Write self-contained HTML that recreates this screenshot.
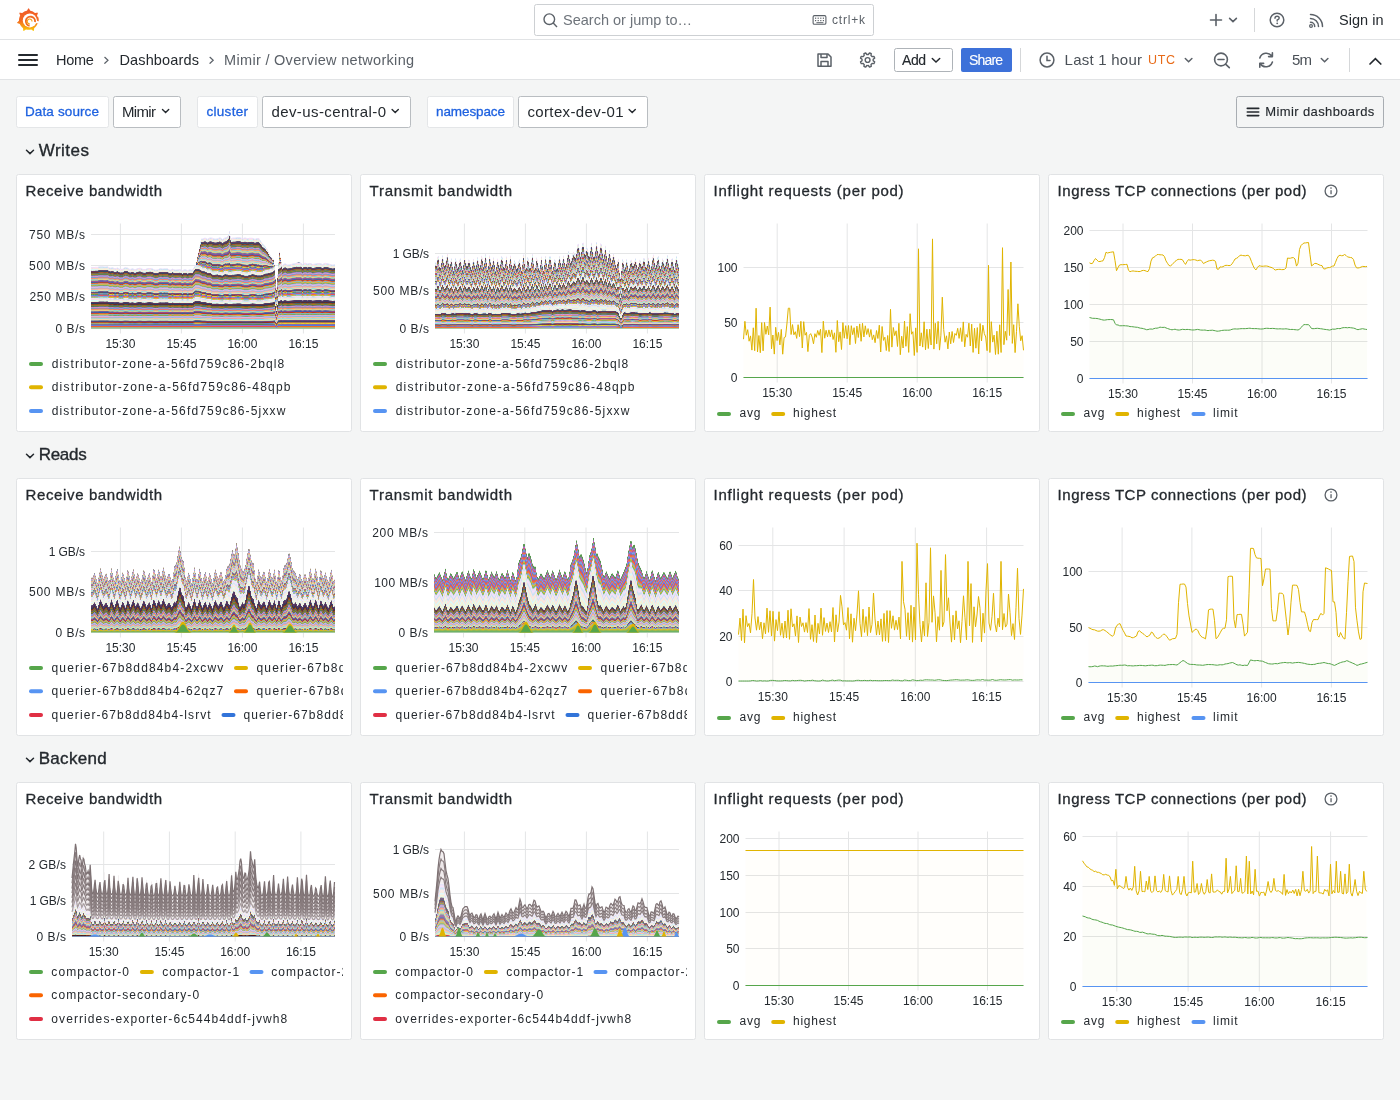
<!DOCTYPE html><html><head><meta charset="utf-8"><title>Mimir / Overview networking</title><style>html,body{margin:0;padding:0;background:#f4f5f5;width:1400px;height:1100px;overflow:hidden}svg{display:block;will-change:transform}</style></head><body><svg width="1400" height="1100" viewBox="0 0 1400 1100" font-family="'Liberation Sans', sans-serif" fill="#24292e"><style>.c rect{width:1px}</style><defs><linearGradient id="lg" x1="0" y1="0" x2="0" y2="1"><stop offset="0" stop-color="#F05A28"/><stop offset="0.55" stop-color="#F46A20"/><stop offset="1" stop-color="#FBCA0A"/></linearGradient><linearGradient id="g0" x1="0" y1="1" x2="0" y2="0"><stop offset="0.006" stop-color="#66ae5d"/><stop offset="0.022" stop-color="#e3bb19"/><stop offset="0.043" stop-color="#679ef3"/><stop offset="0.059" stop-color="#fa7319"/><stop offset="0.074" stop-color="#e34356"/><stop offset="0.091" stop-color="#4681dc"/><stop offset="0.108" stop-color="#ac63d1"/><stop offset="0.127" stop-color="#7e6da9"/><stop offset="0.143" stop-color="#4b9342"/><stop offset="0.154" stop-color="#f3d124"/><stop offset="0.169" stop-color="#568ac5"/><stop offset="0.188" stop-color="#c76c2e"/><stop offset="0.205" stop-color="#94271b"/><stop offset="0.220" stop-color="#225589"/><stop offset="0.233" stop-color="#7b3571"/><stop offset="0.251" stop-color="#685684"/><stop offset="0.269" stop-color="#bedeb3"/><stop offset="0.290" stop-color="#f5d9a2"/><stop offset="0.317" stop-color="#7edeee"/><stop offset="0.337" stop-color="#f9c09a"/><stop offset="0.349" stop-color="#f39c9c"/><stop offset="0.366" stop-color="#8ebcdb"/><stop offset="0.390" stop-color="#e7b0e4"/><stop offset="0.413" stop-color="#b6abe3"/><stop offset="0.430" stop-color="#71a762"/><stop offset="0.447" stop-color="#e7b426"/><stop offset="0.463" stop-color="#73b7cd"/><stop offset="0.477" stop-color="#e38242"/><stop offset="0.495" stop-color="#c53119"/><stop offset="0.514" stop-color="#2261aa"/><stop offset="0.532" stop-color="#a0428e"/><stop offset="0.548" stop-color="#705e9d"/><stop offset="0.564" stop-color="#a4c995"/><stop offset="0.582" stop-color="#f3ce7b"/><stop offset="0.600" stop-color="#74cade"/><stop offset="0.614" stop-color="#f99d5f"/><stop offset="0.633" stop-color="#ec736f"/><stop offset="0.657" stop-color="#629fd2"/><stop offset="0.679" stop-color="#da8fd2"/><stop offset="0.698" stop-color="#8c7cbe"/><stop offset="0.718" stop-color="#527747"/><stop offset="0.743" stop-color="#a0811b"/><stop offset="0.761" stop-color="#43676e"/><stop offset="0.775" stop-color="#a35622"/><stop offset="0.794" stop-color="#682b24"/><stop offset="0.815" stop-color="#1e4062"/><stop offset="0.839" stop-color="#622e5b"/><stop offset="0.860" stop-color="#52406b"/><stop offset="0.877" stop-color="#e3f9db"/><stop offset="0.895" stop-color="#fceccf"/><stop offset="0.910" stop-color="#d3faff"/><stop offset="0.924" stop-color="#f9e4d6"/><stop offset="0.941" stop-color="#fce4e1"/><stop offset="0.960" stop-color="#c0e2f5"/><stop offset="0.977" stop-color="#f9dcf9"/><stop offset="0.992" stop-color="#e1ddf7"/></linearGradient><linearGradient id="g1" x1="0" y1="1" x2="0" y2="0"><stop offset="0.005" stop-color="#6fb366"/><stop offset="0.018" stop-color="#e4bf26"/><stop offset="0.033" stop-color="#70a4f3"/><stop offset="0.049" stop-color="#fa7b26"/><stop offset="0.062" stop-color="#e44e60"/><stop offset="0.072" stop-color="#5088de"/><stop offset="0.082" stop-color="#b06bd3"/><stop offset="0.092" stop-color="#8575ae"/><stop offset="0.105" stop-color="#55994c"/><stop offset="0.117" stop-color="#f3d330"/><stop offset="0.128" stop-color="#6091c8"/><stop offset="0.140" stop-color="#ca7439"/><stop offset="0.150" stop-color="#9a3327"/><stop offset="0.162" stop-color="#2e5f8f"/><stop offset="0.177" stop-color="#824079"/><stop offset="0.192" stop-color="#71608b"/><stop offset="0.205" stop-color="#c1e0b7"/><stop offset="0.220" stop-color="#f5dba7"/><stop offset="0.236" stop-color="#85e0ef"/><stop offset="0.257" stop-color="#f9c49f"/><stop offset="0.283" stop-color="#f3a1a1"/><stop offset="0.308" stop-color="#94c0dd"/><stop offset="0.334" stop-color="#e8b5e6"/><stop offset="0.359" stop-color="#baafe4"/><stop offset="0.385" stop-color="#79ac6b"/><stop offset="0.412" stop-color="#e8b832"/><stop offset="0.433" stop-color="#7bbbd0"/><stop offset="0.454" stop-color="#e4894c"/><stop offset="0.478" stop-color="#c83d26"/><stop offset="0.500" stop-color="#2e6aaf"/><stop offset="0.523" stop-color="#a54c94"/><stop offset="0.544" stop-color="#7867a3"/><stop offset="0.563" stop-color="#a9cc9b"/><stop offset="0.582" stop-color="#f3d182"/><stop offset="0.600" stop-color="#7ccde0"/><stop offset="0.616" stop-color="#f9a368"/><stop offset="0.636" stop-color="#ed7b77"/><stop offset="0.661" stop-color="#6ba4d5"/><stop offset="0.688" stop-color="#dc95d5"/><stop offset="0.714" stop-color="#9383c1"/><stop offset="0.737" stop-color="#5b7e51"/><stop offset="0.760" stop-color="#a58827"/><stop offset="0.780" stop-color="#4e7076"/><stop offset="0.799" stop-color="#a8602e"/><stop offset="0.820" stop-color="#713730"/><stop offset="0.837" stop-color="#2a4a6b"/><stop offset="0.853" stop-color="#6b3964"/><stop offset="0.871" stop-color="#5b4a73"/><stop offset="0.888" stop-color="#e4f9dd"/><stop offset="0.903" stop-color="#fcedd1"/><stop offset="0.920" stop-color="#d6faff"/><stop offset="0.937" stop-color="#f9e6d8"/><stop offset="0.951" stop-color="#fce6e2"/><stop offset="0.965" stop-color="#c4e3f5"/><stop offset="0.980" stop-color="#f9def9"/><stop offset="0.993" stop-color="#e2dff8"/></linearGradient><linearGradient id="g2" x1="0" y1="1" x2="0" y2="0"><stop offset="0.005" stop-color="#6fb366"/><stop offset="0.017" stop-color="#e4bf26"/><stop offset="0.033" stop-color="#70a4f3"/><stop offset="0.049" stop-color="#fa7b26"/><stop offset="0.064" stop-color="#e44e60"/><stop offset="0.075" stop-color="#5088de"/><stop offset="0.088" stop-color="#b06bd3"/><stop offset="0.104" stop-color="#8575ae"/><stop offset="0.117" stop-color="#55994c"/><stop offset="0.131" stop-color="#f3d330"/><stop offset="0.145" stop-color="#6091c8"/><stop offset="0.159" stop-color="#ca7439"/><stop offset="0.172" stop-color="#9a3327"/><stop offset="0.182" stop-color="#2e5f8f"/><stop offset="0.197" stop-color="#824079"/><stop offset="0.212" stop-color="#71608b"/><stop offset="0.226" stop-color="#c1e0b7"/><stop offset="0.248" stop-color="#f5dba7"/><stop offset="0.273" stop-color="#85e0ef"/><stop offset="0.292" stop-color="#f9c49f"/><stop offset="0.311" stop-color="#f3a1a1"/><stop offset="0.334" stop-color="#94c0dd"/><stop offset="0.354" stop-color="#e8b5e6"/><stop offset="0.374" stop-color="#baafe4"/><stop offset="0.393" stop-color="#79ac6b"/><stop offset="0.410" stop-color="#e8b832"/><stop offset="0.426" stop-color="#7bbbd0"/><stop offset="0.441" stop-color="#e4894c"/><stop offset="0.464" stop-color="#c83d26"/><stop offset="0.489" stop-color="#2e6aaf"/><stop offset="0.513" stop-color="#a54c94"/><stop offset="0.538" stop-color="#7867a3"/><stop offset="0.560" stop-color="#a9cc9b"/><stop offset="0.585" stop-color="#f3d182"/><stop offset="0.611" stop-color="#7ccde0"/><stop offset="0.631" stop-color="#f9a368"/><stop offset="0.650" stop-color="#ed7b77"/><stop offset="0.673" stop-color="#6ba4d5"/><stop offset="0.692" stop-color="#dc95d5"/><stop offset="0.708" stop-color="#9383c1"/><stop offset="0.729" stop-color="#5b7e51"/><stop offset="0.753" stop-color="#a58827"/><stop offset="0.772" stop-color="#4e7076"/><stop offset="0.790" stop-color="#a8602e"/><stop offset="0.809" stop-color="#713730"/><stop offset="0.830" stop-color="#2a4a6b"/><stop offset="0.854" stop-color="#6b3964"/><stop offset="0.872" stop-color="#5b4a73"/><stop offset="0.890" stop-color="#e4f9dd"/><stop offset="0.907" stop-color="#fcedd1"/><stop offset="0.920" stop-color="#d6faff"/><stop offset="0.932" stop-color="#f9e6d8"/><stop offset="0.948" stop-color="#fce6e2"/><stop offset="0.964" stop-color="#c4e3f5"/><stop offset="0.979" stop-color="#f9def9"/><stop offset="0.994" stop-color="#e2dff8"/></linearGradient><linearGradient id="g3" x1="0" y1="1" x2="0" y2="0"><stop offset="0.010" stop-color="#6fb366"/><stop offset="0.031" stop-color="#e4bf26"/><stop offset="0.047" stop-color="#70a4f3"/><stop offset="0.057" stop-color="#fa7b26"/><stop offset="0.071" stop-color="#e44e60"/><stop offset="0.090" stop-color="#5088de"/><stop offset="0.108" stop-color="#b06bd3"/><stop offset="0.123" stop-color="#8575ae"/><stop offset="0.138" stop-color="#55994c"/><stop offset="0.154" stop-color="#f3d330"/><stop offset="0.171" stop-color="#6091c8"/><stop offset="0.184" stop-color="#ca7439"/><stop offset="0.197" stop-color="#9a3327"/><stop offset="0.211" stop-color="#2e5f8f"/><stop offset="0.227" stop-color="#824079"/><stop offset="0.247" stop-color="#71608b"/><stop offset="0.271" stop-color="#c1e0b7"/><stop offset="0.294" stop-color="#f5dba7"/><stop offset="0.313" stop-color="#85e0ef"/><stop offset="0.329" stop-color="#f9c49f"/><stop offset="0.343" stop-color="#f3a1a1"/><stop offset="0.355" stop-color="#94c0dd"/><stop offset="0.370" stop-color="#e8b5e6"/><stop offset="0.388" stop-color="#baafe4"/><stop offset="0.405" stop-color="#79ac6b"/><stop offset="0.426" stop-color="#e8b832"/><stop offset="0.448" stop-color="#7bbbd0"/><stop offset="0.468" stop-color="#e4894c"/><stop offset="0.485" stop-color="#c83d26"/><stop offset="0.499" stop-color="#2e6aaf"/><stop offset="0.513" stop-color="#a54c94"/><stop offset="0.528" stop-color="#7867a3"/><stop offset="0.544" stop-color="#a9cc9b"/><stop offset="0.567" stop-color="#f3d182"/><stop offset="0.591" stop-color="#7ccde0"/><stop offset="0.609" stop-color="#f9a368"/><stop offset="0.629" stop-color="#ed7b77"/><stop offset="0.653" stop-color="#6ba4d5"/><stop offset="0.677" stop-color="#dc95d5"/><stop offset="0.701" stop-color="#9383c1"/><stop offset="0.727" stop-color="#5b7e51"/><stop offset="0.755" stop-color="#a58827"/><stop offset="0.779" stop-color="#4e7076"/><stop offset="0.805" stop-color="#a8602e"/><stop offset="0.837" stop-color="#713730"/><stop offset="0.861" stop-color="#2a4a6b"/><stop offset="0.883" stop-color="#6b3964"/><stop offset="0.910" stop-color="#5b4a73"/><stop offset="0.928" stop-color="#e4f9dd"/><stop offset="0.938" stop-color="#fcedd1"/><stop offset="0.948" stop-color="#d6faff"/><stop offset="0.957" stop-color="#f9e6d8"/><stop offset="0.967" stop-color="#fce6e2"/><stop offset="0.976" stop-color="#c4e3f5"/><stop offset="0.986" stop-color="#f9def9"/><stop offset="0.995" stop-color="#e2dff8"/></linearGradient><linearGradient id="g4" x1="0" y1="1" x2="0" y2="0"><stop offset="0.005" stop-color="#e5fade"/><stop offset="0.015" stop-color="#fcedd3"/><stop offset="0.025" stop-color="#d7faff"/><stop offset="0.035" stop-color="#fae7da"/><stop offset="0.045" stop-color="#fce7e3"/><stop offset="0.055" stop-color="#c6e4f5"/><stop offset="0.065" stop-color="#fadffa"/><stop offset="0.075" stop-color="#e3e0f8"/><stop offset="0.081" stop-color="#74b66b"/><stop offset="0.086" stop-color="#e5c12d"/><stop offset="0.091" stop-color="#75a7f4"/><stop offset="0.096" stop-color="#fa7f2d"/><stop offset="0.101" stop-color="#e55465"/><stop offset="0.106" stop-color="#568ddf"/><stop offset="0.109" stop-color="#b371d5"/><stop offset="0.113" stop-color="#897ab1"/><stop offset="0.118" stop-color="#5b9c52"/><stop offset="0.122" stop-color="#f4d537"/><stop offset="0.128" stop-color="#6595ca"/><stop offset="0.134" stop-color="#cc7940"/><stop offset="0.139" stop-color="#9e3a2f"/><stop offset="0.145" stop-color="#366493"/><stop offset="0.150" stop-color="#87477e"/><stop offset="0.155" stop-color="#76658f"/><stop offset="0.162" stop-color="#c3e1ba"/><stop offset="0.174" stop-color="#f5dcaa"/><stop offset="0.185" stop-color="#89e1f0"/><stop offset="0.196" stop-color="#fac6a3"/><stop offset="0.208" stop-color="#f4a4a4"/><stop offset="0.217" stop-color="#98c2df"/><stop offset="0.226" stop-color="#e9b7e7"/><stop offset="0.237" stop-color="#bcb2e5"/><stop offset="0.247" stop-color="#7eaf70"/><stop offset="0.254" stop-color="#e9ba39"/><stop offset="0.264" stop-color="#7fbed1"/><stop offset="0.275" stop-color="#e58d52"/><stop offset="0.286" stop-color="#ca442d"/><stop offset="0.298" stop-color="#366fb1"/><stop offset="0.310" stop-color="#a85298"/><stop offset="0.323" stop-color="#7d6da6"/><stop offset="0.334" stop-color="#acce9f"/><stop offset="0.345" stop-color="#f4d287"/><stop offset="0.356" stop-color="#80cfe1"/><stop offset="0.367" stop-color="#faa66d"/><stop offset="0.380" stop-color="#ed7f7c"/><stop offset="0.390" stop-color="#70a8d6"/><stop offset="0.397" stop-color="#dd99d6"/><stop offset="0.404" stop-color="#9688c3"/><stop offset="0.414" stop-color="#618357"/><stop offset="0.423" stop-color="#a88c2f"/><stop offset="0.432" stop-color="#54757a"/><stop offset="0.440" stop-color="#ab6536"/><stop offset="0.448" stop-color="#763e37"/><stop offset="0.456" stop-color="#325170"/><stop offset="0.463" stop-color="#704069"/><stop offset="0.471" stop-color="#615178"/><stop offset="0.479" stop-color="#e5fade"/><stop offset="0.488" stop-color="#fcedd3"/><stop offset="0.498" stop-color="#d7faff"/><stop offset="0.507" stop-color="#fae7da"/><stop offset="0.517" stop-color="#fce7e3"/><stop offset="0.527" stop-color="#c6e4f5"/><stop offset="0.536" stop-color="#fadffa"/><stop offset="0.543" stop-color="#e3e0f8"/><stop offset="0.549" stop-color="#74b66b"/><stop offset="0.556" stop-color="#e5c12d"/><stop offset="0.562" stop-color="#75a7f4"/><stop offset="0.568" stop-color="#fa7f2d"/><stop offset="0.574" stop-color="#e55465"/><stop offset="0.579" stop-color="#568ddf"/><stop offset="0.584" stop-color="#b371d5"/><stop offset="0.589" stop-color="#897ab1"/><stop offset="0.594" stop-color="#5b9c52"/><stop offset="0.598" stop-color="#f4d537"/><stop offset="0.603" stop-color="#6595ca"/><stop offset="0.609" stop-color="#cc7940"/><stop offset="0.614" stop-color="#9e3a2f"/><stop offset="0.619" stop-color="#366493"/><stop offset="0.624" stop-color="#87477e"/><stop offset="0.629" stop-color="#76658f"/><stop offset="0.634" stop-color="#c3e1ba"/><stop offset="0.645" stop-color="#f5dcaa"/><stop offset="0.657" stop-color="#89e1f0"/><stop offset="0.667" stop-color="#fac6a3"/><stop offset="0.675" stop-color="#f4a4a4"/><stop offset="0.684" stop-color="#98c2df"/><stop offset="0.693" stop-color="#e9b7e7"/><stop offset="0.703" stop-color="#bcb2e5"/><stop offset="0.714" stop-color="#7eaf70"/><stop offset="0.727" stop-color="#e9ba39"/><stop offset="0.739" stop-color="#7fbed1"/><stop offset="0.751" stop-color="#e58d52"/><stop offset="0.762" stop-color="#ca442d"/><stop offset="0.770" stop-color="#366fb1"/><stop offset="0.778" stop-color="#a85298"/><stop offset="0.787" stop-color="#7d6da6"/><stop offset="0.794" stop-color="#acce9f"/><stop offset="0.802" stop-color="#f4d287"/><stop offset="0.812" stop-color="#80cfe1"/><stop offset="0.821" stop-color="#faa66d"/><stop offset="0.828" stop-color="#ed7f7c"/><stop offset="0.837" stop-color="#70a8d6"/><stop offset="0.848" stop-color="#dd99d6"/><stop offset="0.859" stop-color="#9688c3"/><stop offset="0.871" stop-color="#618357"/><stop offset="0.880" stop-color="#a88c2f"/><stop offset="0.888" stop-color="#54757a"/><stop offset="0.896" stop-color="#ab6536"/><stop offset="0.905" stop-color="#763e37"/><stop offset="0.914" stop-color="#325170"/><stop offset="0.923" stop-color="#704069"/><stop offset="0.932" stop-color="#615178"/><stop offset="0.942" stop-color="#e5fade"/><stop offset="0.950" stop-color="#fcedd3"/><stop offset="0.958" stop-color="#d7faff"/><stop offset="0.966" stop-color="#fae7da"/><stop offset="0.973" stop-color="#fce7e3"/><stop offset="0.979" stop-color="#c6e4f5"/><stop offset="0.987" stop-color="#fadffa"/><stop offset="0.996" stop-color="#e3e0f8"/></linearGradient><linearGradient id="g5" x1="0" y1="1" x2="0" y2="0"><stop offset="0.022" stop-color="#66ae5d"/><stop offset="0.066" stop-color="#e3bb19"/><stop offset="0.089" stop-color="#679ef3"/><stop offset="0.091" stop-color="#fa7319"/><stop offset="0.094" stop-color="#e34356"/><stop offset="0.097" stop-color="#4681dc"/><stop offset="0.099" stop-color="#ac63d1"/><stop offset="0.101" stop-color="#7e6da9"/><stop offset="0.105" stop-color="#4b9342"/><stop offset="0.109" stop-color="#f3d124"/><stop offset="0.113" stop-color="#568ac5"/><stop offset="0.117" stop-color="#c76c2e"/><stop offset="0.120" stop-color="#94271b"/><stop offset="0.123" stop-color="#225589"/><stop offset="0.125" stop-color="#7b3571"/><stop offset="0.127" stop-color="#685684"/><stop offset="0.141" stop-color="#bedeb3"/><stop offset="0.166" stop-color="#f5d9a2"/><stop offset="0.192" stop-color="#7edeee"/><stop offset="0.221" stop-color="#f9c09a"/><stop offset="0.248" stop-color="#f39c9c"/><stop offset="0.276" stop-color="#8ebcdb"/><stop offset="0.298" stop-color="#e7b0e4"/><stop offset="0.315" stop-color="#b6abe3"/><stop offset="0.340" stop-color="#71a762"/><stop offset="0.368" stop-color="#e7b426"/><stop offset="0.394" stop-color="#73b7cd"/><stop offset="0.416" stop-color="#e38242"/><stop offset="0.434" stop-color="#c53119"/><stop offset="0.454" stop-color="#2261aa"/><stop offset="0.474" stop-color="#a0428e"/><stop offset="0.497" stop-color="#705e9d"/><stop offset="0.515" stop-color="#a4c995"/><stop offset="0.530" stop-color="#f3ce7b"/><stop offset="0.548" stop-color="#74cade"/><stop offset="0.571" stop-color="#f99d5f"/><stop offset="0.599" stop-color="#ec736f"/><stop offset="0.620" stop-color="#629fd2"/><stop offset="0.642" stop-color="#da8fd2"/><stop offset="0.663" stop-color="#8c7cbe"/><stop offset="0.694" stop-color="#527747"/><stop offset="0.731" stop-color="#a0811b"/><stop offset="0.758" stop-color="#43676e"/><stop offset="0.797" stop-color="#a35622"/><stop offset="0.840" stop-color="#682b24"/><stop offset="0.872" stop-color="#1e4062"/><stop offset="0.917" stop-color="#622e5b"/><stop offset="0.973" stop-color="#52406b"/></linearGradient><linearGradient id="g6" x1="0" y1="1" x2="0" y2="0"><stop offset="0.019" stop-color="#e9fae3"/><stop offset="0.058" stop-color="#fcf0d9"/><stop offset="0.096" stop-color="#ddfbff"/><stop offset="0.135" stop-color="#faeadf"/><stop offset="0.173" stop-color="#fceae7"/><stop offset="0.211" stop-color="#cee8f7"/><stop offset="0.250" stop-color="#fae4fa"/><stop offset="0.288" stop-color="#e7e5f9"/><stop offset="0.314" stop-color="#88c081"/><stop offset="0.327" stop-color="#e9ca4c"/><stop offset="0.339" stop-color="#89b4f5"/><stop offset="0.349" stop-color="#fb924c"/><stop offset="0.357" stop-color="#e96d7c"/><stop offset="0.366" stop-color="#6f9de4"/><stop offset="0.377" stop-color="#be85db"/><stop offset="0.389" stop-color="#9a8dbc"/><stop offset="0.400" stop-color="#73ab6c"/><stop offset="0.411" stop-color="#f5db54"/><stop offset="0.422" stop-color="#7ca4d2"/><stop offset="0.433" stop-color="#d38c5c"/><stop offset="0.446" stop-color="#ac574d"/><stop offset="0.457" stop-color="#537ba3"/><stop offset="0.468" stop-color="#986291"/><stop offset="0.479" stop-color="#8a7c9f"/><stop offset="0.495" stop-color="#cce5c4"/><stop offset="0.512" stop-color="#f7e1b6"/><stop offset="0.531" stop-color="#9ae5f2"/><stop offset="0.550" stop-color="#faceb0"/><stop offset="0.568" stop-color="#f5b2b2"/><stop offset="0.589" stop-color="#a7cbe3"/><stop offset="0.605" stop-color="#ecc2ea"/><stop offset="0.623" stop-color="#c6bde9"/><stop offset="0.640" stop-color="#91bb85"/><stop offset="0.657" stop-color="#ecc456"/><stop offset="0.674" stop-color="#92c7d8"/><stop offset="0.688" stop-color="#e99e6c"/><stop offset="0.706" stop-color="#d25f4c"/><stop offset="0.729" stop-color="#5384bd"/><stop offset="0.750" stop-color="#b56ca7"/><stop offset="0.766" stop-color="#9082b3"/><stop offset="0.786" stop-color="#b8d5ad"/><stop offset="0.812" stop-color="#f5d998"/><stop offset="0.838" stop-color="#93d6e5"/><stop offset="0.859" stop-color="#fab383"/><stop offset="0.884" stop-color="#f0928f"/><stop offset="0.905" stop-color="#85b4dc"/><stop offset="0.926" stop-color="#e2a8dc"/><stop offset="0.948" stop-color="#a699cc"/><stop offset="0.963" stop-color="#92988a"/><stop offset="0.973" stop-color="#ab9b7c"/><stop offset="0.984" stop-color="#8d9396"/><stop offset="0.995" stop-color="#ab8e7e"/></linearGradient><clipPath id="cl01"><rect x="16" y="478" width="327" height="258"/></clipPath><linearGradient id="g7" x1="0" y1="1" x2="0" y2="0"><stop offset="0.049" stop-color="#6fb366"/><stop offset="0.135" stop-color="#e4bf26"/><stop offset="0.173" stop-color="#70a4f3"/><stop offset="0.177" stop-color="#fa7b26"/><stop offset="0.180" stop-color="#e44e60"/><stop offset="0.184" stop-color="#5088de"/><stop offset="0.187" stop-color="#b06bd3"/><stop offset="0.190" stop-color="#8575ae"/><stop offset="0.194" stop-color="#55994c"/><stop offset="0.198" stop-color="#f3d330"/><stop offset="0.201" stop-color="#6091c8"/><stop offset="0.205" stop-color="#ca7439"/><stop offset="0.209" stop-color="#9a3327"/><stop offset="0.212" stop-color="#2e5f8f"/><stop offset="0.216" stop-color="#824079"/><stop offset="0.219" stop-color="#71608b"/><stop offset="0.233" stop-color="#c1e0b7"/><stop offset="0.256" stop-color="#f5dba7"/><stop offset="0.276" stop-color="#85e0ef"/><stop offset="0.301" stop-color="#f9c49f"/><stop offset="0.324" stop-color="#f3a1a1"/><stop offset="0.343" stop-color="#94c0dd"/><stop offset="0.372" stop-color="#e8b5e6"/><stop offset="0.396" stop-color="#baafe4"/><stop offset="0.417" stop-color="#79ac6b"/><stop offset="0.443" stop-color="#e8b832"/><stop offset="0.464" stop-color="#7bbbd0"/><stop offset="0.483" stop-color="#e4894c"/><stop offset="0.508" stop-color="#c83d26"/><stop offset="0.534" stop-color="#2e6aaf"/><stop offset="0.560" stop-color="#a54c94"/><stop offset="0.584" stop-color="#7867a3"/><stop offset="0.602" stop-color="#a9cc9b"/><stop offset="0.620" stop-color="#f3d182"/><stop offset="0.641" stop-color="#7ccde0"/><stop offset="0.670" stop-color="#f9a368"/><stop offset="0.699" stop-color="#ed7b77"/><stop offset="0.727" stop-color="#6ba4d5"/><stop offset="0.753" stop-color="#dc95d5"/><stop offset="0.779" stop-color="#9383c1"/><stop offset="0.804" stop-color="#5b7e51"/><stop offset="0.826" stop-color="#a58827"/><stop offset="0.855" stop-color="#4e7076"/><stop offset="0.889" stop-color="#a8602e"/><stop offset="0.920" stop-color="#713730"/><stop offset="0.944" stop-color="#2a4a6b"/><stop offset="0.966" stop-color="#6b3964"/><stop offset="0.989" stop-color="#5b4a73"/></linearGradient><linearGradient id="g8" x1="0" y1="1" x2="0" y2="0"><stop offset="0.029" stop-color="#e4f9dd"/><stop offset="0.088" stop-color="#fcedd1"/><stop offset="0.147" stop-color="#d6faff"/><stop offset="0.205" stop-color="#f9e6d8"/><stop offset="0.264" stop-color="#fce6e2"/><stop offset="0.323" stop-color="#c4e3f5"/><stop offset="0.381" stop-color="#f9def9"/><stop offset="0.440" stop-color="#e2dff8"/><stop offset="0.488" stop-color="#6fb366"/><stop offset="0.526" stop-color="#e4bf26"/><stop offset="0.565" stop-color="#70a4f3"/><stop offset="0.603" stop-color="#fa7b26"/><stop offset="0.641" stop-color="#e44e60"/><stop offset="0.679" stop-color="#5088de"/><stop offset="0.721" stop-color="#b06bd3"/><stop offset="0.757" stop-color="#fa7b26"/><stop offset="0.789" stop-color="#8575ae"/><stop offset="0.821" stop-color="#70a4f3"/><stop offset="0.850" stop-color="#9383c1"/><stop offset="0.877" stop-color="#e44e60"/><stop offset="0.908" stop-color="#b06bd3"/><stop offset="0.965" stop-color="#55994c"/></linearGradient><clipPath id="cl11"><rect x="360" y="478" width="327" height="258"/></clipPath><linearGradient id="g9" x1="0" y1="1" x2="0" y2="0"><stop offset="0.015" stop-color="#1f3f7a"/><stop offset="0.039" stop-color="#58140c"/><stop offset="0.061" stop-color="#c9e4c0"/><stop offset="0.086" stop-color="#f6dfb1"/><stop offset="0.110" stop-color="#93e4f1"/><stop offset="0.132" stop-color="#facbab"/><stop offset="0.157" stop-color="#f5acac"/><stop offset="0.187" stop-color="#a1c7e1"/><stop offset="0.216" stop-color="#ebbde9"/><stop offset="0.239" stop-color="#c2b9e7"/><stop offset="0.260" stop-color="#89b67c"/><stop offset="0.283" stop-color="#ebc04a"/><stop offset="0.303" stop-color="#8ac3d5"/><stop offset="0.329" stop-color="#e79761"/><stop offset="0.363" stop-color="#cf543f"/><stop offset="0.388" stop-color="#477bb8"/><stop offset="0.411" stop-color="#b061a1"/><stop offset="0.440" stop-color="#8879ae"/><stop offset="0.464" stop-color="#b3d2a7"/><stop offset="0.485" stop-color="#f5d691"/><stop offset="0.509" stop-color="#8bd3e4"/><stop offset="0.535" stop-color="#faae7a"/><stop offset="0.560" stop-color="#ef8a87"/><stop offset="0.588" stop-color="#7cafda"/><stop offset="0.610" stop-color="#e0a2da"/><stop offset="0.634" stop-color="#9f92c9"/><stop offset="0.659" stop-color="#6f8d66"/><stop offset="0.679" stop-color="#b09641"/><stop offset="0.697" stop-color="#638186"/><stop offset="0.709" stop-color="#b27247"/><stop offset="0.718" stop-color="#814e48"/><stop offset="0.728" stop-color="#43607c"/><stop offset="0.743" stop-color="#7c5176"/><stop offset="0.759" stop-color="#6f6084"/><stop offset="0.778" stop-color="#e7fae1"/><stop offset="0.810" stop-color="#fcefd7"/><stop offset="0.842" stop-color="#dbfbff"/><stop offset="0.870" stop-color="#fae9dd"/><stop offset="0.899" stop-color="#fce9e6"/><stop offset="0.922" stop-color="#cbe7f6"/><stop offset="0.947" stop-color="#fae2fa"/><stop offset="0.981" stop-color="#e6e3f9"/></linearGradient><linearGradient id="g10" x1="0" y1="1" x2="0" y2="0"><stop offset="0.167" stop-color="#f3eff0"/><stop offset="0.500" stop-color="#e9e3e5"/><stop offset="0.833" stop-color="#f3eff0"/></linearGradient><clipPath id="cl02"><rect x="16" y="782" width="327" height="258"/></clipPath><linearGradient id="g11" x1="0" y1="1" x2="0" y2="0"><stop offset="0.010" stop-color="#1f3f7a"/><stop offset="0.025" stop-color="#e02f44"/><stop offset="0.043" stop-color="#cce5c4"/><stop offset="0.068" stop-color="#f7e1b6"/><stop offset="0.097" stop-color="#9ae5f2"/><stop offset="0.125" stop-color="#faceb0"/><stop offset="0.149" stop-color="#f5b2b2"/><stop offset="0.174" stop-color="#a7cbe3"/><stop offset="0.196" stop-color="#ecc2ea"/><stop offset="0.217" stop-color="#c6bde9"/><stop offset="0.243" stop-color="#91bb85"/><stop offset="0.271" stop-color="#ecc456"/><stop offset="0.294" stop-color="#92c7d8"/><stop offset="0.313" stop-color="#e99e6c"/><stop offset="0.331" stop-color="#d25f4c"/><stop offset="0.354" stop-color="#5384bd"/><stop offset="0.383" stop-color="#b56ca7"/><stop offset="0.405" stop-color="#9082b3"/><stop offset="0.430" stop-color="#b8d5ad"/><stop offset="0.463" stop-color="#f5d998"/><stop offset="0.493" stop-color="#93d6e5"/><stop offset="0.520" stop-color="#fab383"/><stop offset="0.542" stop-color="#f0928f"/><stop offset="0.558" stop-color="#85b4dc"/><stop offset="0.578" stop-color="#e2a8dc"/><stop offset="0.599" stop-color="#a699cc"/><stop offset="0.613" stop-color="#789570"/><stop offset="0.626" stop-color="#b59d4d"/><stop offset="0.638" stop-color="#6d898e"/><stop offset="0.651" stop-color="#b77c53"/><stop offset="0.668" stop-color="#8a5a54"/><stop offset="0.687" stop-color="#506a85"/><stop offset="0.706" stop-color="#855c7f"/><stop offset="0.724" stop-color="#786a8c"/><stop offset="0.748" stop-color="#e9fae3"/><stop offset="0.779" stop-color="#fcf0d9"/><stop offset="0.810" stop-color="#ddfbff"/><stop offset="0.836" stop-color="#faeadf"/><stop offset="0.868" stop-color="#fceae7"/><stop offset="0.909" stop-color="#cee8f7"/><stop offset="0.948" stop-color="#fae4fa"/><stop offset="0.983" stop-color="#e7e5f9"/></linearGradient><linearGradient id="g12" x1="0" y1="1" x2="0" y2="0"><stop offset="0.167" stop-color="#f3eff0"/><stop offset="0.500" stop-color="#ebe5e7"/><stop offset="0.833" stop-color="#f3eff0"/></linearGradient><clipPath id="cl12"><rect x="360" y="782" width="327" height="258"/></clipPath></defs><rect x="0" y="0" width="1400" height="1100" fill="#f4f5f5"/>
<rect x="0" y="0" width="1400" height="80" fill="#fff"/>
<rect x="0" y="39" width="1400" height="1" fill="#e1e3e5"/>
<rect x="0" y="79" width="1400" height="1" fill="#e1e3e5"/>
<path fill="url(#lg)" d="M28.60,8.20 L29.11,8.87 L29.56,9.56 L29.95,10.27 L30.31,10.75 L30.74,10.84 L31.15,10.95 L31.57,11.07 L31.97,11.21 L32.37,11.37 L32.77,11.55 L33.15,11.75 L33.52,11.96 L33.89,12.19 L34.24,12.43 L34.59,12.69 L34.92,12.97 L35.52,12.96 L36.32,12.82 L37.14,12.74 L37.98,12.72 L37.77,13.53 L37.51,14.32 L37.20,15.06 L37.05,15.65 L37.25,16.03 L37.43,16.43 L37.59,16.83 L37.73,17.23 L37.85,17.65 L37.96,18.06 L38.05,18.49 L38.11,18.91 L38.16,19.34 L38.19,19.77 L38.20,20.20 L38.19,20.63 L38.58,21.10 L39.18,21.63 L39.76,22.22 L40.30,22.87 L39.53,23.22 L38.76,23.50 L37.98,23.72 L37.43,23.97 L37.25,24.37 L37.05,24.75 L36.84,25.12 L36.61,25.49 L36.37,25.84 L36.11,26.19 L35.83,26.52 L35.54,26.83 L35.23,27.14 L34.92,27.43 L34.59,27.71 L34.24,27.97 L34.12,28.56 L34.08,29.37 L33.97,30.19 L33.81,31.01 L33.06,30.63 L32.35,30.20 L31.70,29.73 L31.15,29.45 L30.74,29.56 L30.31,29.65 L29.89,29.71 L29.46,29.76 L29.03,29.79 L28.60,29.80 L28.17,29.79 L27.74,29.76 L27.31,29.71 L26.89,29.65 L26.46,29.56 L26.05,29.45 L25.50,29.73 L24.85,30.20 L24.14,30.63 L23.39,31.01 L23.23,30.19 L23.12,29.37 L23.08,28.56 L22.96,27.97 L22.61,27.71 L22.28,27.43 L21.97,27.14 L21.66,26.83 L21.37,26.52 L21.09,26.19 L20.83,25.84 L20.59,25.49 L20.36,25.12 L20.15,24.75 L19.95,24.37 L19.77,23.97 L19.22,23.72 L18.44,23.50 L17.67,23.22 L16.90,22.87 L17.44,22.22 L18.02,21.63 L18.62,21.10 L19.01,20.63 L19.00,20.20 L19.01,19.77 L19.04,19.34 L19.09,18.91 L19.15,18.49 L19.24,18.06 L19.35,17.65 L19.47,17.23 L19.61,16.83 L19.77,16.43 L19.95,16.03 L20.15,15.65 L20.00,15.06 L19.69,14.32 L19.43,13.53 L19.22,12.72 L20.06,12.74 L20.88,12.82 L21.68,12.96 L22.28,12.97 L22.61,12.69 L22.96,12.43 L23.31,12.19 L23.68,11.96 L24.05,11.75 L24.43,11.55 L24.83,11.37 L25.23,11.21 L25.63,11.07 L26.05,10.95 L26.46,10.84 L26.89,10.75 L27.25,10.27 L27.64,9.56 L28.09,8.87Z"/>
<circle cx="29.8" cy="20.4" r="7.0" fill="#fff"/>
<path d="M29.8,20.4 L40.6,19.2 L40.6,24.7Z" fill="#fff"/>
<path d="M35.0,22.0 A4.6,4.6 0 1 0 29.6,25.8" fill="none" stroke="#F26B22" stroke-width="1.9"/>
<path d="M29.8,23.8 A2.4,2.4 0 1 1 32.0,21.4" fill="none" stroke="#F5A21A" stroke-width="1.2"/>
<path d="M37.4,17.0 A8.2,8.2 0 0 1 37.9,21.2" fill="none" stroke="#F26B22" stroke-width="1.6"/>
<rect x="534.5" y="4.5" width="339" height="31" rx="2" fill="#fff" stroke="#cdd0d3"/>
<g fill="none" stroke="#5b6168" stroke-width="1.4"><circle cx="549.3" cy="19.2" r="5.3"/><path d="M553.2,23.1 L557,26.9"/></g>
<text x="563.0" y="25.2" font-size="14.5" fill="#6e747b" textLength="129.0" lengthAdjust="spacing">Search or jump to…</text>
<g fill="none" stroke="#5b6168" stroke-width="1.1"><rect x="813.1" y="15.6" width="12.8" height="8.6" rx="1.3"/></g>
<g fill="#5b6168"><rect x="815" y="17.6" width="1.2" height="1.2"/><rect x="817.6" y="17.6" width="1.2" height="1.2"/><rect x="820.2" y="17.6" width="1.2" height="1.2"/><rect x="822.8" y="17.6" width="1.2" height="1.2"/><rect x="815" y="20" width="1.2" height="1.2"/><rect x="817.6" y="20" width="1.2" height="1.2"/><rect x="820.2" y="20" width="1.2" height="1.2"/><rect x="822.8" y="20" width="1.2" height="1.2"/><rect x="816.4" y="22.2" width="7" height="1"/></g>
<text x="832.0" y="24.4" font-size="12" fill="#5b6168" textLength="33.0" lengthAdjust="spacing">ctrl+k</text>
<g fill="none" stroke="#5b6168" stroke-width="1.6" stroke-linecap="round"><path d="M1216,14.5 V25.5 M1210.5,20 H1221.5"/><path d="M1229.6,18.4 L1233,21.6 L1236.4,18.4"/></g>
<rect x="1254" y="8" width="1" height="24" fill="#d5d7d9"/>
<g fill="none" stroke="#5b6168" stroke-width="1.5"><circle cx="1277" cy="20" r="6.8"/></g>
<path d="M1275,18.2 Q1275,16.2 1277.1,16.2 Q1279.2,16.2 1279.2,18 Q1279.2,19.3 1277.2,20 L1277.2,21" fill="none" stroke="#5b6168" stroke-width="1.4" stroke-linecap="round"/><circle cx="1277.2" cy="23.3" r="0.9" fill="#5b6168"/>
<g fill="none" stroke="#5b6168" stroke-width="1.5" stroke-linecap="round"><path d="M1310.5,14.5 A12,12 0 0 1 1322.5,26.5"/><path d="M1310.5,18.5 A8,8 0 0 1 1318.5,26.5"/><path d="M1310.5,22.3 A4.2,4.2 0 0 1 1314.7,26.5"/></g><circle cx="1311" cy="26" r="1.4" fill="none" stroke="#5b6168" stroke-width="1.2"/>
<text x="1339.0" y="24.7" font-size="14.5" textLength="44.5" lengthAdjust="spacing">Sign in</text>
<g fill="#24292e"><rect x="18" y="54" width="20" height="2" rx="1"/><rect x="18" y="59" width="20" height="2" rx="1"/><rect x="18" y="64" width="20" height="2" rx="1"/></g>
<text x="56.0" y="65.2" font-size="14.5" textLength="37.8" lengthAdjust="spacing">Home</text>
<g fill="none" stroke="#5b6168" stroke-width="1.2" stroke-linecap="round"><path d="M104.8,57.3 L108,60.3 L104.8,63.3"/><path d="M210,57.3 L213.2,60.3 L210,63.3"/></g>
<text x="119.4" y="65.2" font-size="14.5" textLength="79.6" lengthAdjust="spacing">Dashboards</text>
<text x="224.1" y="65.2" font-size="14.5" fill="#5b6168" textLength="190.0" lengthAdjust="spacing">Mimir / Overview networking</text>
<g fill="none" stroke="#5b6168" stroke-width="1.5" stroke-linejoin="round"><path d="M818,54 H828 L831,57 V66.3 H818 Z"/><path d="M821,54 V57.5 H827 V54"/><path d="M821,66.3 V61.5 H828 V66.3"/></g>
<path fill="none" stroke="#5b6168" stroke-width="1.4" stroke-linejoin="round" d="M874.65,61.88 L874.35,62.78 L873.93,63.64 L872.05,63.40 L871.57,63.95 L871.02,64.44 L871.26,66.32 L870.41,66.74 L869.50,67.05 L868.34,65.55 L867.61,65.60 L866.88,65.55 L865.72,67.05 L864.82,66.75 L863.96,66.33 L864.20,64.45 L863.65,63.97 L863.16,63.42 L861.28,63.66 L860.86,62.81 L860.55,61.90 L862.05,60.74 L862.00,60.01 L862.05,59.28 L860.55,58.12 L860.85,57.22 L861.27,56.36 L863.15,56.60 L863.63,56.05 L864.18,55.56 L863.94,53.68 L864.79,53.26 L865.70,52.95 L866.86,54.45 L867.59,54.40 L868.32,54.45 L869.48,52.95 L870.38,53.25 L871.24,53.67 L871.00,55.55 L871.55,56.03 L872.04,56.58 L873.92,56.34 L874.34,57.19 L874.65,58.10 L873.15,59.26 L873.20,59.99 L873.15,60.72Z"/>
<circle cx="867.6" cy="60" r="2.4" fill="none" stroke="#5b6168" stroke-width="1.4"/>
<rect x="894.5" y="48.5" width="58" height="23" rx="2" fill="#fff" stroke="#aeb3b8"/>
<text x="902.0" y="64.6" font-size="14" font-weight="500" textLength="24.0" lengthAdjust="spacing" stroke="#24292e" stroke-width="0.12">Add</text>
<path d="M932.3,58.5 L936,62 L939.7,58.5" fill="none" stroke="#24292e" stroke-width="1.5" stroke-linecap="round"/>
<rect x="961" y="48" width="51" height="24" rx="2" fill="#3d71d9"/>
<text x="969.0" y="64.6" font-size="14" fill="#ffffff" font-weight="500" textLength="34.0" lengthAdjust="spacing" stroke="#ffffff" stroke-width="0.12">Share</text>
<rect x="1020" y="48" width="1" height="24" fill="#d5d7d9"/>
<g fill="none" stroke="#5b6168" stroke-width="1.5" stroke-linecap="round"><circle cx="1047" cy="60" r="6.9"/><path d="M1047,56.3 V60.5 H1050"/></g>
<text x="1064.6" y="65.2" font-size="15" fill="#4a5057" textLength="77.4" lengthAdjust="spacing">Last 1 hour</text>
<text x="1148.0" y="64.4" font-size="12.5" fill="#e86a17" textLength="27.0" lengthAdjust="spacing">UTC</text>
<path d="M1185.3,58.5 L1188.6,61.7 L1191.9,58.5" fill="none" stroke="#5b6168" stroke-width="1.5" stroke-linecap="round"/>
<g fill="none" stroke="#5b6168" stroke-width="1.6" stroke-linecap="round"><circle cx="1221" cy="59.5" r="6.4"/><path d="M1218,59.5 H1224"/><path d="M1225.8,64.3 L1229.3,67.6"/></g>
<g fill="none" stroke="#5b6168" stroke-width="1.6" stroke-linecap="round" stroke-linejoin="round"><path d="M1259.8,58 A6.8,6.8 0 0 1 1272,56.3"/><path d="M1272.4,52.8 V56.6 H1268.6"/><path d="M1272.4,62 A6.8,6.8 0 0 1 1260.2,63.7"/><path d="M1259.8,67.2 V63.4 H1263.6"/></g>
<text x="1292.0" y="65.2" font-size="15" fill="#4a5057" textLength="20.0" lengthAdjust="spacing">5m</text>
<path d="M1321.3,58.5 L1324.6,61.7 L1327.9,58.5" fill="none" stroke="#5b6168" stroke-width="1.5" stroke-linecap="round"/>
<rect x="1349" y="48" width="1" height="24" fill="#d5d7d9"/>
<path d="M1370,64 L1375.4,58.6 L1380.8,64" fill="none" stroke="#24292e" stroke-width="1.7" stroke-linecap="round"/>
<rect x="16.5" y="96.5" width="92" height="31" rx="2" fill="#fff" stroke="#e4e6e8"/>
<text x="25.0" y="116.2" font-size="13.5" fill="#1f62e0" font-weight="500" textLength="74.0" lengthAdjust="spacing" stroke="#1f62e0" stroke-width="0.3">Data source</text>
<rect x="113.5" y="96.5" width="67" height="31" rx="2" fill="#fff" stroke="#b9bdc1"/>
<text x="122.0" y="116.9" font-size="15" textLength="34.0" lengthAdjust="spacing">Mimir</text>
<path d="M162.5,109.6 L165.6,112.6 L168.7,109.6" fill="none" stroke="#24292e" stroke-width="1.4" stroke-linecap="round"/>
<rect x="197.5" y="96.5" width="60" height="31" rx="2" fill="#fff" stroke="#e4e6e8"/>
<text x="206.5" y="116.2" font-size="13.5" fill="#1f62e0" font-weight="500" textLength="41.5" lengthAdjust="spacing" stroke="#1f62e0" stroke-width="0.3">cluster</text>
<rect x="262.5" y="96.5" width="148" height="31" rx="2" fill="#fff" stroke="#b9bdc1"/>
<text x="271.4" y="116.9" font-size="15" textLength="114.6" lengthAdjust="spacing">dev-us-central-0</text>
<path d="M392.1,109.6 L395.20000000000005,112.6 L398.3,109.6" fill="none" stroke="#24292e" stroke-width="1.4" stroke-linecap="round"/>
<rect x="427.5" y="96.5" width="86" height="31" rx="2" fill="#fff" stroke="#e4e6e8"/>
<text x="436.0" y="116.2" font-size="13.5" fill="#1f62e0" font-weight="500" textLength="69.0" lengthAdjust="spacing" stroke="#1f62e0" stroke-width="0.3">namespace</text>
<rect x="518.5" y="96.5" width="129" height="31" rx="2" fill="#fff" stroke="#b9bdc1"/>
<text x="527.4" y="116.9" font-size="15" textLength="96.2" lengthAdjust="spacing">cortex-dev-01</text>
<path d="M629.1,109.6 L632.2,112.6 L635.3000000000001,109.6" fill="none" stroke="#24292e" stroke-width="1.4" stroke-linecap="round"/>
<rect x="1236.5" y="96.5" width="147" height="31" rx="2" fill="#f4f5f5" stroke="#a8adb2"/>
<g fill="#24292e"><rect x="1246.5" y="107.6" width="13" height="1.6" rx="0.8"/><rect x="1246.5" y="111.2" width="13" height="1.6" rx="0.8"/><rect x="1246.5" y="114.8" width="13" height="1.6" rx="0.8"/></g>
<text x="1265.3" y="116.3" font-size="13" font-weight="500" textLength="109.0" lengthAdjust="spacing" stroke="#24292e" stroke-width="0.12">Mimir dashboards</text>
<path d="M26.5,150.2 L30,153.6 L33.5,150.2" fill="none" stroke="#24292e" stroke-width="1.5" stroke-linecap="round"/>
<text x="38.7" y="155.8" font-size="17" font-weight="500" textLength="50.3" lengthAdjust="spacing" stroke="#24292e" stroke-width="0.35">Writes</text>
<path d="M26.5,454.2 L30,457.6 L33.5,454.2" fill="none" stroke="#24292e" stroke-width="1.5" stroke-linecap="round"/>
<text x="38.7" y="459.8" font-size="17" font-weight="500" textLength="48.0" lengthAdjust="spacing" stroke="#24292e" stroke-width="0.35">Reads</text>
<path d="M26.5,758.2 L30,761.6 L33.5,758.2" fill="none" stroke="#24292e" stroke-width="1.5" stroke-linecap="round"/>
<text x="38.7" y="763.8" font-size="17" font-weight="500" textLength="68.0" lengthAdjust="spacing" stroke="#24292e" stroke-width="0.35">Backend</text>
<rect x="16.5" y="174.5" width="335" height="257" rx="2" fill="#fff" stroke="#e1e3e5"/>
<text x="25.6" y="196.1" font-size="15" font-weight="500" textLength="136.6" lengthAdjust="spacing" stroke="#24292e" stroke-width="0.3">Receive bandwidth</text>
<path d="M91,234.5 H335 M91,265.5 H335 M91,296.5 H335 M91,328.5 H335 M120.4,223.5 V333.5 M181.4,223.5 V333.5 M242.4,223.5 V333.5 M303.4,223.5 V333.5" stroke="#e4e5e6" stroke-width="1" fill="none"/>
<text x="85.0" y="238.9" font-size="12" text-anchor="end" textLength="56.0" lengthAdjust="spacing">750 MB/s</text>
<text x="85.0" y="269.9" font-size="12" text-anchor="end" textLength="56.0" lengthAdjust="spacing">500 MB/s</text>
<text x="85.0" y="300.9" font-size="12" text-anchor="end" textLength="55.5" lengthAdjust="spacing">250 MB/s</text>
<text x="85.0" y="332.9" font-size="12" text-anchor="end" textLength="29.5" lengthAdjust="spacing">0 B/s</text>
<text x="120.4" y="348.0" font-size="12" text-anchor="middle">15:30</text>
<text x="181.4" y="348.0" font-size="12" text-anchor="middle">15:45</text>
<text x="242.4" y="348.0" font-size="12" text-anchor="middle">16:00</text>
<text x="303.4" y="348.0" font-size="12" text-anchor="middle">16:15</text>
<g class="c" fill="url(#g0)"><rect x="91" y="297.8" height="30.7"/><rect x="92" y="297.8" height="30.7"/><rect x="93" y="297.8" height="30.7"/><rect x="94" y="297.7" height="30.8"/><rect x="95" y="297.7" height="30.8"/><rect x="96" y="297.7" height="30.8"/><rect x="97" y="297.7" height="30.8"/><rect x="98" y="297.6" height="30.9"/><rect x="99" y="297.4" height="31.1"/><rect x="100" y="297.4" height="31.1"/><rect x="101" y="297.4" height="31.1"/><rect x="102" y="297.4" height="31.1"/><rect x="103" y="297.4" height="31.1"/><rect x="104" y="297.5" height="31"/><rect x="105" y="297.5" height="31"/><rect x="106" y="297.4" height="31.1"/><rect x="107" y="297.4" height="31.1"/><rect x="108" y="297.7" height="30.8"/><rect x="109" y="298" height="30.5"/><rect x="110" y="298.1" height="30.4"/><rect x="111" y="298" height="30.5"/><rect x="112" y="297.9" height="30.6"/><rect x="113" y="298.1" height="30.4"/><rect x="114" y="298.3" height="30.2"/><rect x="115" y="298.3" height="30.2"/><rect x="116" y="298.2" height="30.3"/><rect x="117" y="298.1" height="30.4"/><rect x="118" y="298.3" height="30.2"/><rect x="119" y="298.6" height="29.9"/><rect x="120" y="298.7" height="29.8"/><rect x="121" y="298.7" height="29.8"/><rect x="122" y="298.6" height="29.9"/><rect x="123" y="298.3" height="30.2"/><rect x="124" y="298" height="30.5"/><rect x="125" y="297.9" height="30.6"/><rect x="126" y="298" height="30.5"/><rect x="127" y="298.1" height="30.4"/><rect x="128" y="298.3" height="30.2"/><rect x="129" y="298.6" height="29.9"/><rect x="130" y="298.7" height="29.8"/><rect x="131" y="298.5" height="30"/><rect x="132" y="298.4" height="30.1"/><rect x="133" y="298.6" height="29.9"/><rect x="134" y="298.8" height="29.7"/><rect x="135" y="298.8" height="29.7"/><rect x="136" y="298.6" height="29.9"/><rect x="137" y="298.4" height="30.1"/><rect x="138" y="298.2" height="30.3"/><rect x="139" y="298.1" height="30.4"/><rect x="140" y="298.2" height="30.3"/><rect x="141" y="298.4" height="30.1"/><rect x="142" y="298.7" height="29.8"/><rect x="143" y="298.7" height="29.8"/><rect x="144" y="298.8" height="29.7"/><rect x="145" y="298.7" height="29.8"/><rect x="146" y="298.6" height="29.9"/><rect x="147" y="298.4" height="30.1"/><rect x="148" y="298.3" height="30.2"/><rect x="149" y="298.2" height="30.3"/><rect x="150" y="298.3" height="30.2"/><rect x="151" y="298.4" height="30.1"/><rect x="152" y="298.5" height="30"/><rect x="153" y="298.8" height="29.7"/><rect x="154" y="299" height="29.5"/><rect x="155" y="299.1" height="29.4"/><rect x="156" y="299" height="29.5"/><rect x="157" y="299" height="29.5"/><rect x="158" y="298.7" height="29.8"/><rect x="159" y="298.5" height="30"/><rect x="160" y="298.4" height="30.1"/><rect x="161" y="298.5" height="30"/><rect x="162" y="298.5" height="30"/><rect x="163" y="298.5" height="30"/><rect x="164" y="298.5" height="30"/><rect x="165" y="298.4" height="30.1"/><rect x="166" y="298.4" height="30.1"/><rect x="167" y="298.4" height="30.1"/><rect x="168" y="298.7" height="29.8"/><rect x="169" y="299" height="29.5"/><rect x="170" y="299.1" height="29.4"/><rect x="171" y="298.9" height="29.6"/><rect x="172" y="298.6" height="29.9"/><rect x="173" y="298.8" height="29.7"/><rect x="174" y="299" height="29.5"/><rect x="175" y="299" height="29.5"/><rect x="176" y="299" height="29.5"/><rect x="177" y="299" height="29.5"/><rect x="178" y="298.9" height="29.6"/><rect x="179" y="298.8" height="29.7"/><rect x="180" y="298.9" height="29.6"/><rect x="181" y="299.1" height="29.4"/><rect x="182" y="299.3" height="29.2"/><rect x="183" y="299.1" height="29.4"/><rect x="184" y="298.9" height="29.6"/><rect x="185" y="298.9" height="29.6"/><rect x="186" y="299.1" height="29.4"/><rect x="187" y="299.3" height="29.2"/><rect x="188" y="299.1" height="29.4"/><rect x="189" y="298.9" height="29.6"/><rect x="190" y="298.9" height="29.6"/><rect x="191" y="299" height="29.5"/><rect x="192" y="298.9" height="29.6"/><rect x="193" y="298.2" height="30.3"/><rect x="194" y="297.4" height="31.1"/><rect x="195" y="296.8" height="31.7"/><rect x="196" y="296.8" height="31.7"/><rect x="197" y="296.8" height="31.7"/><rect x="198" y="296.9" height="31.6"/><rect x="199" y="297" height="31.5"/><rect x="200" y="297.3" height="31.2"/><rect x="201" y="297.7" height="30.8"/><rect x="202" y="298" height="30.5"/><rect x="203" y="298.1" height="30.4"/><rect x="204" y="298.1" height="30.4"/><rect x="205" y="298.3" height="30.2"/><rect x="206" y="298.6" height="29.9"/><rect x="207" y="299" height="29.5"/><rect x="208" y="298.9" height="29.6"/><rect x="209" y="298.8" height="29.7"/><rect x="210" y="299" height="29.5"/><rect x="211" y="299.4" height="29.1"/><rect x="212" y="299.9" height="28.6"/><rect x="213" y="299.9" height="28.6"/><rect x="214" y="299.9" height="28.6"/><rect x="215" y="299.9" height="28.6"/><rect x="216" y="299.8" height="28.7"/><rect x="217" y="299.8" height="28.7"/><rect x="218" y="299.9" height="28.6"/><rect x="219" y="300.1" height="28.4"/><rect x="220" y="300.2" height="28.3"/><rect x="221" y="300.3" height="28.2"/><rect x="222" y="300.3" height="28.2"/><rect x="223" y="300" height="28.5"/><rect x="224" y="299.8" height="28.7"/><rect x="225" y="299.6" height="28.9"/><rect x="226" y="299.7" height="28.8"/><rect x="227" y="299.8" height="28.7"/><rect x="228" y="300" height="28.5"/><rect x="229" y="300.1" height="28.4"/><rect x="230" y="300.1" height="28.4"/><rect x="231" y="300" height="28.5"/><rect x="232" y="299.9" height="28.6"/><rect x="233" y="299.8" height="28.7"/><rect x="234" y="299.8" height="28.7"/><rect x="235" y="299.8" height="28.7"/><rect x="236" y="299.7" height="28.8"/><rect x="237" y="299.6" height="28.9"/><rect x="238" y="299.6" height="28.9"/><rect x="239" y="299.6" height="28.9"/><rect x="240" y="299.7" height="28.8"/><rect x="241" y="299.9" height="28.6"/><rect x="242" y="300.1" height="28.4"/><rect x="243" y="300.2" height="28.3"/><rect x="244" y="300.3" height="28.2"/><rect x="245" y="300.4" height="28.1"/><rect x="246" y="300.4" height="28.1"/><rect x="247" y="300.4" height="28.1"/><rect x="248" y="300.2" height="28.3"/><rect x="249" y="300.1" height="28.4"/><rect x="250" y="299.9" height="28.6"/><rect x="251" y="299.8" height="28.7"/><rect x="252" y="299.6" height="28.9"/><rect x="253" y="299.7" height="28.8"/><rect x="254" y="299.8" height="28.7"/><rect x="255" y="299.9" height="28.6"/><rect x="256" y="300.1" height="28.4"/><rect x="257" y="300.2" height="28.3"/><rect x="258" y="300.2" height="28.3"/><rect x="259" y="300.3" height="28.2"/><rect x="260" y="300.2" height="28.3"/><rect x="261" y="300.2" height="28.3"/><rect x="262" y="300" height="28.5"/><rect x="263" y="299.8" height="28.7"/><rect x="264" y="299.5" height="29"/><rect x="265" y="299.3" height="29.2"/><rect x="266" y="299.3" height="29.2"/><rect x="267" y="299.2" height="29.3"/><rect x="268" y="299" height="29.5"/><rect x="269" y="298.9" height="29.6"/><rect x="270" y="298.7" height="29.8"/><rect x="271" y="298.6" height="29.9"/><rect x="272" y="298.5" height="30"/><rect x="273" y="298" height="30.5"/><rect x="274" y="297.6" height="30.9"/><rect x="275" y="302.4" height="26.1"/><rect x="276" y="308" height="20.5"/><rect x="277" y="301.6" height="26.9"/><rect x="278" y="296.9" height="31.6"/><rect x="279" y="296.6" height="31.9"/><rect x="280" y="296.1" height="32.4"/><rect x="281" y="295.6" height="32.9"/><rect x="282" y="296.7" height="31.8"/><rect x="283" y="296.4" height="32.1"/><rect x="284" y="296" height="32.5"/><rect x="285" y="296" height="32.5"/><rect x="286" y="296.3" height="32.2"/><rect x="287" y="296.5" height="32"/><rect x="288" y="296.5" height="32"/><rect x="289" y="296.4" height="32.1"/><rect x="290" y="296.3" height="32.2"/><rect x="291" y="296.2" height="32.3"/><rect x="292" y="296.1" height="32.4"/><rect x="293" y="296" height="32.5"/><rect x="294" y="295.9" height="32.6"/><rect x="295" y="295.7" height="32.8"/><rect x="296" y="295.6" height="32.9"/><rect x="297" y="295.7" height="32.8"/><rect x="298" y="295.7" height="32.8"/><rect x="299" y="295.7" height="32.8"/><rect x="300" y="295.6" height="32.9"/><rect x="301" y="295.9" height="32.6"/><rect x="302" y="296.2" height="32.3"/><rect x="303" y="296" height="32.5"/><rect x="304" y="295.7" height="32.8"/><rect x="305" y="295.7" height="32.8"/><rect x="306" y="295.9" height="32.6"/><rect x="307" y="296.1" height="32.4"/><rect x="308" y="295.9" height="32.6"/><rect x="309" y="295.7" height="32.8"/><rect x="310" y="295.8" height="32.7"/><rect x="311" y="296" height="32.5"/><rect x="312" y="296.3" height="32.2"/><rect x="313" y="296.2" height="32.3"/><rect x="314" y="296.1" height="32.4"/><rect x="315" y="296" height="32.5"/><rect x="316" y="295.9" height="32.6"/><rect x="317" y="295.8" height="32.7"/><rect x="318" y="295.8" height="32.7"/><rect x="319" y="295.7" height="32.8"/><rect x="320" y="295.8" height="32.7"/><rect x="321" y="296.1" height="32.4"/><rect x="322" y="296.3" height="32.2"/><rect x="323" y="296" height="32.5"/><rect x="324" y="295.8" height="32.7"/><rect x="325" y="295.7" height="32.8"/><rect x="326" y="295.8" height="32.7"/><rect x="327" y="295.9" height="32.6"/><rect x="328" y="296" height="32.5"/><rect x="329" y="296.2" height="32.3"/><rect x="330" y="296.3" height="32.2"/><rect x="331" y="296.4" height="32.1"/><rect x="332" y="296.6" height="31.9"/><rect x="333" y="296.5" height="32"/><rect x="334" y="296.4" height="32.1"/></g>
<g class="c" fill="url(#g1)"><rect x="91" y="267" height="30.7"/><rect x="92" y="267.1" height="30.7"/><rect x="93" y="267" height="30.7"/><rect x="94" y="267" height="30.8"/><rect x="95" y="266.9" height="30.8"/><rect x="96" y="266.9" height="30.8"/><rect x="97" y="266.9" height="30.8"/><rect x="98" y="266.6" height="30.9"/><rect x="99" y="266.4" height="31.1"/><rect x="100" y="266.3" height="31.1"/><rect x="101" y="266.3" height="31.1"/><rect x="102" y="266.3" height="31.1"/><rect x="103" y="266.4" height="31.1"/><rect x="104" y="266.5" height="31"/><rect x="105" y="266.5" height="31"/><rect x="106" y="266.4" height="31.1"/><rect x="107" y="266.3" height="31.1"/><rect x="108" y="266.9" height="30.8"/><rect x="109" y="267.5" height="30.5"/><rect x="110" y="267.7" height="30.4"/><rect x="111" y="267.5" height="30.5"/><rect x="112" y="267.3" height="30.6"/><rect x="113" y="267.7" height="30.4"/><rect x="114" y="268.1" height="30.2"/><rect x="115" y="268.2" height="30.2"/><rect x="116" y="267.9" height="30.3"/><rect x="117" y="267.6" height="30.4"/><rect x="118" y="268.1" height="30.2"/><rect x="119" y="268.7" height="29.9"/><rect x="120" y="268.9" height="29.8"/><rect x="121" y="268.8" height="29.8"/><rect x="122" y="268.8" height="29.9"/><rect x="123" y="268.1" height="30.2"/><rect x="124" y="267.5" height="30.5"/><rect x="125" y="267.2" height="30.6"/><rect x="126" y="267.4" height="30.5"/><rect x="127" y="267.6" height="30.4"/><rect x="128" y="268.2" height="30.2"/><rect x="129" y="268.8" height="29.9"/><rect x="130" y="268.9" height="29.8"/><rect x="131" y="268.6" height="30"/><rect x="132" y="268.3" height="30.1"/><rect x="133" y="268.7" height="29.9"/><rect x="134" y="269.1" height="29.7"/><rect x="135" y="269.1" height="29.7"/><rect x="136" y="268.7" height="29.9"/><rect x="137" y="268.2" height="30.1"/><rect x="138" y="268" height="30.3"/><rect x="139" y="267.8" height="30.4"/><rect x="140" y="267.9" height="30.3"/><rect x="141" y="268.4" height="30.1"/><rect x="142" y="268.8" height="29.8"/><rect x="143" y="269" height="29.8"/><rect x="144" y="269.1" height="29.7"/><rect x="145" y="269" height="29.8"/><rect x="146" y="268.6" height="29.9"/><rect x="147" y="268.2" height="30.1"/><rect x="148" y="268.1" height="30.2"/><rect x="149" y="268" height="30.3"/><rect x="150" y="268" height="30.2"/><rect x="151" y="268.3" height="30.1"/><rect x="152" y="268.5" height="30"/><rect x="153" y="269" height="29.7"/><rect x="154" y="269.5" height="29.5"/><rect x="155" y="269.7" height="29.4"/><rect x="156" y="269.6" height="29.5"/><rect x="157" y="269.5" height="29.5"/><rect x="158" y="269" height="29.8"/><rect x="159" y="268.5" height="30"/><rect x="160" y="268.3" height="30.1"/><rect x="161" y="268.4" height="30"/><rect x="162" y="268.6" height="30"/><rect x="163" y="268.5" height="30"/><rect x="164" y="268.4" height="30"/><rect x="165" y="268.4" height="30.1"/><rect x="166" y="268.4" height="30.1"/><rect x="167" y="268.4" height="30.1"/><rect x="168" y="269" height="29.8"/><rect x="169" y="269.6" height="29.5"/><rect x="170" y="269.7" height="29.4"/><rect x="171" y="269.2" height="29.6"/><rect x="172" y="268.7" height="29.9"/><rect x="173" y="269.1" height="29.7"/><rect x="174" y="269.4" height="29.5"/><rect x="175" y="269.6" height="29.5"/><rect x="176" y="269.5" height="29.5"/><rect x="177" y="269.4" height="29.5"/><rect x="178" y="269.3" height="29.6"/><rect x="179" y="269.1" height="29.7"/><rect x="180" y="269.2" height="29.6"/><rect x="181" y="269.7" height="29.4"/><rect x="182" y="270.2" height="29.2"/><rect x="183" y="269.7" height="29.4"/><rect x="184" y="269.3" height="29.6"/><rect x="185" y="269.3" height="29.6"/><rect x="186" y="269.7" height="29.4"/><rect x="187" y="270.1" height="29.2"/><rect x="188" y="269.8" height="29.4"/><rect x="189" y="269.4" height="29.6"/><rect x="190" y="269.3" height="29.6"/><rect x="191" y="269.6" height="29.5"/><rect x="192" y="269.2" height="29.6"/><rect x="193" y="267.8" height="30.3"/><rect x="194" y="266.4" height="31.1"/><rect x="195" y="265.1" height="31.7"/><rect x="196" y="265.1" height="31.7"/><rect x="197" y="265.2" height="31.7"/><rect x="198" y="265.3" height="31.6"/><rect x="199" y="265.6" height="31.5"/><rect x="200" y="266.2" height="31.2"/><rect x="201" y="266.9" height="30.8"/><rect x="202" y="267.5" height="30.5"/><rect x="203" y="267.6" height="30.4"/><rect x="204" y="267.7" height="30.4"/><rect x="205" y="268.1" height="30.2"/><rect x="206" y="268.7" height="29.9"/><rect x="207" y="269.4" height="29.5"/><rect x="208" y="269.3" height="29.6"/><rect x="209" y="269.2" height="29.7"/><rect x="210" y="269.5" height="29.5"/><rect x="211" y="270.4" height="29.1"/><rect x="212" y="271.2" height="28.6"/><rect x="213" y="271.3" height="28.6"/><rect x="214" y="271.3" height="28.6"/><rect x="215" y="271.2" height="28.6"/><rect x="216" y="271.1" height="28.7"/><rect x="217" y="271" height="28.7"/><rect x="218" y="271.4" height="28.6"/><rect x="219" y="271.7" height="28.4"/><rect x="220" y="271.9" height="28.3"/><rect x="221" y="272.1" height="28.2"/><rect x="222" y="272.2" height="28.2"/><rect x="223" y="271.6" height="28.5"/><rect x="224" y="271" height="28.7"/><rect x="225" y="270.8" height="28.9"/><rect x="226" y="271" height="28.8"/><rect x="227" y="271.1" height="28.7"/><rect x="228" y="271.5" height="28.5"/><rect x="229" y="271.8" height="28.4"/><rect x="230" y="271.8" height="28.4"/><rect x="231" y="271.5" height="28.5"/><rect x="232" y="271.2" height="28.6"/><rect x="233" y="271.2" height="28.7"/><rect x="234" y="271.1" height="28.7"/><rect x="235" y="271" height="28.7"/><rect x="236" y="270.9" height="28.8"/><rect x="237" y="270.7" height="28.9"/><rect x="238" y="270.7" height="28.9"/><rect x="239" y="270.8" height="28.9"/><rect x="240" y="270.9" height="28.8"/><rect x="241" y="271.3" height="28.6"/><rect x="242" y="271.7" height="28.4"/><rect x="243" y="271.9" height="28.3"/><rect x="244" y="272.2" height="28.2"/><rect x="245" y="272.3" height="28.1"/><rect x="246" y="272.3" height="28.1"/><rect x="247" y="272.3" height="28.1"/><rect x="248" y="272" height="28.3"/><rect x="249" y="271.7" height="28.4"/><rect x="250" y="271.4" height="28.6"/><rect x="251" y="271" height="28.7"/><rect x="252" y="270.7" height="28.9"/><rect x="253" y="270.9" height="28.8"/><rect x="254" y="271.1" height="28.7"/><rect x="255" y="271.4" height="28.6"/><rect x="256" y="271.7" height="28.4"/><rect x="257" y="272" height="28.3"/><rect x="258" y="272" height="28.3"/><rect x="259" y="272" height="28.2"/><rect x="260" y="272" height="28.3"/><rect x="261" y="271.8" height="28.3"/><rect x="262" y="271.6" height="28.5"/><rect x="263" y="271" height="28.7"/><rect x="264" y="270.4" height="29"/><rect x="265" y="270.1" height="29.2"/><rect x="266" y="270" height="29.2"/><rect x="267" y="269.9" height="29.3"/><rect x="268" y="269.6" height="29.5"/><rect x="269" y="269.2" height="29.6"/><rect x="270" y="269" height="29.8"/><rect x="271" y="268.8" height="29.9"/><rect x="272" y="268.4" height="30"/><rect x="273" y="267.6" height="30.5"/><rect x="274" y="266.7" height="30.9"/><rect x="275" y="276.3" height="26.1"/><rect x="276" y="287.4" height="20.5"/><rect x="277" y="274.6" height="26.9"/><rect x="278" y="265.3" height="31.6"/><rect x="279" y="264.6" height="31.9"/><rect x="280" y="263.8" height="32.4"/><rect x="281" y="262.7" height="32.9"/><rect x="282" y="264.9" height="31.8"/><rect x="283" y="264.2" height="32.1"/><rect x="284" y="263.6" height="32.5"/><rect x="285" y="263.5" height="32.5"/><rect x="286" y="264" height="32.2"/><rect x="287" y="264.6" height="32"/><rect x="288" y="264.5" height="32"/><rect x="289" y="264.4" height="32.1"/><rect x="290" y="264.2" height="32.2"/><rect x="291" y="263.9" height="32.3"/><rect x="292" y="263.6" height="32.4"/><rect x="293" y="263.4" height="32.5"/><rect x="294" y="263.2" height="32.6"/><rect x="295" y="263" height="32.8"/><rect x="296" y="262.7" height="32.9"/><rect x="297" y="262.8" height="32.8"/><rect x="298" y="262.8" height="32.8"/><rect x="299" y="262.8" height="32.8"/><rect x="300" y="262.7" height="32.9"/><rect x="301" y="263.2" height="32.6"/><rect x="302" y="264" height="32.3"/><rect x="303" y="263.4" height="32.5"/><rect x="304" y="262.9" height="32.8"/><rect x="305" y="262.8" height="32.8"/><rect x="306" y="263.2" height="32.6"/><rect x="307" y="263.6" height="32.4"/><rect x="308" y="263.3" height="32.6"/><rect x="309" y="263" height="32.8"/><rect x="310" y="263" height="32.7"/><rect x="311" y="263.5" height="32.5"/><rect x="312" y="264" height="32.2"/><rect x="313" y="263.9" height="32.3"/><rect x="314" y="263.7" height="32.4"/><rect x="315" y="263.5" height="32.5"/><rect x="316" y="263.3" height="32.6"/><rect x="317" y="263.1" height="32.7"/><rect x="318" y="263" height="32.7"/><rect x="319" y="263" height="32.8"/><rect x="320" y="263.2" height="32.7"/><rect x="321" y="263.6" height="32.4"/><rect x="322" y="264.1" height="32.2"/><rect x="323" y="263.6" height="32.5"/><rect x="324" y="263.1" height="32.7"/><rect x="325" y="262.9" height="32.8"/><rect x="326" y="263.1" height="32.7"/><rect x="327" y="263.3" height="32.6"/><rect x="328" y="263.5" height="32.5"/><rect x="329" y="263.8" height="32.3"/><rect x="330" y="264.1" height="32.2"/><rect x="331" y="264.4" height="32.1"/><rect x="332" y="264.6" height="31.9"/><rect x="333" y="264.5" height="32"/><rect x="334" y="264.3" height="32.1"/></g>
<g class="c" fill="url(#g2)"><rect x="196" y="261.8" height="3.3"/><rect x="197" y="256.4" height="8.7"/><rect x="198" y="251.6" height="13.7"/><rect x="199" y="246.8" height="18.8"/><rect x="200" y="241.6" height="24.6"/><rect x="201" y="238.7" height="28.1"/><rect x="202" y="238.6" height="28.9"/><rect x="203" y="238.2" height="29.4"/><rect x="204" y="237.8" height="29.9"/><rect x="205" y="237.8" height="30.2"/><rect x="206" y="238.3" height="30.4"/><rect x="207" y="238.8" height="30.6"/><rect x="208" y="238.2" height="31.1"/><rect x="209" y="237.7" height="31.5"/><rect x="210" y="237.5" height="32"/><rect x="211" y="237.6" height="32.7"/><rect x="212" y="237.8" height="33.5"/><rect x="213" y="238.2" height="33.1"/><rect x="214" y="238.5" height="32.7"/><rect x="215" y="238.6" height="32.6"/><rect x="216" y="238.5" height="32.7"/><rect x="217" y="238.3" height="32.7"/><rect x="218" y="237.9" height="33.5"/><rect x="219" y="237.4" height="34.3"/><rect x="220" y="237.6" height="34.4"/><rect x="221" y="238.3" height="33.8"/><rect x="222" y="239" height="33.2"/><rect x="223" y="238.4" height="33.2"/><rect x="224" y="237.7" height="33.3"/><rect x="225" y="237.4" height="33.3"/><rect x="226" y="237" height="34"/><rect x="227" y="236" height="35.1"/><rect x="228" y="234.3" height="37.2"/><rect x="229" y="231.3" height="40.4"/><rect x="230" y="236" height="35.8"/><rect x="231" y="238" height="33.5"/><rect x="232" y="237.7" height="33.6"/><rect x="233" y="237.6" height="33.6"/><rect x="234" y="237.6" height="33.5"/><rect x="235" y="237.5" height="33.5"/><rect x="236" y="237.3" height="33.5"/><rect x="237" y="237.1" height="33.6"/><rect x="238" y="237.2" height="33.6"/><rect x="239" y="237.2" height="33.6"/><rect x="240" y="237.4" height="33.6"/><rect x="241" y="237.8" height="33.5"/><rect x="242" y="238.2" height="33.5"/><rect x="243" y="237.9" height="34"/><rect x="244" y="237.6" height="34.5"/><rect x="245" y="237.6" height="34.6"/><rect x="246" y="237.9" height="34.4"/><rect x="247" y="238.2" height="34.1"/><rect x="248" y="238" height="34"/><rect x="249" y="237.8" height="33.8"/><rect x="250" y="237.8" height="33.6"/><rect x="251" y="237.8" height="33.2"/><rect x="252" y="237.9" height="32.8"/><rect x="253" y="238.3" height="32.6"/><rect x="254" y="238.7" height="32.4"/><rect x="255" y="238.7" height="32.6"/><rect x="256" y="238.3" height="33.3"/><rect x="257" y="238" height="34"/><rect x="258" y="238" height="33.9"/><rect x="259" y="238.8" height="33.2"/><rect x="260" y="240.3" height="31.7"/><rect x="261" y="241.8" height="30"/><rect x="262" y="243.5" height="28.1"/><rect x="263" y="244.4" height="26.6"/><rect x="264" y="245.4" height="25.1"/><rect x="265" y="246.6" height="23.5"/><rect x="266" y="248.1" height="21.9"/><rect x="267" y="249.6" height="20.3"/><rect x="268" y="251.7" height="17.9"/><rect x="269" y="253.8" height="15.5"/><rect x="270" y="255.5" height="13.4"/><rect x="271" y="257" height="11.8"/><rect x="272" y="258.4" height="10"/><rect x="273" y="259.4" height="8.1"/><rect x="274" y="265.3" height="1.4"/><rect x="278" y="262.3" height="3"/><rect x="279" y="251.8" height="12.9"/><rect x="280" y="257.1" height="6.7"/><rect x="281" y="262.2" height="0.5"/><rect x="297" y="262.3" height="0.5"/><rect x="298" y="262.2" height="0.6"/><rect x="299" y="262.1" height="0.7"/><rect x="300" y="262.5" height="0.2"/></g>
<rect x="29.0" y="362.0" width="14" height="4" rx="2" fill="#56A64B"/>
<text x="51.7" y="367.7" font-size="12" textLength="232.6" lengthAdjust="spacing">distributor-zone-a-56fd759c86-2bql8</text>
<rect x="29.0" y="385.3" width="14" height="4" rx="2" fill="#E0B400"/>
<text x="51.7" y="391.0" font-size="12" textLength="238.8" lengthAdjust="spacing">distributor-zone-a-56fd759c86-48qpb</text>
<rect x="29.0" y="408.9" width="14" height="4" rx="2" fill="#5794F2"/>
<text x="51.7" y="414.6" font-size="12" textLength="233.7" lengthAdjust="spacing">distributor-zone-a-56fd759c86-5jxxw</text>
<rect x="360.5" y="174.5" width="335" height="257" rx="2" fill="#fff" stroke="#e1e3e5"/>
<text x="369.6" y="196.1" font-size="15" font-weight="500" textLength="142.5" lengthAdjust="spacing" stroke="#24292e" stroke-width="0.3">Transmit bandwidth</text>
<path d="M435,253.5 H679 M435,290.5 H679 M435,328.5 H679 M464.4,223.5 V333.5 M525.4,223.5 V333.5 M586.4,223.5 V333.5 M647.4,223.5 V333.5" stroke="#e4e5e6" stroke-width="1" fill="none"/>
<text x="429.0" y="257.9" font-size="12" text-anchor="end" textLength="36.2" lengthAdjust="spacing">1 GB/s</text>
<text x="429.0" y="294.9" font-size="12" text-anchor="end" textLength="56.0" lengthAdjust="spacing">500 MB/s</text>
<text x="429.0" y="332.9" font-size="12" text-anchor="end" textLength="29.5" lengthAdjust="spacing">0 B/s</text>
<text x="464.4" y="348.0" font-size="12" text-anchor="middle">15:30</text>
<text x="525.4" y="348.0" font-size="12" text-anchor="middle">15:45</text>
<text x="586.4" y="348.0" font-size="12" text-anchor="middle">16:00</text>
<text x="647.4" y="348.0" font-size="12" text-anchor="middle">16:15</text>
<g class="c" fill="url(#g3)"><rect x="435" y="312.4" height="16.1"/><rect x="436" y="312.4" height="16.1"/><rect x="437" y="312.5" height="16"/><rect x="438" y="312.6" height="15.9"/><rect x="439" y="312.7" height="15.8"/><rect x="440" y="312.5" height="16"/><rect x="441" y="312" height="16.5"/><rect x="442" y="311.5" height="17"/><rect x="443" y="311.6" height="16.9"/><rect x="444" y="311.8" height="16.7"/><rect x="445" y="312" height="16.5"/><rect x="446" y="312.3" height="16.2"/><rect x="447" y="312.6" height="15.9"/><rect x="448" y="312.5" height="16"/><rect x="449" y="312.5" height="16"/><rect x="450" y="312.3" height="16.2"/><rect x="451" y="312.1" height="16.4"/><rect x="452" y="311.8" height="16.7"/><rect x="453" y="312" height="16.5"/><rect x="454" y="312.2" height="16.3"/><rect x="455" y="312.1" height="16.4"/><rect x="456" y="311.8" height="16.7"/><rect x="457" y="311.5" height="17"/><rect x="458" y="311.5" height="17"/><rect x="459" y="311.5" height="17"/><rect x="460" y="311.4" height="17.1"/><rect x="461" y="311.4" height="17.1"/><rect x="462" y="311.3" height="17.2"/><rect x="463" y="311.5" height="17"/><rect x="464" y="311.7" height="16.8"/><rect x="465" y="311.8" height="16.7"/><rect x="466" y="311.7" height="16.8"/><rect x="467" y="311.6" height="16.9"/><rect x="468" y="311.8" height="16.7"/><rect x="469" y="311.9" height="16.6"/><rect x="470" y="312.2" height="16.3"/><rect x="471" y="312.5" height="16"/><rect x="472" y="312.8" height="15.7"/><rect x="473" y="312.2" height="16.3"/><rect x="474" y="311.7" height="16.8"/><rect x="475" y="311.6" height="16.9"/><rect x="476" y="311.8" height="16.7"/><rect x="477" y="312.1" height="16.4"/><rect x="478" y="312.3" height="16.2"/><rect x="479" y="312.5" height="16"/><rect x="480" y="312.5" height="16"/><rect x="481" y="312.3" height="16.2"/><rect x="482" y="312.2" height="16.3"/><rect x="483" y="312.1" height="16.4"/><rect x="484" y="312.1" height="16.4"/><rect x="485" y="312.1" height="16.4"/><rect x="486" y="312.3" height="16.2"/><rect x="487" y="312.4" height="16.1"/><rect x="488" y="312" height="16.5"/><rect x="489" y="311.5" height="17"/><rect x="490" y="311.5" height="17"/><rect x="491" y="312.1" height="16.4"/><rect x="492" y="312.7" height="15.8"/><rect x="493" y="312.5" height="16"/><rect x="494" y="312.4" height="16.1"/><rect x="495" y="312.3" height="16.2"/><rect x="496" y="312.4" height="16.1"/><rect x="497" y="312.5" height="16"/><rect x="498" y="312.5" height="16"/><rect x="499" y="312.5" height="16"/><rect x="500" y="312.3" height="16.2"/><rect x="501" y="311.8" height="16.7"/><rect x="502" y="311.4" height="17.1"/><rect x="503" y="311.3" height="17.2"/><rect x="504" y="311.3" height="17.2"/><rect x="505" y="311.3" height="17.2"/><rect x="506" y="311.4" height="17.1"/><rect x="507" y="311.5" height="17"/><rect x="508" y="311.7" height="16.8"/><rect x="509" y="311.9" height="16.6"/><rect x="510" y="312.1" height="16.4"/><rect x="511" y="312.4" height="16.1"/><rect x="512" y="312.7" height="15.8"/><rect x="513" y="312.7" height="15.8"/><rect x="514" y="312.7" height="15.8"/><rect x="515" y="312.5" height="16"/><rect x="516" y="312.2" height="16.3"/><rect x="517" y="311.9" height="16.6"/><rect x="518" y="312" height="16.5"/><rect x="519" y="312.1" height="16.4"/><rect x="520" y="312.2" height="16.3"/><rect x="521" y="312.1" height="16.4"/><rect x="522" y="312" height="16.5"/><rect x="523" y="311.6" height="16.9"/><rect x="524" y="311.2" height="17.3"/><rect x="525" y="311.1" height="17.4"/><rect x="526" y="311.4" height="17.1"/><rect x="527" y="311.6" height="16.9"/><rect x="528" y="311.5" height="17"/><rect x="529" y="311.3" height="17.2"/><rect x="530" y="311.1" height="17.4"/><rect x="531" y="310.8" height="17.7"/><rect x="532" y="310.5" height="18"/><rect x="533" y="310.4" height="18.1"/><rect x="534" y="310.4" height="18.1"/><rect x="535" y="310.3" height="18.2"/><rect x="536" y="310.1" height="18.4"/><rect x="537" y="309.9" height="18.6"/><rect x="538" y="309.6" height="18.9"/><rect x="539" y="309.4" height="19.1"/><rect x="540" y="309.1" height="19.4"/><rect x="541" y="308.9" height="19.6"/><rect x="542" y="308.6" height="19.9"/><rect x="543" y="308.6" height="19.9"/><rect x="544" y="308.5" height="20"/><rect x="545" y="308.5" height="20"/><rect x="546" y="308.4" height="20.1"/><rect x="547" y="308.3" height="20.2"/><rect x="548" y="308.2" height="20.3"/><rect x="549" y="308" height="20.5"/><rect x="550" y="308.2" height="20.3"/><rect x="551" y="308.7" height="19.8"/><rect x="552" y="309.3" height="19.2"/><rect x="553" y="308.8" height="19.7"/><rect x="554" y="308.4" height="20.1"/><rect x="555" y="308.1" height="20.4"/><rect x="556" y="307.9" height="20.6"/><rect x="557" y="307.7" height="20.8"/><rect x="558" y="307.8" height="20.7"/><rect x="559" y="308" height="20.5"/><rect x="560" y="308" height="20.5"/><rect x="561" y="307.8" height="20.7"/><rect x="562" y="307.6" height="20.9"/><rect x="563" y="307.8" height="20.7"/><rect x="564" y="308" height="20.5"/><rect x="565" y="308" height="20.5"/><rect x="566" y="307.9" height="20.6"/><rect x="567" y="307.8" height="20.7"/><rect x="568" y="307.7" height="20.8"/><rect x="569" y="307.5" height="21"/><rect x="570" y="307.6" height="20.9"/><rect x="571" y="307.8" height="20.7"/><rect x="572" y="308.1" height="20.4"/><rect x="573" y="308.1" height="20.4"/><rect x="574" y="308.1" height="20.4"/><rect x="575" y="308.1" height="20.4"/><rect x="576" y="308.1" height="20.4"/><rect x="577" y="308.1" height="20.4"/><rect x="578" y="308.5" height="20"/><rect x="579" y="308.8" height="19.7"/><rect x="580" y="308.9" height="19.6"/><rect x="581" y="308.6" height="19.9"/><rect x="582" y="308.3" height="20.2"/><rect x="583" y="308.5" height="20"/><rect x="584" y="308.7" height="19.8"/><rect x="585" y="308.9" height="19.6"/><rect x="586" y="309.2" height="19.3"/><rect x="587" y="309.5" height="19"/><rect x="588" y="309.6" height="18.9"/><rect x="589" y="309.7" height="18.8"/><rect x="590" y="309.6" height="18.9"/><rect x="591" y="309.2" height="19.3"/><rect x="592" y="308.9" height="19.6"/><rect x="593" y="308.7" height="19.8"/><rect x="594" y="308.5" height="20"/><rect x="595" y="308.8" height="19.7"/><rect x="596" y="309.4" height="19.1"/><rect x="597" y="310" height="18.5"/><rect x="598" y="309.7" height="18.8"/><rect x="599" y="309.5" height="19"/><rect x="600" y="309.3" height="19.2"/><rect x="601" y="309.1" height="19.4"/><rect x="602" y="309" height="19.5"/><rect x="603" y="309" height="19.5"/><rect x="604" y="309" height="19.5"/><rect x="605" y="309" height="19.5"/><rect x="606" y="309.1" height="19.4"/><rect x="607" y="309.2" height="19.3"/><rect x="608" y="309.3" height="19.2"/><rect x="609" y="309.4" height="19.1"/><rect x="610" y="309.4" height="19.1"/><rect x="611" y="309.3" height="19.2"/><rect x="612" y="309.2" height="19.3"/><rect x="613" y="309.2" height="19.3"/><rect x="614" y="309.2" height="19.3"/><rect x="615" y="309.5" height="19"/><rect x="616" y="310.1" height="18.4"/><rect x="617" y="310.8" height="17.7"/><rect x="618" y="312" height="16.5"/><rect x="619" y="314.6" height="13.9"/><rect x="620" y="317" height="11.5"/><rect x="621" y="316.7" height="11.8"/><rect x="622" y="313.9" height="14.6"/><rect x="623" y="311.8" height="16.7"/><rect x="624" y="310.9" height="17.6"/><rect x="625" y="311.1" height="17.4"/><rect x="626" y="311.3" height="17.2"/><rect x="627" y="311.5" height="17"/><rect x="628" y="311.4" height="17.1"/><rect x="629" y="311.2" height="17.3"/><rect x="630" y="311" height="17.5"/><rect x="631" y="310.7" height="17.8"/><rect x="632" y="310.5" height="18"/><rect x="633" y="310.7" height="17.8"/><rect x="634" y="310.8" height="17.7"/><rect x="635" y="311" height="17.5"/><rect x="636" y="311" height="17.5"/><rect x="637" y="311.1" height="17.4"/><rect x="638" y="311.4" height="17.1"/><rect x="639" y="311.8" height="16.7"/><rect x="640" y="311.9" height="16.6"/><rect x="641" y="311.7" height="16.8"/><rect x="642" y="311.5" height="17"/><rect x="643" y="311.4" height="17.1"/><rect x="644" y="311.3" height="17.2"/><rect x="645" y="311.4" height="17.1"/><rect x="646" y="311.5" height="17"/><rect x="647" y="311.6" height="16.9"/><rect x="648" y="311.3" height="17.2"/><rect x="649" y="310.9" height="17.6"/><rect x="650" y="311" height="17.5"/><rect x="651" y="311.4" height="17.1"/><rect x="652" y="311.8" height="16.7"/><rect x="653" y="311.9" height="16.6"/><rect x="654" y="312" height="16.5"/><rect x="655" y="312" height="16.5"/><rect x="656" y="312" height="16.5"/><rect x="657" y="311.9" height="16.6"/><rect x="658" y="311.7" height="16.8"/><rect x="659" y="311.5" height="17"/><rect x="660" y="311.4" height="17.1"/><rect x="661" y="311.4" height="17.1"/><rect x="662" y="311.4" height="17.1"/><rect x="663" y="311.2" height="17.3"/><rect x="664" y="311" height="17.5"/><rect x="665" y="311" height="17.5"/><rect x="666" y="311.1" height="17.4"/><rect x="667" y="311.1" height="17.4"/><rect x="668" y="311.2" height="17.3"/><rect x="669" y="311.3" height="17.2"/><rect x="670" y="311.4" height="17.1"/><rect x="671" y="311.6" height="16.9"/><rect x="672" y="311.8" height="16.7"/><rect x="673" y="312" height="16.5"/><rect x="674" y="312.3" height="16.2"/><rect x="675" y="312.2" height="16.3"/><rect x="676" y="311.9" height="16.6"/><rect x="677" y="311.5" height="17"/><rect x="678" y="311.7" height="16.8"/></g>
<g class="c" fill="url(#g4)"><rect x="435" y="262.5" height="49.8"/><rect x="436" y="262.8" height="49.7"/><rect x="437" y="256.9" height="55.6"/><rect x="438" y="256.1" height="56.5"/><rect x="439" y="264.2" height="48.5"/><rect x="440" y="264.9" height="47.6"/><rect x="441" y="259.8" height="52.2"/><rect x="442" y="255.5" height="56"/><rect x="443" y="259.4" height="52.3"/><rect x="444" y="263.2" height="48.6"/><rect x="445" y="261.7" height="50.3"/><rect x="446" y="257.1" height="55.2"/><rect x="447" y="253.7" height="58.9"/><rect x="448" y="260.3" height="52.2"/><rect x="449" y="264" height="48.4"/><rect x="450" y="261.1" height="51.2"/><rect x="451" y="258.5" height="53.5"/><rect x="452" y="263.7" height="48.2"/><rect x="453" y="268.6" height="43.4"/><rect x="454" y="263.4" height="48.7"/><rect x="455" y="258.3" height="53.9"/><rect x="456" y="260.7" height="51.1"/><rect x="457" y="265.6" height="45.9"/><rect x="458" y="264.1" height="47.4"/><rect x="459" y="259.8" height="51.7"/><rect x="460" y="258.5" height="52.9"/><rect x="461" y="263.1" height="48.3"/><rect x="462" y="267.6" height="43.7"/><rect x="463" y="262.2" height="49.3"/><rect x="464" y="256.6" height="55.1"/><rect x="465" y="259.9" height="51.9"/><rect x="466" y="263.2" height="48.5"/><rect x="467" y="262.9" height="48.7"/><rect x="468" y="259.7" height="52.1"/><rect x="469" y="260" height="51.9"/><rect x="470" y="264.3" height="47.8"/><rect x="471" y="266.8" height="45.7"/><rect x="472" y="262.6" height="50.1"/><rect x="473" y="259" height="53.2"/><rect x="474" y="262.4" height="49.3"/><rect x="475" y="265.7" height="45.8"/><rect x="476" y="262.2" height="49.6"/><rect x="477" y="257.2" height="54.8"/><rect x="478" y="261.1" height="51.2"/><rect x="479" y="265" height="47.5"/><rect x="480" y="262.1" height="50.4"/><rect x="481" y="255.9" height="56.4"/><rect x="482" y="257.8" height="54.4"/><rect x="483" y="264.3" height="47.8"/><rect x="484" y="260.1" height="52"/><rect x="485" y="254.1" height="58"/><rect x="486" y="259.4" height="52.8"/><rect x="487" y="266.8" height="45.7"/><rect x="488" y="263" height="49"/><rect x="489" y="255.7" height="55.8"/><rect x="490" y="259.2" height="52.3"/><rect x="491" y="264.1" height="48"/><rect x="492" y="262.1" height="50.6"/><rect x="493" y="257.6" height="54.9"/><rect x="494" y="262.1" height="50.3"/><rect x="495" y="268.7" height="43.6"/><rect x="496" y="263.8" height="48.7"/><rect x="497" y="258.8" height="53.7"/><rect x="498" y="261.7" height="50.8"/><rect x="499" y="265.4" height="47.1"/><rect x="500" y="261.3" height="51"/><rect x="501" y="256.2" height="55.7"/><rect x="502" y="257.5" height="53.9"/><rect x="503" y="264.3" height="47.1"/><rect x="504" y="265.1" height="46.2"/><rect x="505" y="260.8" height="50.6"/><rect x="506" y="256.7" height="54.7"/><rect x="507" y="262.8" height="48.7"/><rect x="508" y="267" height="44.7"/><rect x="509" y="260.7" height="51.2"/><rect x="510" y="255.8" height="56.3"/><rect x="511" y="261.6" height="50.9"/><rect x="512" y="265.7" height="47"/><rect x="513" y="263.1" height="49.6"/><rect x="514" y="260.4" height="52.3"/><rect x="515" y="262.5" height="50"/><rect x="516" y="266.4" height="45.7"/><rect x="517" y="265.3" height="46.6"/><rect x="518" y="261.3" height="50.7"/><rect x="519" y="259.5" height="52.6"/><rect x="520" y="263.9" height="48.2"/><rect x="521" y="268.3" height="43.8"/><rect x="522" y="261.5" height="50.5"/><rect x="523" y="254.6" height="56.9"/><rect x="524" y="260.7" height="50.5"/><rect x="525" y="266.7" height="44.4"/><rect x="526" y="265" height="46.3"/><rect x="527" y="257.3" height="54.3"/><rect x="528" y="258.7" height="52.8"/><rect x="529" y="265.5" height="45.8"/><rect x="530" y="265" height="46"/><rect x="531" y="259.3" height="51.5"/><rect x="532" y="254.1" height="56.4"/><rect x="533" y="260.5" height="49.9"/><rect x="534" y="266.9" height="43.5"/><rect x="535" y="265" height="45.2"/><rect x="536" y="257.7" height="52.4"/><rect x="537" y="259.8" height="50.1"/><rect x="538" y="265.7" height="43.9"/><rect x="539" y="267.9" height="41.5"/><rect x="540" y="262.2" height="46.9"/><rect x="541" y="256.7" height="52.1"/><rect x="542" y="263.7" height="44.9"/><rect x="543" y="268.5" height="40.1"/><rect x="544" y="262.3" height="46.2"/><rect x="545" y="256.2" height="52.3"/><rect x="546" y="260.5" height="47.9"/><rect x="547" y="266.1" height="42.2"/><rect x="548" y="261.5" height="46.7"/><rect x="549" y="256.4" height="51.7"/><rect x="550" y="256.5" height="51.7"/><rect x="551" y="262.3" height="46.4"/><rect x="552" y="268.1" height="41.1"/><rect x="553" y="264" height="44.8"/><rect x="554" y="259.4" height="49"/><rect x="555" y="260.4" height="47.6"/><rect x="556" y="266.8" height="41"/><rect x="557" y="265.8" height="41.9"/><rect x="558" y="260.3" height="47.5"/><rect x="559" y="256.2" height="51.7"/><rect x="560" y="260.2" height="47.7"/><rect x="561" y="264" height="43.8"/><rect x="562" y="260.5" height="47.1"/><rect x="563" y="255.7" height="52.1"/><rect x="564" y="259.7" height="48.3"/><rect x="565" y="264.1" height="44"/><rect x="566" y="261.1" height="46.9"/><rect x="567" y="254.6" height="53.2"/><rect x="568" y="251.2" height="56.4"/><rect x="569" y="255.7" height="51.9"/><rect x="570" y="260.1" height="47.5"/><rect x="571" y="258.2" height="49.7"/><rect x="572" y="254.5" height="53.6"/><rect x="573" y="251.9" height="56.2"/><rect x="574" y="253.3" height="54.8"/><rect x="575" y="254.7" height="53.4"/><rect x="576" y="250.3" height="57.9"/><rect x="577" y="244.6" height="63.6"/><rect x="578" y="243.9" height="64.6"/><rect x="579" y="248.5" height="60.3"/><rect x="580" y="253.2" height="55.6"/><rect x="581" y="248.1" height="60.5"/><rect x="582" y="243" height="65.3"/><rect x="583" y="242.8" height="65.8"/><rect x="584" y="250" height="58.7"/><rect x="585" y="251.4" height="57.6"/><rect x="586" y="247.2" height="62"/><rect x="587" y="248.5" height="61"/><rect x="588" y="252.2" height="57.4"/><rect x="589" y="253.1" height="56.6"/><rect x="590" y="247.3" height="62.2"/><rect x="591" y="242.9" height="66.4"/><rect x="592" y="248.3" height="60.6"/><rect x="593" y="253.8" height="54.9"/><rect x="594" y="253.1" height="55.5"/><rect x="595" y="247.6" height="61.2"/><rect x="596" y="242.1" height="67.2"/><rect x="597" y="246.8" height="63.2"/><rect x="598" y="252" height="57.7"/><rect x="599" y="249.9" height="59.6"/><rect x="600" y="243.6" height="65.7"/><rect x="601" y="244.3" height="64.8"/><rect x="602" y="249.9" height="59.1"/><rect x="603" y="255.5" height="53.5"/><rect x="604" y="250.8" height="58.1"/><rect x="605" y="245.9" height="63.1"/><rect x="606" y="252.6" height="56.5"/><rect x="607" y="259.2" height="50"/><rect x="608" y="254.4" height="54.9"/><rect x="609" y="250.2" height="59.1"/><rect x="610" y="255" height="54.3"/><rect x="611" y="259.8" height="49.5"/><rect x="612" y="257" height="52.2"/><rect x="613" y="253.6" height="55.6"/><rect x="614" y="257.1" height="52.1"/><rect x="615" y="262.1" height="47.4"/><rect x="616" y="265.3" height="44.8"/><rect x="617" y="260.8" height="50"/><rect x="618" y="258.9" height="53.1"/><rect x="619" y="270.2" height="44.4"/><rect x="620" y="276.6" height="40.3"/><rect x="621" y="268" height="48.7"/><rect x="622" y="259.3" height="54.5"/><rect x="623" y="261.1" height="50.7"/><rect x="624" y="266.7" height="44.1"/><rect x="625" y="264.5" height="46.6"/><rect x="626" y="259.3" height="52"/><rect x="627" y="262.5" height="49.1"/><rect x="628" y="268" height="43.3"/><rect x="629" y="265.6" height="45.6"/><rect x="630" y="260.6" height="50.4"/><rect x="631" y="259.9" height="50.8"/><rect x="632" y="262.7" height="47.8"/><rect x="633" y="263.1" height="47.5"/><rect x="634" y="260.8" height="50"/><rect x="635" y="258.5" height="52.5"/><rect x="636" y="261.9" height="49.1"/><rect x="637" y="266" height="45"/><rect x="638" y="264" height="47.4"/><rect x="639" y="259.9" height="51.8"/><rect x="640" y="260.6" height="51.2"/><rect x="641" y="263.6" height="48"/><rect x="642" y="262.9" height="48.5"/><rect x="643" y="258.2" height="53.2"/><rect x="644" y="258.5" height="52.9"/><rect x="645" y="263.8" height="47.6"/><rect x="646" y="264.7" height="46.8"/><rect x="647" y="261.3" height="50.3"/><rect x="648" y="257.9" height="53.4"/><rect x="649" y="262.2" height="48.7"/><rect x="650" y="266.9" height="44"/><rect x="651" y="263.4" height="48"/><rect x="652" y="257" height="54.8"/><rect x="653" y="254.7" height="57.2"/><rect x="654" y="259.7" height="52.3"/><rect x="655" y="264.7" height="47.3"/><rect x="656" y="262.1" height="49.8"/><rect x="657" y="257.4" height="54.5"/><rect x="658" y="256.2" height="55.5"/><rect x="659" y="262.6" height="49"/><rect x="660" y="266.3" height="45.1"/><rect x="661" y="262.5" height="48.9"/><rect x="662" y="258.7" height="52.6"/><rect x="663" y="260.3" height="50.9"/><rect x="664" y="264.4" height="46.7"/><rect x="665" y="262.6" height="48.4"/><rect x="666" y="258.5" height="52.5"/><rect x="667" y="255.2" height="55.9"/><rect x="668" y="260.2" height="51"/><rect x="669" y="265.2" height="46"/><rect x="670" y="264.7" height="46.7"/><rect x="671" y="259" height="52.6"/><rect x="672" y="258.5" height="53.3"/><rect x="673" y="263.4" height="48.6"/><rect x="674" y="267.1" height="45.2"/><rect x="675" y="259.7" height="52.5"/><rect x="676" y="256.3" height="55.5"/><rect x="677" y="260.4" height="51.1"/><rect x="678" y="264.5" height="47.2"/></g>
<rect x="373.0" y="362.0" width="14" height="4" rx="2" fill="#56A64B"/>
<text x="395.7" y="367.7" font-size="12" textLength="232.6" lengthAdjust="spacing">distributor-zone-a-56fd759c86-2bql8</text>
<rect x="373.0" y="385.3" width="14" height="4" rx="2" fill="#E0B400"/>
<text x="395.7" y="391.0" font-size="12" textLength="238.8" lengthAdjust="spacing">distributor-zone-a-56fd759c86-48qpb</text>
<rect x="373.0" y="408.9" width="14" height="4" rx="2" fill="#5794F2"/>
<text x="395.7" y="414.6" font-size="12" textLength="233.7" lengthAdjust="spacing">distributor-zone-a-56fd759c86-5jxxw</text>
<rect x="704.5" y="174.5" width="335" height="257" rx="2" fill="#fff" stroke="#e1e3e5"/>
<text x="713.6" y="196.1" font-size="15" font-weight="500" textLength="190.0" lengthAdjust="spacing" stroke="#24292e" stroke-width="0.3">Inflight requests (per pod)</text>
<path d="M743.5,267.5 H1023.5 M743.5,322.5 H1023.5 M743.5,377.5 H1023.5 M777.2,223.5 V382.5 M847.2,223.5 V382.5 M917.2,223.5 V382.5 M987.2,223.5 V382.5" stroke="#e4e5e6" stroke-width="1" fill="none"/>
<text x="737.5" y="271.9" font-size="12" text-anchor="end">100</text>
<text x="737.5" y="326.9" font-size="12" text-anchor="end">50</text>
<text x="737.5" y="381.9" font-size="12" text-anchor="end">0</text>
<text x="777.2" y="397.0" font-size="12" text-anchor="middle">15:30</text>
<text x="847.2" y="397.0" font-size="12" text-anchor="middle">15:45</text>
<text x="917.2" y="397.0" font-size="12" text-anchor="middle">16:00</text>
<text x="987.2" y="397.0" font-size="12" text-anchor="middle">16:15</text>
<path d="M743.5,339.2 L744.9,321.3 L746.3,335.2 L747.7,329.7 L749.1,341.2 L750.5,335.9 L751.9,350.1 L753.3,327.8 L754.7,350.7 L756.1,308.2 L757.5,352 L758.9,335.5 L760.3,352.7 L761.7,322.6 L763.1,350.8 L764.5,322.5 L765.9,334.3 L767.3,326 L768.7,334.8 L770.1,307.1 L771.5,348.9 L772.9,335 L774.3,354.1 L775.7,327.3 L777.1,340.6 L778.5,332.4 L779.9,344.9 L781.3,329.4 L782.7,354.2 L784.1,337.5 L785.5,336.9 L786.9,324 L788.3,308.2 L789.7,308.2 L791.1,334.5 L792.5,324.6 L793.9,334.8 L795.3,331.7 L796.7,338.4 L798.1,324.7 L799.5,336.6 L800.9,321.3 L802.3,348 L803.7,321.7 L805.1,335.2 L806.5,332.4 L807.9,351.6 L809.3,335.3 L810.7,333.6 L812.1,337 L813.5,343.8 L814.9,333.7 L816.3,337.3 L817.7,330.5 L819.1,335.3 L820.5,329.2 L821.9,352.6 L823.3,321.2 L824.7,338.2 L826.1,330.3 L827.5,336.9 L828.9,329.9 L830.3,336.8 L831.7,329.9 L833.1,339.5 L834.5,332.8 L835.9,352.3 L837.3,320.5 L838.7,341.7 L840.1,331.9 L841.5,349.5 L842.9,322.6 L844.3,338.2 L845.7,325.7 L847.1,338.8 L848.5,325.5 L849.9,344.8 L851.3,325.7 L852.7,334.7 L854.1,327.7 L855.5,343.5 L856.9,326.1 L858.3,337.5 L859.7,323.9 L861.1,341.3 L862.5,323.3 L863.9,337 L865.3,325.8 L866.7,334.5 L868.1,328.6 L869.5,337.1 L870.9,329.5 L872.3,339.7 L873.7,334.9 L875.1,342.7 L876.5,330.5 L877.9,338.5 L879.3,325.2 L880.7,352 L882.1,326.5 L883.5,340.4 L884.9,337.2 L886.3,350.5 L887.7,335.5 L889.1,351.5 L890.5,309.3 L891.9,347.1 L893.3,327.5 L894.7,335.6 L896.1,330.8 L897.5,346.5 L898.9,323.3 L900.3,354.7 L901.7,336.2 L903.1,348 L904.5,321 L905.9,346.3 L907.3,326.6 L908.7,352.4 L910.1,313.7 L911.5,334.2 L912.9,331.7 L914.3,355.5 L915.7,327.9 L917.1,352.4 L918.5,248.8 L919.9,346 L921.3,332.8 L922.7,347.1 L924.1,321.8 L925.5,349.8 L926.9,329.2 L928.3,348.5 L929.7,329.2 L931.1,345 L932.5,238.9 L933.9,349.1 L935.3,323.3 L936.7,343.8 L938.1,321.4 L939.5,350.1 L940.9,335.2 L942.3,297.2 L943.7,329.5 L945.1,342.2 L946.5,335.8 L947.9,348.9 L949.3,332 L950.7,343.8 L952.1,331.5 L953.5,342.5 L954.9,333.5 L956.3,335.3 L957.7,328.3 L959.1,338.4 L960.5,327.8 L961.9,341.6 L963.3,321.9 L964.7,346.9 L966.1,334.4 L967.5,337.2 L968.9,323.2 L970.3,346 L971.7,324.2 L973.1,352.4 L974.5,328.2 L975.9,348.2 L977.3,327.6 L978.7,354 L980.1,323.5 L981.5,340.9 L982.9,325.2 L984.3,333.5 L985.7,337 L987.1,350.7 L988.5,265.3 L989.9,352.5 L991.3,321.7 L992.7,342.1 L994.1,335.1 L995.5,354.5 L996.9,331.2 L998.3,354.2 L999.7,324.8 L1001.1,352.5 L1002.5,247.7 L1003.9,344.7 L1005.3,331.3 L1006.7,340.2 L1008.1,289.5 L1009.5,335.5 L1010.9,262 L1012.3,343.4 L1013.7,324.7 L1015.1,352.6 L1016.5,331.4 L1017.9,303.8 L1019.3,326.4 L1020.7,340.8 L1022.1,335.7 L1023.5,350.3 L1023.5,377.5 L743.5,377.5Z" fill="#E0B400" fill-opacity="0.017"/>
<path d="M743.5,339.2 L744.9,321.3 L746.3,335.2 L747.7,329.7 L749.1,341.2 L750.5,335.9 L751.9,350.1 L753.3,327.8 L754.7,350.7 L756.1,308.2 L757.5,352 L758.9,335.5 L760.3,352.7 L761.7,322.6 L763.1,350.8 L764.5,322.5 L765.9,334.3 L767.3,326 L768.7,334.8 L770.1,307.1 L771.5,348.9 L772.9,335 L774.3,354.1 L775.7,327.3 L777.1,340.6 L778.5,332.4 L779.9,344.9 L781.3,329.4 L782.7,354.2 L784.1,337.5 L785.5,336.9 L786.9,324 L788.3,308.2 L789.7,308.2 L791.1,334.5 L792.5,324.6 L793.9,334.8 L795.3,331.7 L796.7,338.4 L798.1,324.7 L799.5,336.6 L800.9,321.3 L802.3,348 L803.7,321.7 L805.1,335.2 L806.5,332.4 L807.9,351.6 L809.3,335.3 L810.7,333.6 L812.1,337 L813.5,343.8 L814.9,333.7 L816.3,337.3 L817.7,330.5 L819.1,335.3 L820.5,329.2 L821.9,352.6 L823.3,321.2 L824.7,338.2 L826.1,330.3 L827.5,336.9 L828.9,329.9 L830.3,336.8 L831.7,329.9 L833.1,339.5 L834.5,332.8 L835.9,352.3 L837.3,320.5 L838.7,341.7 L840.1,331.9 L841.5,349.5 L842.9,322.6 L844.3,338.2 L845.7,325.7 L847.1,338.8 L848.5,325.5 L849.9,344.8 L851.3,325.7 L852.7,334.7 L854.1,327.7 L855.5,343.5 L856.9,326.1 L858.3,337.5 L859.7,323.9 L861.1,341.3 L862.5,323.3 L863.9,337 L865.3,325.8 L866.7,334.5 L868.1,328.6 L869.5,337.1 L870.9,329.5 L872.3,339.7 L873.7,334.9 L875.1,342.7 L876.5,330.5 L877.9,338.5 L879.3,325.2 L880.7,352 L882.1,326.5 L883.5,340.4 L884.9,337.2 L886.3,350.5 L887.7,335.5 L889.1,351.5 L890.5,309.3 L891.9,347.1 L893.3,327.5 L894.7,335.6 L896.1,330.8 L897.5,346.5 L898.9,323.3 L900.3,354.7 L901.7,336.2 L903.1,348 L904.5,321 L905.9,346.3 L907.3,326.6 L908.7,352.4 L910.1,313.7 L911.5,334.2 L912.9,331.7 L914.3,355.5 L915.7,327.9 L917.1,352.4 L918.5,248.8 L919.9,346 L921.3,332.8 L922.7,347.1 L924.1,321.8 L925.5,349.8 L926.9,329.2 L928.3,348.5 L929.7,329.2 L931.1,345 L932.5,238.9 L933.9,349.1 L935.3,323.3 L936.7,343.8 L938.1,321.4 L939.5,350.1 L940.9,335.2 L942.3,297.2 L943.7,329.5 L945.1,342.2 L946.5,335.8 L947.9,348.9 L949.3,332 L950.7,343.8 L952.1,331.5 L953.5,342.5 L954.9,333.5 L956.3,335.3 L957.7,328.3 L959.1,338.4 L960.5,327.8 L961.9,341.6 L963.3,321.9 L964.7,346.9 L966.1,334.4 L967.5,337.2 L968.9,323.2 L970.3,346 L971.7,324.2 L973.1,352.4 L974.5,328.2 L975.9,348.2 L977.3,327.6 L978.7,354 L980.1,323.5 L981.5,340.9 L982.9,325.2 L984.3,333.5 L985.7,337 L987.1,350.7 L988.5,265.3 L989.9,352.5 L991.3,321.7 L992.7,342.1 L994.1,335.1 L995.5,354.5 L996.9,331.2 L998.3,354.2 L999.7,324.8 L1001.1,352.5 L1002.5,247.7 L1003.9,344.7 L1005.3,331.3 L1006.7,340.2 L1008.1,289.5 L1009.5,335.5 L1010.9,262 L1012.3,343.4 L1013.7,324.7 L1015.1,352.6 L1016.5,331.4 L1017.9,303.8 L1019.3,326.4 L1020.7,340.8 L1022.1,335.7 L1023.5,350.3" fill="none" stroke="#E0B400" stroke-width="1" stroke-linejoin="round"/>
<path d="M743.5,377.5 H1023.5" stroke="#56A64B" stroke-width="1"/>
<rect x="717.0" y="412.1" width="14" height="4" rx="2" fill="#56A64B"/>
<text x="739.5" y="417.0" font-size="12" textLength="21.0" lengthAdjust="spacing">avg</text>
<rect x="771.2" y="412.1" width="14" height="4" rx="2" fill="#E0B400"/>
<text x="793.0" y="417.0" font-size="12" textLength="43.2" lengthAdjust="spacing">highest</text>
<rect x="1048.5" y="174.5" width="335" height="257" rx="2" fill="#fff" stroke="#e1e3e5"/>
<text x="1057.6" y="196.1" font-size="15" font-weight="500" textLength="249.0" lengthAdjust="spacing" stroke="#24292e" stroke-width="0.3">Ingress TCP connections (per pod)</text>
<circle cx="1331" cy="191" r="5.9" fill="none" stroke="#5b6168" stroke-width="1.3"/>
<rect x="1330.4" y="190.2" width="1.3" height="4" fill="#5b6168"/><circle cx="1331" cy="188.1" r="0.8" fill="#5b6168"/>
<path d="M1089.5,230.5 H1367.5 M1089.5,267.5 H1367.5 M1089.5,304.5 H1367.5 M1089.5,341.5 H1367.5 M1089.5,378.5 H1367.5 M1123.0,223.5 V383.5 M1192.5,223.5 V383.5 M1262.0,223.5 V383.5 M1331.5,223.5 V383.5" stroke="#e4e5e6" stroke-width="1" fill="none"/>
<text x="1083.5" y="234.9" font-size="12" text-anchor="end">200</text>
<text x="1083.5" y="271.9" font-size="12" text-anchor="end">150</text>
<text x="1083.5" y="308.9" font-size="12" text-anchor="end">100</text>
<text x="1083.5" y="345.9" font-size="12" text-anchor="end">50</text>
<text x="1083.5" y="382.9" font-size="12" text-anchor="end">0</text>
<text x="1123.0" y="398.0" font-size="12" text-anchor="middle">15:30</text>
<text x="1192.5" y="398.0" font-size="12" text-anchor="middle">15:45</text>
<text x="1262.0" y="398.0" font-size="12" text-anchor="middle">16:00</text>
<text x="1331.5" y="398.0" font-size="12" text-anchor="middle">16:15</text>
<path d="M1089.5,262.8 L1091,263.6 L1092.5,263.4 L1094,260.7 L1095.5,258.5 L1097,260.1 L1098.5,261.5 L1100,261.5 L1101.5,261.1 L1103,260.8 L1104.5,257.6 L1106,252.2 L1107.5,253 L1109,252.6 L1110.5,252.3 L1112,252 L1113.5,251.8 L1115,260.5 L1116.5,270.7 L1118,267.7 L1119.5,265 L1121,264.7 L1122.5,264.7 L1124,264.6 L1125.5,264.5 L1127,264.3 L1128.5,270.3 L1130,271.7 L1131.5,271.2 L1133,270.9 L1134.5,271.2 L1136,271.3 L1137.5,271.4 L1139,271.6 L1140.5,271.4 L1142,270.6 L1143.5,270.4 L1145,270.6 L1146.5,271.3 L1148,271.6 L1149.5,268.6 L1151,261.1 L1152.5,257.8 L1154,257.2 L1155.5,256.1 L1157,254.6 L1158.5,254.5 L1160,254.8 L1161.5,254.8 L1163,255 L1164.5,256.7 L1166,260.9 L1167.5,263.3 L1169,265.5 L1170.5,265.9 L1172,264.7 L1173.5,263.1 L1175,261.4 L1176.5,260.4 L1178,259.3 L1179.5,259.4 L1181,259.3 L1182.5,259.8 L1184,262.3 L1185.5,264.4 L1187,261.6 L1188.5,259.6 L1190,260.2 L1191.5,259.9 L1193,259.7 L1194.5,259.7 L1196,260.1 L1197.5,260.7 L1199,260.3 L1200.5,260 L1202,261.5 L1203.5,263.6 L1205,262.6 L1206.5,261.9 L1208,261.2 L1209.5,260.7 L1211,260.5 L1212.5,260.2 L1214,260.4 L1215.5,261.4 L1217,269 L1218.5,269.3 L1220,266.9 L1221.5,267 L1223,266.7 L1224.5,265.7 L1226,265.3 L1227.5,265.4 L1229,265.6 L1230.5,265.4 L1232,263.9 L1233.5,261.6 L1235,259 L1236.5,258.3 L1238,257.4 L1239.5,255.7 L1241,255.1 L1242.5,255.5 L1244,255.7 L1245.5,255.8 L1247,255.3 L1248.5,255.4 L1250,257.8 L1251.5,261.7 L1253,265.4 L1254.5,268.5 L1256,269.9 L1257.5,267.4 L1259,265.7 L1260.5,266 L1262,266.3 L1263.5,266.2 L1265,266 L1266.5,266 L1268,266.3 L1269.5,266.9 L1271,267.4 L1272.5,267.8 L1274,269.3 L1275.5,270 L1277,269.5 L1278.5,269.4 L1280,269.3 L1281.5,269.6 L1283,269.6 L1284.5,269.4 L1286,267.9 L1287.5,258 L1289,258.3 L1290.5,258.2 L1292,257.7 L1293.5,257.6 L1295,259 L1296.5,266.1 L1298,263.2 L1299.5,249.4 L1301,245.5 L1302.5,244 L1304,243 L1305.5,242.9 L1307,242.7 L1308.5,242.5 L1310,254.7 L1311.5,265.9 L1313,264.8 L1314.5,263.5 L1316,263.4 L1317.5,264 L1319,264.8 L1320.5,265.4 L1322,265.6 L1323.5,268.7 L1325,269 L1326.5,268.2 L1328,267.6 L1329.5,267.6 L1331,267 L1332.5,266.1 L1334,266 L1335.5,262.3 L1337,258.5 L1338.5,255.9 L1340,255.2 L1341.5,255.7 L1343,255.6 L1344.5,254.5 L1346,255.4 L1347.5,256.9 L1349,257.2 L1350.5,257.5 L1352,257.8 L1353.5,259.6 L1355,265 L1356.5,267.8 L1358,268 L1359.5,267.7 L1361,267.1 L1362.5,266.4 L1364,266.5 L1365.5,266.6 L1367,266.4 L1367,378.5 L1089.5,378.5Z" fill="#E0B400" fill-opacity="0.017"/>
<path d="M1089.5,262.8 L1091,263.6 L1092.5,263.4 L1094,260.7 L1095.5,258.5 L1097,260.1 L1098.5,261.5 L1100,261.5 L1101.5,261.1 L1103,260.8 L1104.5,257.6 L1106,252.2 L1107.5,253 L1109,252.6 L1110.5,252.3 L1112,252 L1113.5,251.8 L1115,260.5 L1116.5,270.7 L1118,267.7 L1119.5,265 L1121,264.7 L1122.5,264.7 L1124,264.6 L1125.5,264.5 L1127,264.3 L1128.5,270.3 L1130,271.7 L1131.5,271.2 L1133,270.9 L1134.5,271.2 L1136,271.3 L1137.5,271.4 L1139,271.6 L1140.5,271.4 L1142,270.6 L1143.5,270.4 L1145,270.6 L1146.5,271.3 L1148,271.6 L1149.5,268.6 L1151,261.1 L1152.5,257.8 L1154,257.2 L1155.5,256.1 L1157,254.6 L1158.5,254.5 L1160,254.8 L1161.5,254.8 L1163,255 L1164.5,256.7 L1166,260.9 L1167.5,263.3 L1169,265.5 L1170.5,265.9 L1172,264.7 L1173.5,263.1 L1175,261.4 L1176.5,260.4 L1178,259.3 L1179.5,259.4 L1181,259.3 L1182.5,259.8 L1184,262.3 L1185.5,264.4 L1187,261.6 L1188.5,259.6 L1190,260.2 L1191.5,259.9 L1193,259.7 L1194.5,259.7 L1196,260.1 L1197.5,260.7 L1199,260.3 L1200.5,260 L1202,261.5 L1203.5,263.6 L1205,262.6 L1206.5,261.9 L1208,261.2 L1209.5,260.7 L1211,260.5 L1212.5,260.2 L1214,260.4 L1215.5,261.4 L1217,269 L1218.5,269.3 L1220,266.9 L1221.5,267 L1223,266.7 L1224.5,265.7 L1226,265.3 L1227.5,265.4 L1229,265.6 L1230.5,265.4 L1232,263.9 L1233.5,261.6 L1235,259 L1236.5,258.3 L1238,257.4 L1239.5,255.7 L1241,255.1 L1242.5,255.5 L1244,255.7 L1245.5,255.8 L1247,255.3 L1248.5,255.4 L1250,257.8 L1251.5,261.7 L1253,265.4 L1254.5,268.5 L1256,269.9 L1257.5,267.4 L1259,265.7 L1260.5,266 L1262,266.3 L1263.5,266.2 L1265,266 L1266.5,266 L1268,266.3 L1269.5,266.9 L1271,267.4 L1272.5,267.8 L1274,269.3 L1275.5,270 L1277,269.5 L1278.5,269.4 L1280,269.3 L1281.5,269.6 L1283,269.6 L1284.5,269.4 L1286,267.9 L1287.5,258 L1289,258.3 L1290.5,258.2 L1292,257.7 L1293.5,257.6 L1295,259 L1296.5,266.1 L1298,263.2 L1299.5,249.4 L1301,245.5 L1302.5,244 L1304,243 L1305.5,242.9 L1307,242.7 L1308.5,242.5 L1310,254.7 L1311.5,265.9 L1313,264.8 L1314.5,263.5 L1316,263.4 L1317.5,264 L1319,264.8 L1320.5,265.4 L1322,265.6 L1323.5,268.7 L1325,269 L1326.5,268.2 L1328,267.6 L1329.5,267.6 L1331,267 L1332.5,266.1 L1334,266 L1335.5,262.3 L1337,258.5 L1338.5,255.9 L1340,255.2 L1341.5,255.7 L1343,255.6 L1344.5,254.5 L1346,255.4 L1347.5,256.9 L1349,257.2 L1350.5,257.5 L1352,257.8 L1353.5,259.6 L1355,265 L1356.5,267.8 L1358,268 L1359.5,267.7 L1361,267.1 L1362.5,266.4 L1364,266.5 L1365.5,266.6 L1367,266.4" fill="none" stroke="#E0B400" stroke-width="1" stroke-linejoin="round"/>
<path d="M1089.5,317.5 L1091,317.9 L1092.5,318.3 L1094,318.3 L1095.5,318.4 L1097,318.5 L1098.5,318.8 L1100,319.2 L1101.5,319.6 L1103,320 L1104.5,320.1 L1106,319.9 L1107.5,319.6 L1109,319.6 L1110.5,319.5 L1112,319.6 L1113.5,319.8 L1115,323.3 L1116.5,325 L1118,324.9 L1119.5,325.7 L1121,325.8 L1122.5,325.7 L1124,325.7 L1125.5,325.8 L1127,325.9 L1128.5,326.1 L1130,326.6 L1131.5,326.6 L1133,326.8 L1134.5,327 L1136,327.2 L1137.5,327.3 L1139,327.8 L1140.5,328.2 L1142,328.3 L1143.5,328.7 L1145,329.1 L1146.5,329.7 L1148,329.6 L1149.5,329.1 L1151,329 L1152.5,329.2 L1154,328.6 L1155.5,328.2 L1157,328.2 L1158.5,327.8 L1160,327.1 L1161.5,327.4 L1163,327.4 L1164.5,327.3 L1166,327.9 L1167.5,328.5 L1169,329 L1170.5,329.5 L1172,329.8 L1173.5,329.5 L1175,329.2 L1176.5,329.7 L1178,330 L1179.5,330 L1181,329.7 L1182.5,329.3 L1184,329.5 L1185.5,329.6 L1187,329.4 L1188.5,329.5 L1190,329.7 L1191.5,329.9 L1193,330 L1194.5,329.9 L1196,329.7 L1197.5,329.4 L1199,329.7 L1200.5,330 L1202,330.1 L1203.5,330.1 L1205,330 L1206.5,330.4 L1208,330.6 L1209.5,330.4 L1211,330.3 L1212.5,330.2 L1214,330.5 L1215.5,330.8 L1217,331.2 L1218.5,331.1 L1220,330.9 L1221.5,330.5 L1223,330.3 L1224.5,330.2 L1226,330.2 L1227.5,330.2 L1229,330.2 L1230.5,329.9 L1232,329.3 L1233.5,329 L1235,328.9 L1236.5,329 L1238,329 L1239.5,328.8 L1241,328.7 L1242.5,328.6 L1244,328.7 L1245.5,328.6 L1247,328.5 L1248.5,328.3 L1250,328.2 L1251.5,328.5 L1253,328.6 L1254.5,328.6 L1256,328.6 L1257.5,328.7 L1259,328.9 L1260.5,329 L1262,329 L1263.5,328.8 L1265,328.4 L1266.5,328.3 L1268,328.3 L1269.5,328.5 L1271,328.5 L1272.5,328.4 L1274,328.5 L1275.5,328.7 L1277,328.9 L1278.5,328.9 L1280,328.8 L1281.5,328.9 L1283,329 L1284.5,328.9 L1286,328.8 L1287.5,329 L1289,329.3 L1290.5,329.5 L1292,329.4 L1293.5,329.5 L1295,329.7 L1296.5,329.8 L1298,330 L1299.5,329.3 L1301,327.6 L1302.5,325.8 L1304,324.6 L1305.5,324.6 L1307,324.7 L1308.5,324.6 L1310,326.3 L1311.5,328.5 L1313,328.7 L1314.5,328.6 L1316,328.4 L1317.5,328.3 L1319,328.5 L1320.5,328.7 L1322,328.9 L1323.5,329.2 L1325,329.4 L1326.5,329.6 L1328,329.8 L1329.5,330.1 L1331,329.7 L1332.5,329.1 L1334,329.2 L1335.5,329.1 L1337,328.6 L1338.5,328.5 L1340,328.7 L1341.5,328.1 L1343,327.7 L1344.5,327.6 L1346,327.6 L1347.5,327.8 L1349,327.5 L1350.5,327.7 L1352,327.9 L1353.5,328.1 L1355,328.5 L1356.5,329.3 L1358,329.7 L1359.5,329.3 L1361,329 L1362.5,328.7 L1364,329 L1365.5,329.3 L1367,329.5 L1367,378.5 L1089.5,378.5Z" fill="#56A64B" fill-opacity="0.017"/>
<path d="M1089.5,317.5 L1091,317.9 L1092.5,318.3 L1094,318.3 L1095.5,318.4 L1097,318.5 L1098.5,318.8 L1100,319.2 L1101.5,319.6 L1103,320 L1104.5,320.1 L1106,319.9 L1107.5,319.6 L1109,319.6 L1110.5,319.5 L1112,319.6 L1113.5,319.8 L1115,323.3 L1116.5,325 L1118,324.9 L1119.5,325.7 L1121,325.8 L1122.5,325.7 L1124,325.7 L1125.5,325.8 L1127,325.9 L1128.5,326.1 L1130,326.6 L1131.5,326.6 L1133,326.8 L1134.5,327 L1136,327.2 L1137.5,327.3 L1139,327.8 L1140.5,328.2 L1142,328.3 L1143.5,328.7 L1145,329.1 L1146.5,329.7 L1148,329.6 L1149.5,329.1 L1151,329 L1152.5,329.2 L1154,328.6 L1155.5,328.2 L1157,328.2 L1158.5,327.8 L1160,327.1 L1161.5,327.4 L1163,327.4 L1164.5,327.3 L1166,327.9 L1167.5,328.5 L1169,329 L1170.5,329.5 L1172,329.8 L1173.5,329.5 L1175,329.2 L1176.5,329.7 L1178,330 L1179.5,330 L1181,329.7 L1182.5,329.3 L1184,329.5 L1185.5,329.6 L1187,329.4 L1188.5,329.5 L1190,329.7 L1191.5,329.9 L1193,330 L1194.5,329.9 L1196,329.7 L1197.5,329.4 L1199,329.7 L1200.5,330 L1202,330.1 L1203.5,330.1 L1205,330 L1206.5,330.4 L1208,330.6 L1209.5,330.4 L1211,330.3 L1212.5,330.2 L1214,330.5 L1215.5,330.8 L1217,331.2 L1218.5,331.1 L1220,330.9 L1221.5,330.5 L1223,330.3 L1224.5,330.2 L1226,330.2 L1227.5,330.2 L1229,330.2 L1230.5,329.9 L1232,329.3 L1233.5,329 L1235,328.9 L1236.5,329 L1238,329 L1239.5,328.8 L1241,328.7 L1242.5,328.6 L1244,328.7 L1245.5,328.6 L1247,328.5 L1248.5,328.3 L1250,328.2 L1251.5,328.5 L1253,328.6 L1254.5,328.6 L1256,328.6 L1257.5,328.7 L1259,328.9 L1260.5,329 L1262,329 L1263.5,328.8 L1265,328.4 L1266.5,328.3 L1268,328.3 L1269.5,328.5 L1271,328.5 L1272.5,328.4 L1274,328.5 L1275.5,328.7 L1277,328.9 L1278.5,328.9 L1280,328.8 L1281.5,328.9 L1283,329 L1284.5,328.9 L1286,328.8 L1287.5,329 L1289,329.3 L1290.5,329.5 L1292,329.4 L1293.5,329.5 L1295,329.7 L1296.5,329.8 L1298,330 L1299.5,329.3 L1301,327.6 L1302.5,325.8 L1304,324.6 L1305.5,324.6 L1307,324.7 L1308.5,324.6 L1310,326.3 L1311.5,328.5 L1313,328.7 L1314.5,328.6 L1316,328.4 L1317.5,328.3 L1319,328.5 L1320.5,328.7 L1322,328.9 L1323.5,329.2 L1325,329.4 L1326.5,329.6 L1328,329.8 L1329.5,330.1 L1331,329.7 L1332.5,329.1 L1334,329.2 L1335.5,329.1 L1337,328.6 L1338.5,328.5 L1340,328.7 L1341.5,328.1 L1343,327.7 L1344.5,327.6 L1346,327.6 L1347.5,327.8 L1349,327.5 L1350.5,327.7 L1352,327.9 L1353.5,328.1 L1355,328.5 L1356.5,329.3 L1358,329.7 L1359.5,329.3 L1361,329 L1362.5,328.7 L1364,329 L1365.5,329.3 L1367,329.5" fill="none" stroke="#56A64B" stroke-width="1" stroke-linejoin="round"/>
<path d="M1089.5,378.5 H1367.5" stroke="#5794F2" stroke-width="1"/>
<rect x="1061.0" y="412.1" width="14" height="4" rx="2" fill="#56A64B"/>
<text x="1083.5" y="417.0" font-size="12" textLength="21.0" lengthAdjust="spacing">avg</text>
<rect x="1115.2" y="412.1" width="14" height="4" rx="2" fill="#E0B400"/>
<text x="1137.0" y="417.0" font-size="12" textLength="43.2" lengthAdjust="spacing">highest</text>
<rect x="1191.5" y="412.1" width="14" height="4" rx="2" fill="#5794F2"/>
<text x="1213.0" y="417.0" font-size="12" textLength="24.7" lengthAdjust="spacing">limit</text>
<rect x="16.5" y="478.5" width="335" height="257" rx="2" fill="#fff" stroke="#e1e3e5"/>
<text x="25.6" y="500.1" font-size="15" font-weight="500" textLength="136.6" lengthAdjust="spacing" stroke="#24292e" stroke-width="0.3">Receive bandwidth</text>
<path d="M91,551.5 H335 M91,591.5 H335 M91,632.5 H335 M120.4,527.5 V637.5 M181.4,527.5 V637.5 M242.4,527.5 V637.5 M303.4,527.5 V637.5" stroke="#e4e5e6" stroke-width="1" fill="none"/>
<text x="85.0" y="555.9" font-size="12" text-anchor="end" textLength="36.2" lengthAdjust="spacing">1 GB/s</text>
<text x="85.0" y="595.9" font-size="12" text-anchor="end" textLength="56.0" lengthAdjust="spacing">500 MB/s</text>
<text x="85.0" y="636.9" font-size="12" text-anchor="end" textLength="29.5" lengthAdjust="spacing">0 B/s</text>
<text x="120.4" y="652.0" font-size="12" text-anchor="middle">15:30</text>
<text x="181.4" y="652.0" font-size="12" text-anchor="middle">15:45</text>
<text x="242.4" y="652.0" font-size="12" text-anchor="middle">16:00</text>
<text x="303.4" y="652.0" font-size="12" text-anchor="middle">16:15</text>
<g class="c" fill="url(#g5)"><rect x="91" y="605.1" height="27.4"/><rect x="92" y="605" height="27.5"/><rect x="93" y="603.6" height="28.9"/><rect x="94" y="602.2" height="30.3"/><rect x="95" y="603.8" height="28.7"/><rect x="96" y="605.9" height="26.6"/><rect x="97" y="608.1" height="24.4"/><rect x="98" y="605" height="27.5"/><rect x="99" y="602" height="30.5"/><rect x="100" y="599.4" height="33.1"/><rect x="101" y="601.5" height="31"/><rect x="102" y="603.7" height="28.8"/><rect x="103" y="605.7" height="26.8"/><rect x="104" y="604.4" height="28.1"/><rect x="105" y="603.1" height="29.4"/><rect x="106" y="602.7" height="29.8"/><rect x="107" y="604.8" height="27.7"/><rect x="108" y="607" height="25.5"/><rect x="109" y="606.4" height="26.1"/><rect x="110" y="602.3" height="30.2"/><rect x="111" y="599.4" height="33.1"/><rect x="112" y="602.2" height="30.3"/><rect x="113" y="605" height="27.5"/><rect x="114" y="606.8" height="25.7"/><rect x="115" y="603.9" height="28.6"/><rect x="116" y="601.1" height="31.4"/><rect x="117" y="599.8" height="32.7"/><rect x="118" y="603.2" height="29.3"/><rect x="119" y="606.6" height="25.9"/><rect x="120" y="607.2" height="25.3"/><rect x="121" y="604.6" height="27.9"/><rect x="122" y="602" height="30.5"/><rect x="123" y="603" height="29.5"/><rect x="124" y="605.2" height="27.3"/><rect x="125" y="607.4" height="25.1"/><rect x="126" y="604.4" height="28.1"/><rect x="127" y="600.5" height="32"/><rect x="128" y="601.3" height="31.2"/><rect x="129" y="603.9" height="28.6"/><rect x="130" y="606.6" height="25.9"/><rect x="131" y="604.3" height="28.2"/><rect x="132" y="601.6" height="30.9"/><rect x="133" y="600" height="32.5"/><rect x="134" y="603" height="29.5"/><rect x="135" y="605.9" height="26.6"/><rect x="136" y="604.3" height="28.2"/><rect x="137" y="602.4" height="30.1"/><rect x="138" y="603.2" height="29.3"/><rect x="139" y="605.4" height="27.1"/><rect x="140" y="607.6" height="24.9"/><rect x="141" y="606.2" height="26.3"/><rect x="142" y="603.4" height="29.1"/><rect x="143" y="600.6" height="31.9"/><rect x="144" y="601.3" height="31.2"/><rect x="145" y="603.8" height="28.7"/><rect x="146" y="606.4" height="26.1"/><rect x="147" y="605" height="27.5"/><rect x="148" y="603.2" height="29.3"/><rect x="149" y="602.2" height="30.3"/><rect x="150" y="605" height="27.5"/><rect x="151" y="607.5" height="25"/><rect x="152" y="603.7" height="28.8"/><rect x="153" y="599.9" height="32.6"/><rect x="154" y="600.4" height="32.1"/><rect x="155" y="602.9" height="29.6"/><rect x="156" y="605.4" height="27.1"/><rect x="157" y="602.9" height="29.6"/><rect x="158" y="600.2" height="32.3"/><rect x="159" y="601.5" height="31"/><rect x="160" y="604.2" height="28.3"/><rect x="161" y="604.1" height="28.4"/><rect x="162" y="600.9" height="31.6"/><rect x="163" y="599" height="33.5"/><rect x="164" y="601.4" height="31.1"/><rect x="165" y="603.8" height="28.7"/><rect x="166" y="605.7" height="26.8"/><rect x="167" y="604.3" height="28.2"/><rect x="168" y="602.9" height="29.6"/><rect x="169" y="602.8" height="29.7"/><rect x="170" y="604.8" height="27.7"/><rect x="171" y="606.8" height="25.7"/><rect x="172" y="605.8" height="26.7"/><rect x="173" y="603.2" height="29.3"/><rect x="174" y="601.5" height="31"/><rect x="175" y="602.3" height="30.2"/><rect x="176" y="600.6" height="31.9"/><rect x="177" y="595.4" height="37.1"/><rect x="178" y="590.7" height="41.8"/><rect x="179" y="587.5" height="45"/><rect x="180" y="587.8" height="44.7"/><rect x="181" y="592.2" height="40.3"/><rect x="182" y="594.8" height="37.7"/><rect x="183" y="596.1" height="36.4"/><rect x="184" y="601.1" height="31.4"/><rect x="185" y="606.4" height="26.1"/><rect x="186" y="606.7" height="25.8"/><rect x="187" y="604.4" height="28.1"/><rect x="188" y="602.1" height="30.4"/><rect x="189" y="603.4" height="29.1"/><rect x="190" y="605.9" height="26.6"/><rect x="191" y="608.3" height="24.2"/><rect x="192" y="605.2" height="27.3"/><rect x="193" y="602" height="30.5"/><rect x="194" y="598.9" height="33.6"/><rect x="195" y="602.2" height="30.3"/><rect x="196" y="605.7" height="26.8"/><rect x="197" y="605.9" height="26.6"/><rect x="198" y="602.8" height="29.7"/><rect x="199" y="599.7" height="32.8"/><rect x="200" y="601.6" height="30.9"/><rect x="201" y="605.2" height="27.3"/><rect x="202" y="607.3" height="25.2"/><rect x="203" y="605" height="27.5"/><rect x="204" y="602.8" height="29.7"/><rect x="205" y="601.7" height="30.8"/><rect x="206" y="604.4" height="28.1"/><rect x="207" y="607.1" height="25.4"/><rect x="208" y="604.8" height="27.7"/><rect x="209" y="602.2" height="30.3"/><rect x="210" y="603.5" height="29"/><rect x="211" y="605.8" height="26.7"/><rect x="212" y="608.2" height="24.3"/><rect x="213" y="605.2" height="27.3"/><rect x="214" y="602" height="30.5"/><rect x="215" y="600.2" height="32.3"/><rect x="216" y="602.3" height="30.2"/><rect x="217" y="604.3" height="28.2"/><rect x="218" y="605.4" height="27.1"/><rect x="219" y="603.6" height="28.9"/><rect x="220" y="601.7" height="30.8"/><rect x="221" y="601.8" height="30.7"/><rect x="222" y="604.5" height="28"/><rect x="223" y="607.1" height="25.4"/><rect x="224" y="606.1" height="26.4"/><rect x="225" y="603.4" height="29.1"/><rect x="226" y="600.7" height="31.8"/><rect x="227" y="601.2" height="31.3"/><rect x="228" y="603.7" height="28.8"/><rect x="229" y="604.6" height="27.9"/><rect x="230" y="601.1" height="31.4"/><rect x="231" y="596.7" height="35.8"/><rect x="232" y="593.3" height="39.2"/><rect x="233" y="591.3" height="41.2"/><rect x="234" y="591.6" height="40.9"/><rect x="235" y="594.8" height="37.7"/><rect x="236" y="596.5" height="36"/><rect x="237" y="597.9" height="34.6"/><rect x="238" y="602.4" height="30.1"/><rect x="239" y="606.2" height="26.3"/><rect x="240" y="606.2" height="26.3"/><rect x="241" y="604.2" height="28.3"/><rect x="242" y="602.2" height="30.3"/><rect x="243" y="603.8" height="28.7"/><rect x="244" y="603.3" height="29.2"/><rect x="245" y="599.8" height="32.7"/><rect x="246" y="594.4" height="38.1"/><rect x="247" y="589.7" height="42.8"/><rect x="248" y="585.8" height="46.7"/><rect x="249" y="586.1" height="46.4"/><rect x="250" y="590.8" height="41.7"/><rect x="251" y="595.8" height="36.7"/><rect x="252" y="598" height="34.5"/><rect x="253" y="598.9" height="33.6"/><rect x="254" y="603" height="29.5"/><rect x="255" y="605.7" height="26.8"/><rect x="256" y="607.5" height="25"/><rect x="257" y="603.8" height="28.7"/><rect x="258" y="600.1" height="32.4"/><rect x="259" y="601.5" height="31"/><rect x="260" y="604.1" height="28.4"/><rect x="261" y="604.7" height="27.8"/><rect x="262" y="603.1" height="29.4"/><rect x="263" y="601.5" height="31"/><rect x="264" y="601.7" height="30.8"/><rect x="265" y="604.6" height="27.9"/><rect x="266" y="607.4" height="25.1"/><rect x="267" y="605.2" height="27.3"/><rect x="268" y="601.9" height="30.6"/><rect x="269" y="599.9" height="32.6"/><rect x="270" y="602.2" height="30.3"/><rect x="271" y="604.5" height="28"/><rect x="272" y="605" height="27.5"/><rect x="273" y="602.5" height="30"/><rect x="274" y="600.2" height="32.3"/><rect x="275" y="603.8" height="28.7"/><rect x="276" y="607.4" height="25.1"/><rect x="277" y="604.8" height="27.7"/><rect x="278" y="600.5" height="32"/><rect x="279" y="601" height="31.5"/><rect x="280" y="604.8" height="27.7"/><rect x="281" y="606.6" height="25.9"/><rect x="282" y="603.8" height="28.7"/><rect x="283" y="601" height="31.5"/><rect x="284" y="600" height="32.5"/><rect x="285" y="599.7" height="32.8"/><rect x="286" y="598.3" height="34.2"/><rect x="287" y="595" height="37.5"/><rect x="288" y="591.4" height="41.1"/><rect x="289" y="591.2" height="41.3"/><rect x="290" y="593.8" height="38.7"/><rect x="291" y="597.7" height="34.8"/><rect x="292" y="602.3" height="30.2"/><rect x="293" y="603.9" height="28.6"/><rect x="294" y="603.3" height="29.2"/><rect x="295" y="602.1" height="30.4"/><rect x="296" y="603.9" height="28.6"/><rect x="297" y="605.7" height="26.8"/><rect x="298" y="604.5" height="28"/><rect x="299" y="602.8" height="29.7"/><rect x="300" y="603.3" height="29.2"/><rect x="301" y="605.8" height="26.7"/><rect x="302" y="606.9" height="25.6"/><rect x="303" y="605" height="27.5"/><rect x="304" y="603.1" height="29.4"/><rect x="305" y="603" height="29.5"/><rect x="306" y="605.1" height="27.4"/><rect x="307" y="607.1" height="25.4"/><rect x="308" y="605.1" height="27.4"/><rect x="309" y="601.5" height="31"/><rect x="310" y="599.6" height="32.9"/><rect x="311" y="602.5" height="30"/><rect x="312" y="605.4" height="27.1"/><rect x="313" y="605.5" height="27"/><rect x="314" y="602.6" height="29.9"/><rect x="315" y="599.6" height="32.9"/><rect x="316" y="601.2" height="31.3"/><rect x="317" y="604.4" height="28.1"/><rect x="318" y="607.7" height="24.8"/><rect x="319" y="604.6" height="27.9"/><rect x="320" y="600.6" height="31.9"/><rect x="321" y="601.1" height="31.4"/><rect x="322" y="603.8" height="28.7"/><rect x="323" y="605.2" height="27.3"/><rect x="324" y="603.5" height="29"/><rect x="325" y="601.9" height="30.6"/><rect x="326" y="604.1" height="28.4"/><rect x="327" y="606.3" height="26.2"/><rect x="328" y="607.4" height="25.1"/><rect x="329" y="604.6" height="27.9"/><rect x="330" y="601.9" height="30.6"/><rect x="331" y="600.3" height="32.2"/><rect x="332" y="603.6" height="28.9"/><rect x="333" y="606.9" height="25.6"/><rect x="334" y="606.3" height="26.2"/></g>
<g class="c" fill="url(#g6)"><rect x="91" y="577.8" height="27.3"/><rect x="92" y="577.6" height="27.3"/><rect x="93" y="575.3" height="28.3"/><rect x="94" y="573" height="29.2"/><rect x="95" y="575.7" height="28.1"/><rect x="96" y="579.2" height="26.7"/><rect x="97" y="582.8" height="25.3"/><rect x="98" y="577.7" height="27.3"/><rect x="99" y="572.6" height="29.3"/><rect x="100" y="568.3" height="31.1"/><rect x="101" y="571.9" height="29.6"/><rect x="102" y="575.5" height="28.2"/><rect x="103" y="578.8" height="26.9"/><rect x="104" y="576.6" height="27.8"/><rect x="105" y="574.4" height="28.6"/><rect x="106" y="573.8" height="28.9"/><rect x="107" y="577.4" height="27.4"/><rect x="108" y="580.9" height="26"/><rect x="109" y="580" height="26.4"/><rect x="110" y="573.1" height="29.2"/><rect x="111" y="568.3" height="31.1"/><rect x="112" y="573" height="29.2"/><rect x="113" y="577.7" height="27.3"/><rect x="114" y="580.6" height="26.1"/><rect x="115" y="575.9" height="28"/><rect x="116" y="571.2" height="29.9"/><rect x="117" y="569" height="30.8"/><rect x="118" y="574.7" height="28.5"/><rect x="119" y="580.4" height="26.3"/><rect x="120" y="581.3" height="25.9"/><rect x="121" y="577" height="27.6"/><rect x="122" y="572.7" height="29.3"/><rect x="123" y="574.4" height="28.6"/><rect x="124" y="578" height="27.2"/><rect x="125" y="581.6" height="25.8"/><rect x="126" y="576.7" height="27.7"/><rect x="127" y="570.2" height="30.3"/><rect x="128" y="571.5" height="29.8"/><rect x="129" y="575.9" height="28"/><rect x="130" y="580.3" height="26.3"/><rect x="131" y="576.5" height="27.8"/><rect x="132" y="571.9" height="29.6"/><rect x="133" y="569.3" height="30.7"/><rect x="134" y="574.3" height="28.7"/><rect x="135" y="579.2" height="26.7"/><rect x="136" y="576.5" height="27.8"/><rect x="137" y="573.3" height="29.1"/><rect x="138" y="574.7" height="28.5"/><rect x="139" y="578.4" height="27.1"/><rect x="140" y="582" height="25.6"/><rect x="141" y="579.6" height="26.6"/><rect x="142" y="575" height="28.4"/><rect x="143" y="570.4" height="30.3"/><rect x="144" y="571.5" height="29.8"/><rect x="145" y="575.7" height="28.1"/><rect x="146" y="580" height="26.4"/><rect x="147" y="577.6" height="27.3"/><rect x="148" y="574.7" height="28.5"/><rect x="149" y="573.1" height="29.2"/><rect x="150" y="577.7" height="27.3"/><rect x="151" y="581.9" height="25.6"/><rect x="152" y="575.5" height="28.2"/><rect x="153" y="569.1" height="30.8"/><rect x="154" y="570" height="30.4"/><rect x="155" y="574.2" height="28.7"/><rect x="156" y="578.4" height="27"/><rect x="157" y="574.2" height="28.7"/><rect x="158" y="569.7" height="30.5"/><rect x="159" y="571.9" height="29.6"/><rect x="160" y="576.3" height="27.9"/><rect x="161" y="576.2" height="27.9"/><rect x="162" y="570.9" height="30.1"/><rect x="163" y="567.6" height="31.4"/><rect x="164" y="571.6" height="29.8"/><rect x="165" y="575.6" height="28.1"/><rect x="166" y="578.8" height="26.9"/><rect x="167" y="576.5" height="27.8"/><rect x="168" y="574.1" height="28.7"/><rect x="169" y="574" height="28.8"/><rect x="170" y="577.4" height="27.4"/><rect x="171" y="580.7" height="26.1"/><rect x="172" y="579" height="26.8"/><rect x="173" y="572.4" height="30.7"/><rect x="174" y="566" height="35.5"/><rect x="175" y="564.8" height="37.5"/><rect x="176" y="562.3" height="38.3"/><rect x="177" y="556" height="39.4"/><rect x="178" y="550.5" height="40.3"/><rect x="179" y="546.5" height="41"/><rect x="180" y="551.1" height="36.7"/><rect x="181" y="556.9" height="35.3"/><rect x="182" y="559.8" height="35"/><rect x="183" y="561" height="35.1"/><rect x="184" y="567.6" height="33.5"/><rect x="185" y="577.4" height="29"/><rect x="186" y="580.5" height="26.2"/><rect x="187" y="576.7" height="27.7"/><rect x="188" y="572.9" height="29.2"/><rect x="189" y="574.9" height="28.4"/><rect x="190" y="579.1" height="26.8"/><rect x="191" y="583.2" height="25.1"/><rect x="192" y="578" height="27.2"/><rect x="193" y="572.7" height="29.3"/><rect x="194" y="567.5" height="31.4"/><rect x="195" y="572.9" height="29.2"/><rect x="196" y="578.8" height="26.9"/><rect x="197" y="579.2" height="26.7"/><rect x="198" y="574" height="28.8"/><rect x="199" y="568.9" height="30.9"/><rect x="200" y="572" height="29.6"/><rect x="201" y="578" height="27.2"/><rect x="202" y="581.5" height="25.8"/><rect x="203" y="577.7" height="27.3"/><rect x="204" y="574" height="28.8"/><rect x="205" y="572.1" height="29.5"/><rect x="206" y="576.6" height="27.8"/><rect x="207" y="581.1" height="26"/><rect x="208" y="577.4" height="27.4"/><rect x="209" y="573.1" height="29.2"/><rect x="210" y="575.2" height="28.3"/><rect x="211" y="579.1" height="26.8"/><rect x="212" y="582.9" height="25.2"/><rect x="213" y="578" height="27.2"/><rect x="214" y="572.6" height="29.4"/><rect x="215" y="569.7" height="30.5"/><rect x="216" y="573.1" height="29.2"/><rect x="217" y="576.5" height="27.8"/><rect x="218" y="578.4" height="27"/><rect x="219" y="575.3" height="28.3"/><rect x="220" y="572.2" height="29.5"/><rect x="221" y="572.3" height="29.5"/><rect x="222" y="576.8" height="27.7"/><rect x="223" y="581.2" height="25.9"/><rect x="224" y="579.6" height="26.6"/><rect x="225" y="575" height="28.4"/><rect x="226" y="568.9" height="31.8"/><rect x="227" y="566.4" height="34.8"/><rect x="228" y="565.7" height="38"/><rect x="229" y="563.7" height="40.9"/><rect x="230" y="558.9" height="42.1"/><rect x="231" y="553.8" height="42.9"/><rect x="232" y="550" height="43.3"/><rect x="233" y="553.7" height="37.6"/><rect x="234" y="554.3" height="37.4"/><rect x="235" y="548.6" height="46.2"/><rect x="236" y="543" height="53.5"/><rect x="237" y="547.4" height="50.5"/><rect x="238" y="553" height="49.3"/><rect x="239" y="559.9" height="46.3"/><rect x="240" y="565.5" height="40.6"/><rect x="241" y="568.6" height="35.6"/><rect x="242" y="570.7" height="31.5"/><rect x="243" y="571.2" height="32.6"/><rect x="244" y="568.7" height="34.6"/><rect x="245" y="565" height="34.9"/><rect x="246" y="558.7" height="35.7"/><rect x="247" y="553.3" height="36.4"/><rect x="248" y="549" height="36.8"/><rect x="249" y="549.3" height="36.8"/><rect x="250" y="554.7" height="36.1"/><rect x="251" y="560.4" height="35.3"/><rect x="252" y="562.7" height="35.4"/><rect x="253" y="563.1" height="35.8"/><rect x="254" y="570.2" height="32.9"/><rect x="255" y="578.8" height="26.9"/><rect x="256" y="581.9" height="25.7"/><rect x="257" y="575.7" height="28.1"/><rect x="258" y="569.5" height="30.6"/><rect x="259" y="571.9" height="29.7"/><rect x="260" y="576.2" height="27.9"/><rect x="261" y="577.2" height="27.5"/><rect x="262" y="574.6" height="28.6"/><rect x="263" y="571.9" height="29.6"/><rect x="264" y="572.2" height="29.5"/><rect x="265" y="576.9" height="27.6"/><rect x="266" y="581.6" height="25.7"/><rect x="267" y="578" height="27.2"/><rect x="268" y="572.4" height="29.4"/><rect x="269" y="569.2" height="30.7"/><rect x="270" y="573" height="29.2"/><rect x="271" y="576.9" height="27.7"/><rect x="272" y="577.7" height="27.3"/><rect x="273" y="573.6" height="29"/><rect x="274" y="569.7" height="30.5"/><rect x="275" y="575.7" height="28.1"/><rect x="276" y="581.6" height="25.8"/><rect x="277" y="577.3" height="27.5"/><rect x="278" y="570.2" height="30.3"/><rect x="279" y="571" height="30"/><rect x="280" y="577.3" height="27.5"/><rect x="281" y="580.4" height="26.2"/><rect x="282" y="575.7" height="28.1"/><rect x="283" y="568.1" height="32.9"/><rect x="284" y="565.3" height="34.7"/><rect x="285" y="564.8" height="34.9"/><rect x="286" y="562.9" height="35.4"/><rect x="287" y="558.6" height="36.4"/><rect x="288" y="553.9" height="37.5"/><rect x="289" y="553.6" height="37.6"/><rect x="290" y="557.1" height="36.8"/><rect x="291" y="562.1" height="35.6"/><rect x="292" y="568.1" height="34.2"/><rect x="293" y="570.3" height="33.6"/><rect x="294" y="571.4" height="32"/><rect x="295" y="572.9" height="29.3"/><rect x="296" y="575.9" height="28.1"/><rect x="297" y="578.9" height="26.8"/><rect x="298" y="576.9" height="27.7"/><rect x="299" y="574" height="28.8"/><rect x="300" y="574.8" height="28.5"/><rect x="301" y="579" height="26.8"/><rect x="302" y="580.9" height="26"/><rect x="303" y="577.7" height="27.3"/><rect x="304" y="574.5" height="28.6"/><rect x="305" y="574.4" height="28.6"/><rect x="306" y="577.8" height="27.3"/><rect x="307" y="581.1" height="25.9"/><rect x="308" y="577.8" height="27.3"/><rect x="309" y="571.9" height="29.7"/><rect x="310" y="568.7" height="30.9"/><rect x="311" y="573.5" height="29"/><rect x="312" y="578.3" height="27.1"/><rect x="313" y="578.6" height="27"/><rect x="314" y="573.6" height="29"/><rect x="315" y="568.7" height="30.9"/><rect x="316" y="571.4" height="29.8"/><rect x="317" y="576.7" height="27.7"/><rect x="318" y="582.1" height="25.6"/><rect x="319" y="577" height="27.6"/><rect x="320" y="570.4" height="30.2"/><rect x="321" y="571.2" height="29.9"/><rect x="322" y="575.7" height="28.1"/><rect x="323" y="578" height="27.2"/><rect x="324" y="575.1" height="28.4"/><rect x="325" y="572.6" height="29.4"/><rect x="326" y="576.2" height="27.9"/><rect x="327" y="579.8" height="26.5"/><rect x="328" y="581.7" height="25.7"/><rect x="329" y="577.1" height="27.6"/><rect x="330" y="572.5" height="29.4"/><rect x="331" y="569.9" height="30.4"/><rect x="332" y="575.4" height="28.3"/><rect x="333" y="580.9" height="26.1"/><rect x="334" y="579.8" height="26.5"/></g>
<path d="M174,632.5 C178.5,632.5 180,621.5 183,621.5 C186,621.5 187.5,632.5 192,632.5Z" fill="#E0B400"/><path d="M228,632.5 C231,632.5 232,624.5 234,624.5 C236,624.5 237,632.5 240,632.5Z" fill="#E0B400"/><path d="M243,632.5 C246.5,632.5 247.7,622.5 250,622.5 C252.3,622.5 253.5,632.5 257,632.5Z" fill="#E0B400"/><path d="M282,632.5 C286,632.5 287.3,623.5 290,623.5 C292.7,623.5 294,632.5 298,632.5Z" fill="#E0B400"/>
<path d="M174.5,632.5 C178.8,632.5 180.2,624.5 183,624.5 C185.8,624.5 187.2,632.5 191.5,632.5Z" fill="#56A64B"/><path d="M228.5,632.5 C231.2,632.5 232.2,626.5 234,626.5 C235.8,626.5 236.8,632.5 239.5,632.5Z" fill="#56A64B"/><path d="M243.5,632.5 C246.8,632.5 247.8,624.5 250,624.5 C252.2,624.5 253.2,632.5 256.5,632.5Z" fill="#56A64B"/><path d="M282.5,632.5 C286.2,632.5 287.5,625.5 290,625.5 C292.5,625.5 293.8,632.5 297.5,632.5Z" fill="#56A64B"/>
<rect x="29.0" y="666.0" width="14" height="4" rx="2" fill="#56A64B"/>
<text x="51.5" y="671.7" font-size="12" textLength="171.8" lengthAdjust="spacing">querier-67b8dd84b4-2xcwv</text>
<rect x="234.0" y="666.0" width="14" height="4" rx="2" fill="#E0B400"/>
<text x="256.5" y="671.7" font-size="12" textLength="171.8" lengthAdjust="spacing" clip-path="url(#cl01)">querier-67b8dd84b4-4hn5v</text>
<rect x="29.0" y="689.3" width="14" height="4" rx="2" fill="#5794F2"/>
<text x="51.5" y="695.0" font-size="12" textLength="171.8" lengthAdjust="spacing">querier-67b8dd84b4-62qz7</text>
<rect x="234.0" y="689.3" width="14" height="4" rx="2" fill="#FA6400"/>
<text x="256.5" y="695.0" font-size="12" textLength="171.8" lengthAdjust="spacing" clip-path="url(#cl01)">querier-67b8dd84b4-9bxkt</text>
<rect x="29.0" y="712.9" width="14" height="4" rx="2" fill="#E02F44"/>
<text x="51.5" y="718.6" font-size="12" textLength="159.2" lengthAdjust="spacing">querier-67b8dd84b4-lsrvt</text>
<rect x="221.5" y="712.9" width="14" height="4" rx="2" fill="#3274D9"/>
<text x="243.5" y="718.6" font-size="12" textLength="171.8" lengthAdjust="spacing" clip-path="url(#cl01)">querier-67b8dd84b4-mzkqp</text>
<rect x="360.5" y="478.5" width="335" height="257" rx="2" fill="#fff" stroke="#e1e3e5"/>
<text x="369.6" y="500.1" font-size="15" font-weight="500" textLength="142.5" lengthAdjust="spacing" stroke="#24292e" stroke-width="0.3">Transmit bandwidth</text>
<path d="M434,532.5 H679 M434,582.5 H679 M434,632.5 H679 M463.5,527.5 V637.5 M524.8,527.5 V637.5 M586.0,527.5 V637.5 M647.3,527.5 V637.5" stroke="#e4e5e6" stroke-width="1" fill="none"/>
<text x="428.0" y="536.9" font-size="12" text-anchor="end" textLength="55.8" lengthAdjust="spacing">200 MB/s</text>
<text x="428.0" y="586.9" font-size="12" text-anchor="end" textLength="53.8" lengthAdjust="spacing">100 MB/s</text>
<text x="428.0" y="636.9" font-size="12" text-anchor="end" textLength="29.5" lengthAdjust="spacing">0 B/s</text>
<text x="463.5" y="652.0" font-size="12" text-anchor="middle">15:30</text>
<text x="524.8" y="652.0" font-size="12" text-anchor="middle">15:45</text>
<text x="586.0" y="652.0" font-size="12" text-anchor="middle">16:00</text>
<text x="647.3" y="652.0" font-size="12" text-anchor="middle">16:15</text>
<g class="c" fill="url(#g7)"><rect x="434" y="607.5" height="25"/><rect x="435" y="609.4" height="23.1"/><rect x="436" y="609.7" height="22.8"/><rect x="437" y="608.4" height="24.1"/><rect x="438" y="607.1" height="25.4"/><rect x="439" y="606.1" height="26.4"/><rect x="440" y="607.8" height="24.7"/><rect x="441" y="609.4" height="23.1"/><rect x="442" y="611" height="21.5"/><rect x="443" y="608.4" height="24.1"/><rect x="444" y="605.9" height="26.6"/><rect x="445" y="603.8" height="28.7"/><rect x="446" y="606.8" height="25.7"/><rect x="447" y="609.9" height="22.6"/><rect x="448" y="610.3" height="22.2"/><rect x="449" y="608.6" height="23.9"/><rect x="450" y="606.9" height="25.6"/><rect x="451" y="607.3" height="25.2"/><rect x="452" y="608.6" height="23.9"/><rect x="453" y="609.9" height="22.6"/><rect x="454" y="609" height="23.5"/><rect x="455" y="607.5" height="25"/><rect x="456" y="606" height="26.5"/><rect x="457" y="606" height="26.5"/><rect x="458" y="608.2" height="24.3"/><rect x="459" y="610.3" height="22.2"/><rect x="460" y="608.2" height="24.3"/><rect x="461" y="606.2" height="26.3"/><rect x="462" y="605.6" height="26.9"/><rect x="463" y="607.4" height="25.1"/><rect x="464" y="609.2" height="23.3"/><rect x="465" y="611" height="21.5"/><rect x="466" y="608.8" height="23.7"/><rect x="467" y="606.6" height="25.9"/><rect x="468" y="605" height="27.5"/><rect x="469" y="607" height="25.5"/><rect x="470" y="609.1" height="23.4"/><rect x="471" y="610.1" height="22.4"/><rect x="472" y="607" height="25.5"/><rect x="473" y="604" height="28.5"/><rect x="474" y="605.2" height="27.3"/><rect x="475" y="607.3" height="25.2"/><rect x="476" y="609.4" height="23.1"/><rect x="477" y="608" height="24.5"/><rect x="478" y="606.5" height="26"/><rect x="479" y="605" height="27.5"/><rect x="480" y="606.4" height="26.1"/><rect x="481" y="608.2" height="24.3"/><rect x="482" y="610" height="22.5"/><rect x="483" y="609.8" height="22.7"/><rect x="484" y="607.4" height="25.1"/><rect x="485" y="605" height="27.5"/><rect x="486" y="605.2" height="27.3"/><rect x="487" y="607.9" height="24.6"/><rect x="488" y="610.6" height="21.9"/><rect x="489" y="609.5" height="23"/><rect x="490" y="607.5" height="25"/><rect x="491" y="605.7" height="26.8"/><rect x="492" y="607" height="25.5"/><rect x="493" y="608.3" height="24.2"/><rect x="494" y="608.9" height="23.6"/><rect x="495" y="607.2" height="25.3"/><rect x="496" y="605.4" height="27.1"/><rect x="497" y="607.2" height="25.3"/><rect x="498" y="609.9" height="22.6"/><rect x="499" y="610.7" height="21.8"/><rect x="500" y="608.9" height="23.6"/><rect x="501" y="607" height="25.5"/><rect x="502" y="606.8" height="25.7"/><rect x="503" y="608" height="24.5"/><rect x="504" y="609.2" height="23.3"/><rect x="505" y="609.1" height="23.4"/><rect x="506" y="606.8" height="25.7"/><rect x="507" y="604.6" height="27.9"/><rect x="508" y="607" height="25.5"/><rect x="509" y="609.3" height="23.2"/><rect x="510" y="611.3" height="21.2"/><rect x="511" y="608.7" height="23.8"/><rect x="512" y="606" height="26.5"/><rect x="513" y="606.9" height="25.6"/><rect x="514" y="609.2" height="23.3"/><rect x="515" y="611.5" height="21"/><rect x="516" y="609.5" height="23"/><rect x="517" y="607.1" height="25.4"/><rect x="518" y="602.7" height="29.8"/><rect x="519" y="599.4" height="33.1"/><rect x="520" y="596.6" height="35.9"/><rect x="521" y="592.4" height="40.1"/><rect x="522" y="587.1" height="45.4"/><rect x="523" y="582.3" height="50.2"/><rect x="524" y="582.2" height="50.3"/><rect x="525" y="587" height="45.5"/><rect x="526" y="592.2" height="40.3"/><rect x="527" y="597.1" height="35.4"/><rect x="528" y="600.9" height="31.6"/><rect x="529" y="604.2" height="28.3"/><rect x="530" y="605.4" height="27.1"/><rect x="531" y="607.3" height="25.2"/><rect x="532" y="609.3" height="23.2"/><rect x="533" y="608" height="24.5"/><rect x="534" y="606" height="26.5"/><rect x="535" y="603.9" height="28.6"/><rect x="536" y="606.2" height="26.3"/><rect x="537" y="609.4" height="23.1"/><rect x="538" y="610.3" height="22.2"/><rect x="539" y="608.7" height="23.8"/><rect x="540" y="607.2" height="25.3"/><rect x="541" y="607.2" height="25.3"/><rect x="542" y="608.4" height="24.1"/><rect x="543" y="609.6" height="22.9"/><rect x="544" y="609.7" height="22.8"/><rect x="545" y="607.9" height="24.6"/><rect x="546" y="606.1" height="26.4"/><rect x="547" y="604.6" height="27.9"/><rect x="548" y="606.3" height="26.2"/><rect x="549" y="608.1" height="24.4"/><rect x="550" y="609.2" height="23.3"/><rect x="551" y="607" height="25.5"/><rect x="552" y="604.9" height="27.6"/><rect x="553" y="606" height="26.5"/><rect x="554" y="608.1" height="24.4"/><rect x="555" y="610.1" height="22.4"/><rect x="556" y="610.3" height="22.2"/><rect x="557" y="608.3" height="24.2"/><rect x="558" y="606.3" height="26.2"/><rect x="559" y="604.3" height="28.2"/><rect x="560" y="606.1" height="26.4"/><rect x="561" y="608" height="24.5"/><rect x="562" y="609.6" height="22.9"/><rect x="563" y="607.6" height="24.9"/><rect x="564" y="605.6" height="26.9"/><rect x="565" y="606.1" height="26.4"/><rect x="566" y="608.3" height="24.2"/><rect x="567" y="610.4" height="22.1"/><rect x="568" y="609.5" height="23"/><rect x="569" y="607.3" height="25.2"/><rect x="570" y="602.8" height="29.7"/><rect x="571" y="599.7" height="32.8"/><rect x="572" y="596" height="36.5"/><rect x="573" y="591.6" height="40.9"/><rect x="574" y="585.9" height="46.6"/><rect x="575" y="580.5" height="52"/><rect x="576" y="580.3" height="52.2"/><rect x="577" y="584.6" height="47.9"/><rect x="578" y="590.3" height="42.2"/><rect x="579" y="597" height="35.5"/><rect x="580" y="601.6" height="30.9"/><rect x="581" y="605.3" height="27.2"/><rect x="582" y="606.1" height="26.4"/><rect x="583" y="606.9" height="25.6"/><rect x="584" y="608.6" height="23.9"/><rect x="585" y="610.2" height="22.3"/><rect x="586" y="610.6" height="21.9"/><rect x="587" y="605.5" height="27"/><rect x="588" y="598" height="34.5"/><rect x="589" y="591.4" height="41.1"/><rect x="590" y="587.3" height="45.2"/><rect x="591" y="582.2" height="50.3"/><rect x="592" y="576" height="56.5"/><rect x="593" y="575.8" height="56.7"/><rect x="594" y="580.9" height="51.6"/><rect x="595" y="587.1" height="45.4"/><rect x="596" y="594.2" height="38.3"/><rect x="597" y="600.9" height="31.6"/><rect x="598" y="605" height="27.5"/><rect x="599" y="605.5" height="27"/><rect x="600" y="605.1" height="27.4"/><rect x="601" y="606.9" height="25.6"/><rect x="602" y="608.7" height="23.8"/><rect x="603" y="610.5" height="22"/><rect x="604" y="608.5" height="24"/><rect x="605" y="606.5" height="26"/><rect x="606" y="605.5" height="27"/><rect x="607" y="607.2" height="25.3"/><rect x="608" y="608.8" height="23.7"/><rect x="609" y="609.9" height="22.6"/><rect x="610" y="608.6" height="23.9"/><rect x="611" y="607.3" height="25.2"/><rect x="612" y="607" height="25.5"/><rect x="613" y="607.9" height="24.6"/><rect x="614" y="608.9" height="23.6"/><rect x="615" y="609.2" height="23.3"/><rect x="616" y="607.1" height="25.4"/><rect x="617" y="605" height="27.5"/><rect x="618" y="605.6" height="26.9"/><rect x="619" y="608" height="24.5"/><rect x="620" y="610.5" height="22"/><rect x="621" y="609" height="23.5"/><rect x="622" y="607.5" height="25"/><rect x="623" y="605.9" height="26.6"/><rect x="624" y="607.4" height="25.1"/><rect x="625" y="606.8" height="25.7"/><rect x="626" y="603" height="29.5"/><rect x="627" y="596.3" height="36.2"/><rect x="628" y="590.2" height="42.3"/><rect x="629" y="584.8" height="47.7"/><rect x="630" y="580.3" height="52.2"/><rect x="631" y="580.4" height="52.1"/><rect x="632" y="585.7" height="46.8"/><rect x="633" y="590.3" height="42.2"/><rect x="634" y="593.9" height="38.6"/><rect x="635" y="597.5" height="35"/><rect x="636" y="604.1" height="28.4"/><rect x="637" y="608.8" height="23.7"/><rect x="638" y="609" height="23.5"/><rect x="639" y="607.3" height="25.2"/><rect x="640" y="605.6" height="26.9"/><rect x="641" y="604.4" height="28.1"/><rect x="642" y="606.8" height="25.7"/><rect x="643" y="609.1" height="23.4"/><rect x="644" y="609.3" height="23.2"/><rect x="645" y="607.3" height="25.2"/><rect x="646" y="605.4" height="27.1"/><rect x="647" y="607.2" height="25.3"/><rect x="648" y="609.2" height="23.3"/><rect x="649" y="611.1" height="21.4"/><rect x="650" y="608.8" height="23.7"/><rect x="651" y="605.7" height="26.8"/><rect x="652" y="604.8" height="27.7"/><rect x="653" y="607.1" height="25.4"/><rect x="654" y="609.3" height="23.2"/><rect x="655" y="611.5" height="21"/><rect x="656" y="609.4" height="23.1"/><rect x="657" y="607" height="25.5"/><rect x="658" y="606" height="26.5"/><rect x="659" y="607.8" height="24.7"/><rect x="660" y="609.6" height="22.9"/><rect x="661" y="608.9" height="23.6"/><rect x="662" y="607.5" height="25"/><rect x="663" y="606.1" height="26.4"/><rect x="664" y="606.3" height="26.2"/><rect x="665" y="607.7" height="24.8"/><rect x="666" y="609" height="23.5"/><rect x="667" y="609.7" height="22.8"/><rect x="668" y="607.8" height="24.7"/><rect x="669" y="605.8" height="26.7"/><rect x="670" y="605.7" height="26.8"/><rect x="671" y="607.7" height="24.8"/><rect x="672" y="609.7" height="22.8"/><rect x="673" y="608.2" height="24.3"/><rect x="674" y="606.7" height="25.8"/><rect x="675" y="605.1" height="27.4"/><rect x="676" y="606.2" height="26.3"/><rect x="677" y="608.9" height="23.6"/><rect x="678" y="610.5" height="22"/></g>
<g class="c" fill="url(#g8)"><rect x="434" y="574.3" height="33.2"/><rect x="435" y="577" height="32.4"/><rect x="436" y="577.4" height="32.3"/><rect x="437" y="575.5" height="32.8"/><rect x="438" y="573.7" height="33.4"/><rect x="439" y="572.3" height="33.8"/><rect x="440" y="574.7" height="33.1"/><rect x="441" y="577.1" height="32.4"/><rect x="442" y="579.3" height="31.7"/><rect x="443" y="575.6" height="32.8"/><rect x="444" y="571.9" height="33.9"/><rect x="445" y="568.9" height="34.8"/><rect x="446" y="573.3" height="33.5"/><rect x="447" y="577.7" height="32.2"/><rect x="448" y="578.3" height="32"/><rect x="449" y="575.8" height="32.8"/><rect x="450" y="573.4" height="33.5"/><rect x="451" y="574.1" height="33.3"/><rect x="452" y="575.9" height="32.7"/><rect x="453" y="577.7" height="32.2"/><rect x="454" y="576.4" height="32.6"/><rect x="455" y="574.3" height="33.2"/><rect x="456" y="572.2" height="33.9"/><rect x="457" y="572.1" height="33.9"/><rect x="458" y="575.4" height="32.9"/><rect x="459" y="578.3" height="32"/><rect x="460" y="575.3" height="32.9"/><rect x="461" y="572.4" height="33.8"/><rect x="462" y="571.6" height="34"/><rect x="463" y="574.2" height="33.3"/><rect x="464" y="576.8" height="32.5"/><rect x="465" y="579.3" height="31.7"/><rect x="466" y="576.2" height="32.6"/><rect x="467" y="573" height="33.6"/><rect x="468" y="570.7" height="34.3"/><rect x="469" y="573.6" height="33.4"/><rect x="470" y="576.5" height="32.5"/><rect x="471" y="577.9" height="32.1"/><rect x="472" y="573.6" height="33.4"/><rect x="473" y="569.3" height="34.7"/><rect x="474" y="571.1" height="34.2"/><rect x="475" y="574.1" height="33.3"/><rect x="476" y="577.1" height="32.4"/><rect x="477" y="575" height="33"/><rect x="478" y="572.9" height="33.6"/><rect x="479" y="570.8" height="34.3"/><rect x="480" y="572.7" height="33.7"/><rect x="481" y="575.3" height="32.9"/><rect x="482" y="577.9" height="32.1"/><rect x="483" y="577.6" height="32.2"/><rect x="484" y="574.2" height="33.2"/><rect x="485" y="570.7" height="34.3"/><rect x="486" y="570.9" height="34.2"/><rect x="487" y="574.9" height="33"/><rect x="488" y="578.8" height="31.9"/><rect x="489" y="577.1" height="32.4"/><rect x="490" y="574.3" height="33.2"/><rect x="491" y="571.7" height="34"/><rect x="492" y="573.6" height="33.4"/><rect x="493" y="575.4" height="32.9"/><rect x="494" y="576.3" height="32.6"/><rect x="495" y="573.8" height="33.3"/><rect x="496" y="571.3" height="34.1"/><rect x="497" y="573.9" height="33.3"/><rect x="498" y="577.7" height="32.2"/><rect x="499" y="578.9" height="31.8"/><rect x="500" y="576.2" height="32.6"/><rect x="501" y="573.6" height="33.4"/><rect x="502" y="573.2" height="33.5"/><rect x="503" y="575" height="33"/><rect x="504" y="576.8" height="32.5"/><rect x="505" y="576.6" height="32.5"/><rect x="506" y="573.3" height="33.5"/><rect x="507" y="570.2" height="34.4"/><rect x="508" y="573.5" height="33.4"/><rect x="509" y="576.9" height="32.4"/><rect x="510" y="579.7" height="31.6"/><rect x="511" y="576" height="32.7"/><rect x="512" y="572.2" height="33.8"/><rect x="513" y="573.4" height="33.5"/><rect x="514" y="576.7" height="32.5"/><rect x="515" y="579.9" height="31.5"/><rect x="516" y="577.1" height="32.4"/><rect x="517" y="569.5" height="37.6"/><rect x="518" y="562.8" height="39.9"/><rect x="519" y="560" height="39.4"/><rect x="520" y="557.7" height="38.9"/><rect x="521" y="553.9" height="38.6"/><rect x="522" y="548.7" height="38.4"/><rect x="523" y="544.1" height="38.1"/><rect x="524" y="544.1" height="38.1"/><rect x="525" y="548.6" height="38.4"/><rect x="526" y="553.6" height="38.6"/><rect x="527" y="557" height="40.1"/><rect x="528" y="553.5" height="47.4"/><rect x="529" y="553.4" height="50.8"/><rect x="530" y="555.9" height="49.5"/><rect x="531" y="559.4" height="48"/><rect x="532" y="563.6" height="45.7"/><rect x="533" y="565.8" height="42.2"/><rect x="534" y="566.7" height="39.2"/><rect x="535" y="566.8" height="37"/><rect x="536" y="572.5" height="33.8"/><rect x="537" y="577" height="32.4"/><rect x="538" y="578.2" height="32"/><rect x="539" y="576.1" height="32.7"/><rect x="540" y="573.9" height="33.3"/><rect x="541" y="573.9" height="33.3"/><rect x="542" y="575.6" height="32.8"/><rect x="543" y="577.2" height="32.3"/><rect x="544" y="577.4" height="32.3"/><rect x="545" y="574.9" height="33"/><rect x="546" y="572.3" height="33.8"/><rect x="547" y="570.2" height="34.4"/><rect x="548" y="572.6" height="33.7"/><rect x="549" y="575.1" height="33"/><rect x="550" y="576.7" height="32.5"/><rect x="551" y="573.6" height="33.4"/><rect x="552" y="570.6" height="34.3"/><rect x="553" y="572.2" height="33.8"/><rect x="554" y="575.1" height="33"/><rect x="555" y="578.1" height="32.1"/><rect x="556" y="578.3" height="32"/><rect x="557" y="575.5" height="32.9"/><rect x="558" y="572.6" height="33.7"/><rect x="559" y="569.7" height="34.6"/><rect x="560" y="572.3" height="33.8"/><rect x="561" y="574.9" height="33"/><rect x="562" y="577.3" height="32.3"/><rect x="563" y="574.5" height="33.2"/><rect x="564" y="571.6" height="34"/><rect x="565" y="572.3" height="33.8"/><rect x="566" y="575.4" height="32.9"/><rect x="567" y="578.4" height="32"/><rect x="568" y="577.2" height="32.3"/><rect x="569" y="571.8" height="35.5"/><rect x="570" y="564.7" height="38.1"/><rect x="571" y="562.4" height="37.2"/><rect x="572" y="559.5" height="36.5"/><rect x="573" y="555.9" height="35.8"/><rect x="574" y="550.4" height="35.6"/><rect x="575" y="545" height="35.5"/><rect x="576" y="540.5" height="39.8"/><rect x="577" y="544.4" height="40.2"/><rect x="578" y="549.5" height="40.8"/><rect x="579" y="555.8" height="41.2"/><rect x="580" y="554.6" height="47"/><rect x="581" y="554.4" height="50.8"/><rect x="582" y="556.8" height="49.2"/><rect x="583" y="559.8" height="47.1"/><rect x="584" y="563.6" height="44.9"/><rect x="585" y="568.1" height="42.1"/><rect x="586" y="571.9" height="38.7"/><rect x="587" y="568.2" height="37.4"/><rect x="588" y="561.1" height="36.9"/><rect x="589" y="555.1" height="36.3"/><rect x="590" y="552.4" height="34.9"/><rect x="591" y="548.6" height="33.6"/><rect x="592" y="543.2" height="32.8"/><rect x="593" y="538" height="37.8"/><rect x="594" y="542.3" height="38.6"/><rect x="595" y="547.5" height="39.7"/><rect x="596" y="553.6" height="40.6"/><rect x="597" y="553.7" height="47.2"/><rect x="598" y="556.6" height="48.4"/><rect x="599" y="558.5" height="47"/><rect x="600" y="560.8" height="44.3"/><rect x="601" y="564.9" height="42"/><rect x="602" y="569.6" height="39.1"/><rect x="603" y="575" height="35.5"/><rect x="604" y="575.7" height="32.8"/><rect x="605" y="572.9" height="33.6"/><rect x="606" y="571.5" height="34.1"/><rect x="607" y="573.8" height="33.4"/><rect x="608" y="576.1" height="32.7"/><rect x="609" y="577.8" height="32.2"/><rect x="610" y="575.9" height="32.7"/><rect x="611" y="573.9" height="33.3"/><rect x="612" y="573.5" height="33.4"/><rect x="613" y="574.9" height="33"/><rect x="614" y="576.3" height="32.6"/><rect x="615" y="576.8" height="32.5"/><rect x="616" y="573.8" height="33.4"/><rect x="617" y="570.7" height="34.3"/><rect x="618" y="571.5" height="34"/><rect x="619" y="575.1" height="33"/><rect x="620" y="578.6" height="31.9"/><rect x="621" y="576.5" height="32.6"/><rect x="622" y="574.3" height="33.2"/><rect x="623" y="572" height="33.9"/><rect x="624" y="569.5" height="37.9"/><rect x="625" y="566.9" height="39.9"/><rect x="626" y="563.5" height="39.5"/><rect x="627" y="556.7" height="39.6"/><rect x="628" y="550.6" height="39.5"/><rect x="629" y="545.4" height="39.4"/><rect x="630" y="541.1" height="39.1"/><rect x="631" y="541.3" height="39.1"/><rect x="632" y="546.5" height="39.3"/><rect x="633" y="545.1" height="45.2"/><rect x="634" y="544.9" height="49"/><rect x="635" y="548.3" height="49.3"/><rect x="636" y="552.9" height="51.1"/><rect x="637" y="558.5" height="50.3"/><rect x="638" y="563" height="45.9"/><rect x="639" y="565.7" height="41.6"/><rect x="640" y="567.8" height="37.8"/><rect x="641" y="569.9" height="34.5"/><rect x="642" y="573.2" height="33.5"/><rect x="643" y="576.6" height="32.5"/><rect x="644" y="576.9" height="32.4"/><rect x="645" y="574.1" height="33.3"/><rect x="646" y="571.2" height="34.1"/><rect x="647" y="573.9" height="33.3"/><rect x="648" y="576.7" height="32.5"/><rect x="649" y="579.5" height="31.7"/><rect x="650" y="576.2" height="32.7"/><rect x="651" y="571.7" height="34"/><rect x="652" y="570.5" height="34.4"/><rect x="653" y="573.7" height="33.4"/><rect x="654" y="576.9" height="32.4"/><rect x="655" y="580.1" height="31.5"/><rect x="656" y="577" height="32.4"/><rect x="657" y="573.5" height="33.4"/><rect x="658" y="572.1" height="33.9"/><rect x="659" y="574.7" height="33.1"/><rect x="660" y="577.3" height="32.3"/><rect x="661" y="576.3" height="32.6"/><rect x="662" y="574.3" height="33.2"/><rect x="663" y="572.3" height="33.8"/><rect x="664" y="572.6" height="33.7"/><rect x="665" y="574.5" height="33.1"/><rect x="666" y="576.4" height="32.6"/><rect x="667" y="577.5" height="32.3"/><rect x="668" y="574.7" height="33.1"/><rect x="669" y="571.9" height="33.9"/><rect x="670" y="571.8" height="34"/><rect x="671" y="574.6" height="33.1"/><rect x="672" y="577.4" height="32.3"/><rect x="673" y="575.3" height="32.9"/><rect x="674" y="573.1" height="33.6"/><rect x="675" y="570.9" height="34.2"/><rect x="676" y="572.5" height="33.8"/><rect x="677" y="576.3" height="32.6"/><rect x="678" y="578.6" height="31.9"/></g>
<path d="M518,632.5 C522,632.5 523.3,621.5 526,621.5 C528.7,621.5 530,632.5 534,632.5Z" fill="#E0B400"/><path d="M572,632.5 C575,632.5 576,622.5 578,622.5 C580,622.5 581,632.5 584,632.5Z" fill="#E0B400"/><path d="M588,632.5 C591.5,632.5 592.7,621.5 595,621.5 C597.3,621.5 598.5,632.5 602,632.5Z" fill="#E0B400"/><path d="M626,632.5 C629.5,632.5 630.7,623.5 633,623.5 C635.3,623.5 636.5,632.5 640,632.5Z" fill="#E0B400"/>
<path d="M518.5,632.5 C522.2,632.5 523.5,624.5 526,624.5 C528.5,624.5 529.8,632.5 533.5,632.5Z" fill="#56A64B"/><path d="M572.5,632.5 C575.2,632.5 576.2,625.5 578,625.5 C579.8,625.5 580.8,632.5 583.5,632.5Z" fill="#56A64B"/><path d="M588.5,632.5 C591.8,632.5 592.8,624.5 595,624.5 C597.2,624.5 598.2,632.5 601.5,632.5Z" fill="#56A64B"/><path d="M626.5,632.5 C629.8,632.5 630.8,626.5 633,626.5 C635.2,626.5 636.2,632.5 639.5,632.5Z" fill="#56A64B"/>
<rect x="373.0" y="666.0" width="14" height="4" rx="2" fill="#56A64B"/>
<text x="395.5" y="671.7" font-size="12" textLength="171.8" lengthAdjust="spacing">querier-67b8dd84b4-2xcwv</text>
<rect x="578.0" y="666.0" width="14" height="4" rx="2" fill="#E0B400"/>
<text x="600.5" y="671.7" font-size="12" textLength="171.8" lengthAdjust="spacing" clip-path="url(#cl11)">querier-67b8dd84b4-4hn5v</text>
<rect x="373.0" y="689.3" width="14" height="4" rx="2" fill="#5794F2"/>
<text x="395.5" y="695.0" font-size="12" textLength="171.8" lengthAdjust="spacing">querier-67b8dd84b4-62qz7</text>
<rect x="578.0" y="689.3" width="14" height="4" rx="2" fill="#FA6400"/>
<text x="600.5" y="695.0" font-size="12" textLength="171.8" lengthAdjust="spacing" clip-path="url(#cl11)">querier-67b8dd84b4-9bxkt</text>
<rect x="373.0" y="712.9" width="14" height="4" rx="2" fill="#E02F44"/>
<text x="395.5" y="718.6" font-size="12" textLength="159.2" lengthAdjust="spacing">querier-67b8dd84b4-lsrvt</text>
<rect x="565.5" y="712.9" width="14" height="4" rx="2" fill="#3274D9"/>
<text x="587.5" y="718.6" font-size="12" textLength="171.8" lengthAdjust="spacing" clip-path="url(#cl11)">querier-67b8dd84b4-mzkqp</text>
<rect x="704.5" y="478.5" width="335" height="257" rx="2" fill="#fff" stroke="#e1e3e5"/>
<text x="713.6" y="500.1" font-size="15" font-weight="500" textLength="190.0" lengthAdjust="spacing" stroke="#24292e" stroke-width="0.3">Inflight requests (per pod)</text>
<path d="M738.5,545.5 H1023.5 M738.5,590.5 H1023.5 M738.5,636.5 H1023.5 M738.5,681.5 H1023.5 M772.8,527.5 V686.5 M844.1,527.5 V686.5 M915.3,527.5 V686.5 M986.6,527.5 V686.5" stroke="#e4e5e6" stroke-width="1" fill="none"/>
<text x="732.5" y="549.9" font-size="12" text-anchor="end">60</text>
<text x="732.5" y="594.9" font-size="12" text-anchor="end">40</text>
<text x="732.5" y="640.9" font-size="12" text-anchor="end">20</text>
<text x="732.5" y="685.9" font-size="12" text-anchor="end">0</text>
<text x="772.8" y="701.0" font-size="12" text-anchor="middle">15:30</text>
<text x="844.1" y="701.0" font-size="12" text-anchor="middle">15:45</text>
<text x="915.3" y="701.0" font-size="12" text-anchor="middle">16:00</text>
<text x="986.6" y="701.0" font-size="12" text-anchor="middle">16:15</text>
<path d="M738.5,634.6 L740,618.1 L741.5,640.5 L743,609.1 L744.5,642.8 L746,615.7 L747.5,626.7 L749,623.4 L750.5,632.9 L752,613.7 L753.5,579.5 L755,618 L756.5,630.2 L758,616.6 L759.5,629.8 L761,622 L762.5,638.7 L764,622.8 L765.5,633.8 L767,608.1 L768.5,632.3 L770,610.8 L771.5,636 L773,611.3 L774.5,641.1 L776,619.6 L777.5,630.7 L779,611.7 L780.5,635.3 L782,623.2 L783.5,638.1 L785,621 L786.5,637.9 L788,610.2 L789.5,639.3 L791,608.8 L792.5,627 L794,623.8 L795.5,636.1 L797,615.9 L798.5,642.5 L800,617.1 L801.5,626.5 L803,622.8 L804.5,632.1 L806,622.6 L807.5,632.5 L809,608.6 L810.5,639.3 L812,624.7 L813.5,641.5 L815,615 L816.5,642.6 L818,623.3 L819.5,634 L821,608.1 L822.5,635.3 L824,617.6 L825.5,631.4 L827,623.1 L828.5,632.5 L830,621.7 L831.5,631.9 L833,607.5 L834.5,642 L836,614.8 L837.5,632 L839,622.1 L840.5,595.4 L842,606.8 L843.5,624.9 L845,622.6 L846.5,630.2 L848,607.6 L849.5,638.7 L851,613.8 L852.5,642.2 L854,618.2 L855.5,630.7 L857,614.1 L858.5,590.8 L860,623.3 L861.5,636.7 L863,609.2 L864.5,632.4 L866,616.6 L867.5,635.7 L869,607 L870.5,632.6 L872,624.5 L873.5,593.1 L875,618.9 L876.5,635.1 L878,621 L879.5,634.9 L881,618.9 L882.5,641.4 L884,613.4 L885.5,641.1 L887,610.6 L888.5,642.5 L890,610.7 L891.5,628.3 L893,615.8 L894.5,630.1 L896,620.3 L897.5,629.6 L899,617.1 L900.5,638.8 L902,561.4 L903.5,601.7 L905,609.2 L906.5,636.3 L908,612.7 L909.5,639.9 L911,605.3 L912.5,642.1 L914,607.1 L915.5,639.8 L917,543.2 L918.5,594.3 L920,624.6 L921.5,641.9 L923,621.1 L924.5,635.9 L926,582.8 L927.5,636.5 L929,622.3 L930.5,547.8 L932,622.3 L933.5,595.9 L935,612.2 L936.5,641.8 L938,616.6 L939.5,630.2 L941,570.4 L942.5,626.9 L944,621.8 L945.5,554.6 L947,610.8 L948.5,597.8 L950,623 L951.5,642.1 L953,615.2 L954.5,639.8 L956,610.8 L957.5,628.8 L959,620.8 L960.5,642.7 L962,621.6 L963.5,595.8 L965,617.8 L966.5,639.8 L968,561.4 L969.5,625.8 L971,583.6 L972.5,642.4 L974,606.8 L975.5,626.8 L977,615 L978.5,596.5 L980,608.3 L981.5,641.8 L983,613.2 L984.5,633.1 L986,590.5 L987.5,563.6 L989,623 L990.5,630.3 L992,616.6 L993.5,593.3 L995,623.9 L996.5,632 L998,618.1 L999.5,627 L1001,561.4 L1002.5,629.7 L1004,613.5 L1005.5,627.1 L1007,624.2 L1008.5,594 L1010,612.5 L1011.5,635.6 L1013,623.6 L1014.5,639.5 L1016,607.7 L1017.5,568.2 L1019,618.4 L1020.5,634.4 L1022,615.1 L1023.5,588.9 L1023.5,681.5 L738.5,681.5Z" fill="#E0B400" fill-opacity="0.017"/>
<path d="M738.5,634.6 L740,618.1 L741.5,640.5 L743,609.1 L744.5,642.8 L746,615.7 L747.5,626.7 L749,623.4 L750.5,632.9 L752,613.7 L753.5,579.5 L755,618 L756.5,630.2 L758,616.6 L759.5,629.8 L761,622 L762.5,638.7 L764,622.8 L765.5,633.8 L767,608.1 L768.5,632.3 L770,610.8 L771.5,636 L773,611.3 L774.5,641.1 L776,619.6 L777.5,630.7 L779,611.7 L780.5,635.3 L782,623.2 L783.5,638.1 L785,621 L786.5,637.9 L788,610.2 L789.5,639.3 L791,608.8 L792.5,627 L794,623.8 L795.5,636.1 L797,615.9 L798.5,642.5 L800,617.1 L801.5,626.5 L803,622.8 L804.5,632.1 L806,622.6 L807.5,632.5 L809,608.6 L810.5,639.3 L812,624.7 L813.5,641.5 L815,615 L816.5,642.6 L818,623.3 L819.5,634 L821,608.1 L822.5,635.3 L824,617.6 L825.5,631.4 L827,623.1 L828.5,632.5 L830,621.7 L831.5,631.9 L833,607.5 L834.5,642 L836,614.8 L837.5,632 L839,622.1 L840.5,595.4 L842,606.8 L843.5,624.9 L845,622.6 L846.5,630.2 L848,607.6 L849.5,638.7 L851,613.8 L852.5,642.2 L854,618.2 L855.5,630.7 L857,614.1 L858.5,590.8 L860,623.3 L861.5,636.7 L863,609.2 L864.5,632.4 L866,616.6 L867.5,635.7 L869,607 L870.5,632.6 L872,624.5 L873.5,593.1 L875,618.9 L876.5,635.1 L878,621 L879.5,634.9 L881,618.9 L882.5,641.4 L884,613.4 L885.5,641.1 L887,610.6 L888.5,642.5 L890,610.7 L891.5,628.3 L893,615.8 L894.5,630.1 L896,620.3 L897.5,629.6 L899,617.1 L900.5,638.8 L902,561.4 L903.5,601.7 L905,609.2 L906.5,636.3 L908,612.7 L909.5,639.9 L911,605.3 L912.5,642.1 L914,607.1 L915.5,639.8 L917,543.2 L918.5,594.3 L920,624.6 L921.5,641.9 L923,621.1 L924.5,635.9 L926,582.8 L927.5,636.5 L929,622.3 L930.5,547.8 L932,622.3 L933.5,595.9 L935,612.2 L936.5,641.8 L938,616.6 L939.5,630.2 L941,570.4 L942.5,626.9 L944,621.8 L945.5,554.6 L947,610.8 L948.5,597.8 L950,623 L951.5,642.1 L953,615.2 L954.5,639.8 L956,610.8 L957.5,628.8 L959,620.8 L960.5,642.7 L962,621.6 L963.5,595.8 L965,617.8 L966.5,639.8 L968,561.4 L969.5,625.8 L971,583.6 L972.5,642.4 L974,606.8 L975.5,626.8 L977,615 L978.5,596.5 L980,608.3 L981.5,641.8 L983,613.2 L984.5,633.1 L986,590.5 L987.5,563.6 L989,623 L990.5,630.3 L992,616.6 L993.5,593.3 L995,623.9 L996.5,632 L998,618.1 L999.5,627 L1001,561.4 L1002.5,629.7 L1004,613.5 L1005.5,627.1 L1007,624.2 L1008.5,594 L1010,612.5 L1011.5,635.6 L1013,623.6 L1014.5,639.5 L1016,607.7 L1017.5,568.2 L1019,618.4 L1020.5,634.4 L1022,615.1 L1023.5,588.9" fill="none" stroke="#E0B400" stroke-width="1" stroke-linejoin="round"/>
<path d="M738.5,681 L740.5,681 L742.5,681 L744.5,681 L746.5,681 L748.5,681 L750.5,680.9 L752.5,680.5 L754.5,680.7 L756.5,681 L758.5,680.9 L760.5,680.6 L762.5,681 L764.5,680.8 L766.5,681 L768.5,680.9 L770.5,680.4 L772.5,680.4 L774.5,680.5 L776.5,680.8 L778.5,680.9 L780.5,680.9 L782.5,680.8 L784.5,680.5 L786.5,680.6 L788.5,680.8 L790.5,680.9 L792.5,680.4 L794.5,680.7 L796.5,680.6 L798.5,680.4 L800.5,680.3 L802.5,680.5 L804.5,681 L806.5,680.7 L808.5,680.5 L810.5,680.6 L812.5,680.2 L814.5,680.7 L816.5,680.9 L818.5,681 L820.5,680.9 L822.5,680.1 L824.5,680.6 L826.5,680.9 L828.5,680.9 L830.5,680.5 L832.5,680.1 L834.5,680.7 L836.5,680.4 L838.5,680.1 L840.5,680.2 L842.5,680.9 L844.5,680.8 L846.5,680.9 L848.5,680.9 L850.5,680.9 L852.5,681 L854.5,680.8 L856.5,680.4 L858.5,680.3 L860.5,680.6 L862.5,680.6 L864.5,680.4 L866.5,680.6 L868.5,680.6 L870.5,680.3 L872.5,680.7 L874.5,680.5 L876.5,680.6 L878.5,680.7 L880.5,680.7 L882.5,680.7 L884.5,680.5 L886.5,680.5 L888.5,680.6 L890.5,680.6 L892.5,680 L894.5,680.4 L896.5,680.3 L898.5,680.3 L900.5,680.7 L902.5,680.8 L904.5,680 L906.5,680.3 L908.5,680.6 L910.5,680.6 L912.5,679.8 L914.5,680.2 L916.5,680.6 L918.5,680.5 L920.5,680.2 L922.5,680.4 L924.5,679.9 L926.5,679.8 L928.5,679.9 L930.5,680 L932.5,680 L934.5,680.3 L936.5,680 L938.5,679.7 L940.5,679.9 L942.5,680.4 L944.5,680.5 L946.5,680.6 L948.5,680.4 L950.5,680.1 L952.5,680 L954.5,679.8 L956.5,679.7 L958.5,679.9 L960.5,680.2 L962.5,680.1 L964.5,680.1 L966.5,679.8 L968.5,679.9 L970.5,680.3 L972.5,680.4 L974.5,680.3 L976.5,679.9 L978.5,679.9 L980.5,680.1 L982.5,679.5 L984.5,680.1 L986.5,680.1 L988.5,680.2 L990.5,680.1 L992.5,679.5 L994.5,680.2 L996.5,680.3 L998.5,680 L1000.5,679.7 L1002.5,679.9 L1004.5,680 L1006.5,679.9 L1008.5,679.7 L1010.5,679.6 L1012.5,680.2 L1014.5,679.9 L1016.5,680 L1018.5,680 L1020.5,679.8 L1022.5,679.9" fill="none" stroke="#56A64B" stroke-width="1" stroke-linejoin="round"/>
<rect x="717.0" y="716.1" width="14" height="4" rx="2" fill="#56A64B"/>
<text x="739.5" y="721.0" font-size="12" textLength="21.0" lengthAdjust="spacing">avg</text>
<rect x="771.2" y="716.1" width="14" height="4" rx="2" fill="#E0B400"/>
<text x="793.0" y="721.0" font-size="12" textLength="43.2" lengthAdjust="spacing">highest</text>
<rect x="1048.5" y="478.5" width="335" height="257" rx="2" fill="#fff" stroke="#e1e3e5"/>
<text x="1057.6" y="500.1" font-size="15" font-weight="500" textLength="249.0" lengthAdjust="spacing" stroke="#24292e" stroke-width="0.3">Ingress TCP connections (per pod)</text>
<circle cx="1331" cy="495" r="5.9" fill="none" stroke="#5b6168" stroke-width="1.3"/>
<rect x="1330.4" y="494.2" width="1.3" height="4" fill="#5b6168"/><circle cx="1331" cy="492.1" r="0.8" fill="#5b6168"/>
<path d="M1088.5,571.5 H1367.5 M1088.5,627.5 H1367.5 M1088.5,682.5 H1367.5 M1122.1,527.5 V687.5 M1191.9,527.5 V687.5 M1261.6,527.5 V687.5 M1331.4,527.5 V687.5" stroke="#e4e5e6" stroke-width="1" fill="none"/>
<text x="1082.5" y="575.9" font-size="12" text-anchor="end">100</text>
<text x="1082.5" y="631.9" font-size="12" text-anchor="end">50</text>
<text x="1082.5" y="686.9" font-size="12" text-anchor="end">0</text>
<text x="1122.1" y="702.0" font-size="12" text-anchor="middle">15:30</text>
<text x="1191.9" y="702.0" font-size="12" text-anchor="middle">15:45</text>
<text x="1261.6" y="702.0" font-size="12" text-anchor="middle">16:00</text>
<text x="1331.4" y="702.0" font-size="12" text-anchor="middle">16:15</text>
<path d="M1088.5,627.6 L1090,628.3 L1091.5,629.1 L1093,629.7 L1094.5,629.8 L1096,630.5 L1097.5,631.1 L1099,631.2 L1100.5,630.9 L1102,629.9 L1103.5,629.7 L1105,630.5 L1106.5,631.6 L1108,632.8 L1109.5,634.2 L1111,635.3 L1112.5,636.3 L1114,634.5 L1115.5,628 L1117,625.3 L1118.5,624.2 L1120,623.6 L1121.5,627.1 L1123,630.3 L1124.5,632.9 L1126,636 L1127.5,636.2 L1129,636.4 L1130.5,636.8 L1132,637.8 L1133.5,637.6 L1135,636.8 L1136.5,636 L1138,631.6 L1139.5,630.8 L1141,632.2 L1142.5,633.3 L1144,634.3 L1145.5,635.8 L1147,636.9 L1148.5,635.9 L1150,634.9 L1151.5,632 L1153,633.1 L1154.5,636 L1156,637.5 L1157.5,638.4 L1159,638.1 L1160.5,637 L1162,635.6 L1163.5,634.1 L1165,634.4 L1166.5,636.1 L1168,638.2 L1169.5,640.2 L1171,639.6 L1172.5,638.7 L1174,638.6 L1175.5,638.3 L1177,634.4 L1178.5,602.7 L1180,584.3 L1181.5,584.2 L1183,584 L1184.5,584 L1186,587.1 L1187.5,603.6 L1189,615.9 L1190.5,624 L1192,632.4 L1193.5,631.2 L1195,629.4 L1196.5,629.2 L1198,630.8 L1199.5,634.3 L1201,636.3 L1202.5,637.4 L1204,637.9 L1205.5,638.9 L1207,628 L1208.5,609.9 L1210,609.2 L1211.5,609.1 L1213,609.2 L1214.5,620.3 L1216,638.7 L1217.5,637.5 L1219,634.9 L1220.5,632.2 L1222,629.3 L1223.5,628.3 L1225,628.2 L1226.5,619.8 L1228,576.7 L1229.5,576.3 L1231,576.2 L1232.5,576.4 L1234,619.5 L1235.5,628 L1237,614.7 L1238.5,614.5 L1240,614.3 L1241.5,614.4 L1243,623.9 L1244.5,636.1 L1246,634.2 L1247.5,632.3 L1249,593.8 L1250.5,548.4 L1252,548.3 L1253.5,548.5 L1255,554.6 L1256.5,557.9 L1258,558.2 L1259.5,558.3 L1261,558.5 L1262.5,585.7 L1264,578.5 L1265.5,569 L1267,569 L1268.5,569 L1270,569.2 L1271.5,608.5 L1273,620.9 L1274.5,620.8 L1276,620.9 L1277.5,609.9 L1279,593.1 L1280.5,593.2 L1282,593.3 L1283.5,594.7 L1285,608 L1286.5,621.5 L1288,635 L1289.5,623.3 L1291,602.2 L1292.5,585.2 L1294,585.1 L1295.5,585.2 L1297,585.4 L1298.5,589.5 L1300,602.5 L1301.5,611.9 L1303,611.9 L1304.5,612 L1306,617.2 L1307.5,624.2 L1309,630.6 L1310.5,631.6 L1312,622.6 L1313.5,619.5 L1315,619.6 L1316.5,619.6 L1318,619.6 L1319.5,615.8 L1321,613.3 L1322.5,615.1 L1324,613.4 L1325.5,567.8 L1327,568.3 L1328.5,569 L1330,569.9 L1331.5,570.4 L1333,601.9 L1334.5,601.9 L1336,612.4 L1337.5,635.5 L1339,637.1 L1340.5,632.5 L1342,635.7 L1343.5,638.3 L1345,639 L1346.5,612.7 L1348,581.7 L1349.5,556.4 L1351,556.2 L1352.5,556 L1354,561.6 L1355.5,607.8 L1357,620.8 L1358.5,631.9 L1360,639.4 L1361.5,638.7 L1363,591.8 L1364.5,583 L1366,583.3 L1367.5,583.5 L1367.5,682.5 L1088.5,682.5Z" fill="#E0B400" fill-opacity="0.017"/>
<path d="M1088.5,627.6 L1090,628.3 L1091.5,629.1 L1093,629.7 L1094.5,629.8 L1096,630.5 L1097.5,631.1 L1099,631.2 L1100.5,630.9 L1102,629.9 L1103.5,629.7 L1105,630.5 L1106.5,631.6 L1108,632.8 L1109.5,634.2 L1111,635.3 L1112.5,636.3 L1114,634.5 L1115.5,628 L1117,625.3 L1118.5,624.2 L1120,623.6 L1121.5,627.1 L1123,630.3 L1124.5,632.9 L1126,636 L1127.5,636.2 L1129,636.4 L1130.5,636.8 L1132,637.8 L1133.5,637.6 L1135,636.8 L1136.5,636 L1138,631.6 L1139.5,630.8 L1141,632.2 L1142.5,633.3 L1144,634.3 L1145.5,635.8 L1147,636.9 L1148.5,635.9 L1150,634.9 L1151.5,632 L1153,633.1 L1154.5,636 L1156,637.5 L1157.5,638.4 L1159,638.1 L1160.5,637 L1162,635.6 L1163.5,634.1 L1165,634.4 L1166.5,636.1 L1168,638.2 L1169.5,640.2 L1171,639.6 L1172.5,638.7 L1174,638.6 L1175.5,638.3 L1177,634.4 L1178.5,602.7 L1180,584.3 L1181.5,584.2 L1183,584 L1184.5,584 L1186,587.1 L1187.5,603.6 L1189,615.9 L1190.5,624 L1192,632.4 L1193.5,631.2 L1195,629.4 L1196.5,629.2 L1198,630.8 L1199.5,634.3 L1201,636.3 L1202.5,637.4 L1204,637.9 L1205.5,638.9 L1207,628 L1208.5,609.9 L1210,609.2 L1211.5,609.1 L1213,609.2 L1214.5,620.3 L1216,638.7 L1217.5,637.5 L1219,634.9 L1220.5,632.2 L1222,629.3 L1223.5,628.3 L1225,628.2 L1226.5,619.8 L1228,576.7 L1229.5,576.3 L1231,576.2 L1232.5,576.4 L1234,619.5 L1235.5,628 L1237,614.7 L1238.5,614.5 L1240,614.3 L1241.5,614.4 L1243,623.9 L1244.5,636.1 L1246,634.2 L1247.5,632.3 L1249,593.8 L1250.5,548.4 L1252,548.3 L1253.5,548.5 L1255,554.6 L1256.5,557.9 L1258,558.2 L1259.5,558.3 L1261,558.5 L1262.5,585.7 L1264,578.5 L1265.5,569 L1267,569 L1268.5,569 L1270,569.2 L1271.5,608.5 L1273,620.9 L1274.5,620.8 L1276,620.9 L1277.5,609.9 L1279,593.1 L1280.5,593.2 L1282,593.3 L1283.5,594.7 L1285,608 L1286.5,621.5 L1288,635 L1289.5,623.3 L1291,602.2 L1292.5,585.2 L1294,585.1 L1295.5,585.2 L1297,585.4 L1298.5,589.5 L1300,602.5 L1301.5,611.9 L1303,611.9 L1304.5,612 L1306,617.2 L1307.5,624.2 L1309,630.6 L1310.5,631.6 L1312,622.6 L1313.5,619.5 L1315,619.6 L1316.5,619.6 L1318,619.6 L1319.5,615.8 L1321,613.3 L1322.5,615.1 L1324,613.4 L1325.5,567.8 L1327,568.3 L1328.5,569 L1330,569.9 L1331.5,570.4 L1333,601.9 L1334.5,601.9 L1336,612.4 L1337.5,635.5 L1339,637.1 L1340.5,632.5 L1342,635.7 L1343.5,638.3 L1345,639 L1346.5,612.7 L1348,581.7 L1349.5,556.4 L1351,556.2 L1352.5,556 L1354,561.6 L1355.5,607.8 L1357,620.8 L1358.5,631.9 L1360,639.4 L1361.5,638.7 L1363,591.8 L1364.5,583 L1366,583.3 L1367.5,583.5" fill="none" stroke="#E0B400" stroke-width="1" stroke-linejoin="round"/>
<path d="M1088.5,666.6 L1090,666.8 L1091.5,666.7 L1093,666.5 L1094.5,666 L1096,666.2 L1097.5,666.7 L1099,666.2 L1100.5,665.9 L1102,665.8 L1103.5,665.9 L1105,665.9 L1106.5,666.2 L1108,666.3 L1109.5,666.1 L1111,666 L1112.5,666.1 L1114,665.9 L1115.5,665.7 L1117,665.6 L1118.5,665.4 L1120,665.2 L1121.5,665.3 L1123,665.2 L1124.5,665 L1126,665.2 L1127.5,665.8 L1129,665.7 L1130.5,665.7 L1132,665.9 L1133.5,665.9 L1135,665.7 L1136.5,665.7 L1138,665.6 L1139.5,665.4 L1141,665.4 L1142.5,665.5 L1144,665.7 L1145.5,665.8 L1147,665.6 L1148.5,665.4 L1150,665.3 L1151.5,665.2 L1153,665.2 L1154.5,665.7 L1156,665.7 L1157.5,665.6 L1159,665.2 L1160.5,665.1 L1162,665.2 L1163.5,665.3 L1165,665.4 L1166.5,665 L1168,664.7 L1169.5,664.6 L1171,664.6 L1172.5,664.5 L1174,664.6 L1175.5,664.8 L1177,665 L1178.5,663.9 L1180,662.7 L1181.5,661.5 L1183,660.5 L1184.5,661.2 L1186,662.3 L1187.5,663.4 L1189,664.1 L1190.5,664.4 L1192,664.4 L1193.5,664.5 L1195,664.6 L1196.5,664.9 L1198,665 L1199.5,665 L1201,665.1 L1202.5,665.3 L1204,665.1 L1205.5,664.8 L1207,664.6 L1208.5,664.5 L1210,664.6 L1211.5,664.6 L1213,664.7 L1214.5,664.9 L1216,665.1 L1217.5,665.2 L1219,664.9 L1220.5,664.7 L1222,664.9 L1223.5,664.6 L1225,664 L1226.5,663.8 L1228,663.6 L1229.5,663.1 L1231,662.8 L1232.5,662.5 L1234,663.2 L1235.5,664 L1237,664.8 L1238.5,665.1 L1240,664.8 L1241.5,665.3 L1243,665.5 L1244.5,665.2 L1246,665.3 L1247.5,665.5 L1249,662.8 L1250.5,659.9 L1252,660.3 L1253.5,660.6 L1255,660.8 L1256.5,660.5 L1258,660.5 L1259.5,660.9 L1261,661 L1262.5,661.2 L1264,661.9 L1265.5,662.5 L1267,663.1 L1268.5,663.7 L1270,663.9 L1271.5,664 L1273,664 L1274.5,663.6 L1276,663.6 L1277.5,663.8 L1279,663.3 L1280.5,663 L1282,662.8 L1283.5,662.6 L1285,662.4 L1286.5,662.7 L1288,662.9 L1289.5,662.6 L1291,662.8 L1292.5,663.1 L1294,662.8 L1295.5,662.6 L1297,662.5 L1298.5,662.4 L1300,662.6 L1301.5,662.8 L1303,663.1 L1304.5,663.4 L1306,663.8 L1307.5,664.2 L1309,664.3 L1310.5,664.5 L1312,664.6 L1313.5,664.4 L1315,664.3 L1316.5,663.7 L1318,663.4 L1319.5,663.3 L1321,663.1 L1322.5,662.8 L1324,662.5 L1325.5,662.9 L1327,663.3 L1328.5,663.6 L1330,663.7 L1331.5,664.3 L1333,664.9 L1334.5,665.4 L1336,664.7 L1337.5,663.9 L1339,663.2 L1340.5,662.6 L1342,662.1 L1343.5,661.8 L1345,661.6 L1346.5,660.7 L1348,661 L1349.5,661.8 L1351,662.4 L1352.5,663.1 L1354,663.7 L1355.5,664.5 L1357,665.4 L1358.5,664.9 L1360,664.2 L1361.5,664 L1363,663.6 L1364.5,663.2 L1366,662.7 L1367.5,662.3 L1367.5,682.5 L1088.5,682.5Z" fill="#56A64B" fill-opacity="0.017"/>
<path d="M1088.5,666.6 L1090,666.8 L1091.5,666.7 L1093,666.5 L1094.5,666 L1096,666.2 L1097.5,666.7 L1099,666.2 L1100.5,665.9 L1102,665.8 L1103.5,665.9 L1105,665.9 L1106.5,666.2 L1108,666.3 L1109.5,666.1 L1111,666 L1112.5,666.1 L1114,665.9 L1115.5,665.7 L1117,665.6 L1118.5,665.4 L1120,665.2 L1121.5,665.3 L1123,665.2 L1124.5,665 L1126,665.2 L1127.5,665.8 L1129,665.7 L1130.5,665.7 L1132,665.9 L1133.5,665.9 L1135,665.7 L1136.5,665.7 L1138,665.6 L1139.5,665.4 L1141,665.4 L1142.5,665.5 L1144,665.7 L1145.5,665.8 L1147,665.6 L1148.5,665.4 L1150,665.3 L1151.5,665.2 L1153,665.2 L1154.5,665.7 L1156,665.7 L1157.5,665.6 L1159,665.2 L1160.5,665.1 L1162,665.2 L1163.5,665.3 L1165,665.4 L1166.5,665 L1168,664.7 L1169.5,664.6 L1171,664.6 L1172.5,664.5 L1174,664.6 L1175.5,664.8 L1177,665 L1178.5,663.9 L1180,662.7 L1181.5,661.5 L1183,660.5 L1184.5,661.2 L1186,662.3 L1187.5,663.4 L1189,664.1 L1190.5,664.4 L1192,664.4 L1193.5,664.5 L1195,664.6 L1196.5,664.9 L1198,665 L1199.5,665 L1201,665.1 L1202.5,665.3 L1204,665.1 L1205.5,664.8 L1207,664.6 L1208.5,664.5 L1210,664.6 L1211.5,664.6 L1213,664.7 L1214.5,664.9 L1216,665.1 L1217.5,665.2 L1219,664.9 L1220.5,664.7 L1222,664.9 L1223.5,664.6 L1225,664 L1226.5,663.8 L1228,663.6 L1229.5,663.1 L1231,662.8 L1232.5,662.5 L1234,663.2 L1235.5,664 L1237,664.8 L1238.5,665.1 L1240,664.8 L1241.5,665.3 L1243,665.5 L1244.5,665.2 L1246,665.3 L1247.5,665.5 L1249,662.8 L1250.5,659.9 L1252,660.3 L1253.5,660.6 L1255,660.8 L1256.5,660.5 L1258,660.5 L1259.5,660.9 L1261,661 L1262.5,661.2 L1264,661.9 L1265.5,662.5 L1267,663.1 L1268.5,663.7 L1270,663.9 L1271.5,664 L1273,664 L1274.5,663.6 L1276,663.6 L1277.5,663.8 L1279,663.3 L1280.5,663 L1282,662.8 L1283.5,662.6 L1285,662.4 L1286.5,662.7 L1288,662.9 L1289.5,662.6 L1291,662.8 L1292.5,663.1 L1294,662.8 L1295.5,662.6 L1297,662.5 L1298.5,662.4 L1300,662.6 L1301.5,662.8 L1303,663.1 L1304.5,663.4 L1306,663.8 L1307.5,664.2 L1309,664.3 L1310.5,664.5 L1312,664.6 L1313.5,664.4 L1315,664.3 L1316.5,663.7 L1318,663.4 L1319.5,663.3 L1321,663.1 L1322.5,662.8 L1324,662.5 L1325.5,662.9 L1327,663.3 L1328.5,663.6 L1330,663.7 L1331.5,664.3 L1333,664.9 L1334.5,665.4 L1336,664.7 L1337.5,663.9 L1339,663.2 L1340.5,662.6 L1342,662.1 L1343.5,661.8 L1345,661.6 L1346.5,660.7 L1348,661 L1349.5,661.8 L1351,662.4 L1352.5,663.1 L1354,663.7 L1355.5,664.5 L1357,665.4 L1358.5,664.9 L1360,664.2 L1361.5,664 L1363,663.6 L1364.5,663.2 L1366,662.7 L1367.5,662.3" fill="none" stroke="#56A64B" stroke-width="1" stroke-linejoin="round"/>
<path d="M1088.5,682.5 H1367.5" stroke="#5794F2" stroke-width="1"/>
<rect x="1061.0" y="716.1" width="14" height="4" rx="2" fill="#56A64B"/>
<text x="1083.5" y="721.0" font-size="12" textLength="21.0" lengthAdjust="spacing">avg</text>
<rect x="1115.2" y="716.1" width="14" height="4" rx="2" fill="#E0B400"/>
<text x="1137.0" y="721.0" font-size="12" textLength="43.2" lengthAdjust="spacing">highest</text>
<rect x="1191.5" y="716.1" width="14" height="4" rx="2" fill="#5794F2"/>
<text x="1213.0" y="721.0" font-size="12" textLength="24.7" lengthAdjust="spacing">limit</text>
<rect x="16.5" y="782.5" width="335" height="257" rx="2" fill="#fff" stroke="#e1e3e5"/>
<text x="25.6" y="804.1" font-size="15" font-weight="500" textLength="136.6" lengthAdjust="spacing" stroke="#24292e" stroke-width="0.3">Receive bandwidth</text>
<path d="M72,864.5 H335 M72,900.5 H335 M72,936.5 H335 M103.7,831.5 V941.5 M169.4,831.5 V941.5 M235.2,831.5 V941.5 M300.9,831.5 V941.5" stroke="#e4e5e6" stroke-width="1" fill="none"/>
<text x="66.0" y="868.9" font-size="12" text-anchor="end" textLength="37.5" lengthAdjust="spacing">2 GB/s</text>
<text x="66.0" y="904.9" font-size="12" text-anchor="end" textLength="36.2" lengthAdjust="spacing">1 GB/s</text>
<text x="66.0" y="940.9" font-size="12" text-anchor="end" textLength="29.5" lengthAdjust="spacing">0 B/s</text>
<text x="103.7" y="956.0" font-size="12" text-anchor="middle">15:30</text>
<text x="169.4" y="956.0" font-size="12" text-anchor="middle">15:45</text>
<text x="235.2" y="956.0" font-size="12" text-anchor="middle">16:00</text>
<text x="300.9" y="956.0" font-size="12" text-anchor="middle">16:15</text>
<g class="c" fill="url(#g9)"><rect x="72" y="912.6" height="23.9"/><rect x="73" y="908.3" height="28.2"/><rect x="74" y="905.3" height="31.2"/><rect x="75" y="901.3" height="35.2"/><rect x="76" y="903.7" height="32.8"/><rect x="77" y="910.1" height="26.4"/><rect x="78" y="908" height="28.5"/><rect x="79" y="905.1" height="31.4"/><rect x="80" y="907.2" height="29.3"/><rect x="81" y="910.4" height="26.1"/><rect x="82" y="909" height="27.5"/><rect x="83" y="905.7" height="30.8"/><rect x="84" y="908.7" height="27.8"/><rect x="85" y="909.6" height="26.9"/><rect x="86" y="912.6" height="23.9"/><rect x="87" y="912.3" height="24.2"/><rect x="88" y="912.3" height="24.2"/><rect x="89" y="913" height="23.5"/><rect x="90" y="910.3" height="26.2"/><rect x="91" y="917.7" height="18.8"/><rect x="92" y="920.3" height="16.2"/><rect x="93" y="919.9" height="16.6"/><rect x="94" y="916.4" height="20.1"/><rect x="95" y="916.9" height="19.6"/><rect x="96" y="919.9" height="16.6"/><rect x="97" y="920.4" height="16.1"/><rect x="98" y="919.7" height="16.8"/><rect x="99" y="916.4" height="20.1"/><rect x="100" y="918" height="18.5"/><rect x="101" y="920.3" height="16.2"/><rect x="102" y="920.4" height="16.1"/><rect x="103" y="919" height="17.5"/><rect x="104" y="912.1" height="24.4"/><rect x="105" y="918.4" height="18.1"/><rect x="106" y="920.5" height="16"/><rect x="107" y="920.2" height="16.3"/><rect x="108" y="916.8" height="19.7"/><rect x="109" y="917" height="19.5"/><rect x="110" y="919.9" height="16.6"/><rect x="111" y="920.6" height="15.9"/><rect x="112" y="920.1" height="16.4"/><rect x="113" y="917.4" height="19.1"/><rect x="114" y="916.7" height="19.8"/><rect x="115" y="920.2" height="16.3"/><rect x="116" y="920.6" height="15.9"/><rect x="117" y="918.9" height="17.6"/><rect x="118" y="913.2" height="23.3"/><rect x="119" y="919.2" height="17.3"/><rect x="120" y="920.6" height="15.9"/><rect x="121" y="920.6" height="15.9"/><rect x="122" y="918.8" height="17.7"/><rect x="123" y="915.8" height="20.7"/><rect x="124" y="919.8" height="16.7"/><rect x="125" y="920.8" height="15.7"/><rect x="126" y="920.3" height="16.2"/><rect x="127" y="917.3" height="19.2"/><rect x="128" y="917.1" height="19.4"/><rect x="129" y="920.3" height="16.2"/><rect x="130" y="920.8" height="15.7"/><rect x="131" y="919.7" height="16.8"/><rect x="132" y="915.3" height="21.2"/><rect x="133" y="917.7" height="18.8"/><rect x="134" y="920.7" height="15.8"/><rect x="135" y="920.8" height="15.7"/><rect x="136" y="918.1" height="18.4"/><rect x="137" y="914.1" height="22.4"/><rect x="138" y="919.4" height="17.1"/><rect x="139" y="920.9" height="15.6"/><rect x="140" y="920.5" height="16"/><rect x="141" y="917.1" height="19.4"/><rect x="142" y="915.8" height="20.7"/><rect x="143" y="920.2" height="16.3"/><rect x="144" y="921" height="15.5"/><rect x="145" y="919.9" height="16.6"/><rect x="146" y="915" height="21.5"/><rect x="147" y="918.7" height="17.8"/><rect x="148" y="920.9" height="15.6"/><rect x="149" y="921" height="15.5"/><rect x="150" y="919.6" height="16.9"/><rect x="151" y="915.6" height="20.9"/><rect x="152" y="919.7" height="16.8"/><rect x="153" y="921.1" height="15.4"/><rect x="154" y="920.9" height="15.6"/><rect x="155" y="918.6" height="17.9"/><rect x="156" y="915.1" height="21.4"/><rect x="157" y="920" height="16.5"/><rect x="158" y="921.1" height="15.4"/><rect x="159" y="920.2" height="16.3"/><rect x="160" y="915.6" height="20.9"/><rect x="161" y="917.8" height="18.7"/><rect x="162" y="920.7" height="15.8"/><rect x="163" y="921.1" height="15.4"/><rect x="164" y="919.6" height="16.9"/><rect x="165" y="914.8" height="21.7"/><rect x="166" y="918.8" height="17.7"/><rect x="167" y="921" height="15.5"/><rect x="168" y="920.9" height="15.6"/><rect x="169" y="918.3" height="18.2"/><rect x="170" y="917.7" height="18.8"/><rect x="171" y="920.4" height="16.1"/><rect x="172" y="921.1" height="15.4"/><rect x="173" y="920.8" height="15.7"/><rect x="174" y="918.6" height="17.9"/><rect x="175" y="918.8" height="17.7"/><rect x="176" y="920.8" height="15.7"/><rect x="177" y="921.1" height="15.4"/><rect x="178" y="920.4" height="16.1"/><rect x="179" y="917.8" height="18.7"/><rect x="180" y="918.9" height="17.6"/><rect x="181" y="921" height="15.5"/><rect x="182" y="921" height="15.5"/><rect x="183" y="919.2" height="17.3"/><rect x="184" y="916.3" height="20.2"/><rect x="185" y="920" height="16.5"/><rect x="186" y="921.1" height="15.4"/><rect x="187" y="920.8" height="15.7"/><rect x="188" y="918.4" height="18.1"/><rect x="189" y="917.8" height="18.7"/><rect x="190" y="920.6" height="15.9"/><rect x="191" y="921.1" height="15.4"/><rect x="192" y="920.4" height="16.1"/><rect x="193" y="917.3" height="19.2"/><rect x="194" y="917.7" height="18.8"/><rect x="195" y="920.8" height="15.7"/><rect x="196" y="921" height="15.5"/><rect x="197" y="919" height="17.5"/><rect x="198" y="912.6" height="23.9"/><rect x="199" y="918.9" height="17.6"/><rect x="200" y="921" height="15.5"/><rect x="201" y="920.8" height="15.7"/><rect x="202" y="917.3" height="19.2"/><rect x="203" y="917.6" height="18.9"/><rect x="204" y="920.5" height="16"/><rect x="205" y="921.1" height="15.4"/><rect x="206" y="920.6" height="15.9"/><rect x="207" y="917.9" height="18.6"/><rect x="208" y="919" height="17.5"/><rect x="209" y="920.9" height="15.6"/><rect x="210" y="921.1" height="15.4"/><rect x="211" y="920.2" height="16.3"/><rect x="212" y="917.2" height="19.3"/><rect x="213" y="919.7" height="16.8"/><rect x="214" y="921" height="15.5"/><rect x="215" y="921" height="15.5"/><rect x="216" y="919.3" height="17.2"/><rect x="217" y="917.3" height="19.2"/><rect x="218" y="920.3" height="16.2"/><rect x="219" y="921.1" height="15.4"/><rect x="220" y="920.7" height="15.8"/><rect x="221" y="918.4" height="18.1"/><rect x="222" y="916.8" height="19.7"/><rect x="223" y="920.5" height="16"/><rect x="224" y="921.1" height="15.4"/><rect x="225" y="919.8" height="16.7"/><rect x="226" y="914.8" height="21.7"/><rect x="227" y="919" height="17.5"/><rect x="228" y="921" height="15.5"/><rect x="229" y="921" height="15.5"/><rect x="230" y="919" height="17.5"/><rect x="231" y="912.4" height="24.1"/><rect x="232" y="918.2" height="18.3"/><rect x="233" y="919.5" height="17"/><rect x="234" y="918.6" height="17.9"/><rect x="235" y="914.1" height="22.4"/><rect x="236" y="914.9" height="21.6"/><rect x="237" y="914.6" height="21.9"/><rect x="238" y="912.7" height="23.8"/><rect x="239" y="909.9" height="26.6"/><rect x="240" y="907.3" height="29.2"/><rect x="241" y="908.8" height="27.7"/><rect x="242" y="912.9" height="23.6"/><rect x="243" y="914.3" height="22.2"/><rect x="244" y="913.7" height="22.8"/><rect x="245" y="912.1" height="24.4"/><rect x="246" y="915" height="21.5"/><rect x="247" y="914.6" height="21.9"/><rect x="248" y="912.9" height="23.6"/><rect x="249" y="909.7" height="26.8"/><rect x="250" y="904.1" height="32.4"/><rect x="251" y="907.5" height="29"/><rect x="252" y="908.9" height="27.6"/><rect x="253" y="910.3" height="26.2"/><rect x="254" y="908.1" height="28.4"/><rect x="255" y="912.5" height="24"/><rect x="256" y="916.3" height="20.2"/><rect x="257" y="917.8" height="18.7"/><rect x="258" y="917.9" height="18.6"/><rect x="259" y="915.2" height="21.3"/><rect x="260" y="919.6" height="16.9"/><rect x="261" y="921" height="15.5"/><rect x="262" y="920.9" height="15.6"/><rect x="263" y="919.2" height="17.3"/><rect x="264" y="915.5" height="21"/><rect x="265" y="919.9" height="16.6"/><rect x="266" y="921" height="15.5"/><rect x="267" y="920.4" height="16.1"/><rect x="268" y="917" height="19.5"/><rect x="269" y="916.2" height="20.3"/><rect x="270" y="920.3" height="16.2"/><rect x="271" y="920.9" height="15.6"/><rect x="272" y="919.4" height="17.1"/><rect x="273" y="913.9" height="22.6"/><rect x="274" y="919.5" height="17"/><rect x="275" y="920.7" height="15.8"/><rect x="276" y="920.7" height="15.8"/><rect x="277" y="919.6" height="16.9"/><rect x="278" y="916.3" height="20.2"/><rect x="279" y="919.7" height="16.8"/><rect x="280" y="920.7" height="15.8"/><rect x="281" y="920.5" height="16"/><rect x="282" y="918.2" height="18.3"/><rect x="283" y="915.3" height="21.2"/><rect x="284" y="919.9" height="16.6"/><rect x="285" y="920.8" height="15.7"/><rect x="286" y="919.6" height="16.9"/><rect x="287" y="914.5" height="22"/><rect x="288" y="918.3" height="18.2"/><rect x="289" y="920.6" height="15.9"/><rect x="290" y="920.8" height="15.7"/><rect x="291" y="919.3" height="17.2"/><rect x="292" y="916.7" height="19.8"/><rect x="293" y="919.8" height="16.7"/><rect x="294" y="920.9" height="15.6"/><rect x="295" y="920.8" height="15.7"/><rect x="296" y="919.1" height="17.4"/><rect x="297" y="914.7" height="21.8"/><rect x="298" y="919.9" height="16.6"/><rect x="299" y="921" height="15.5"/><rect x="300" y="920.1" height="16.4"/><rect x="301" y="915.3" height="21.2"/><rect x="302" y="916.7" height="19.8"/><rect x="303" y="920.6" height="15.9"/><rect x="304" y="921" height="15.5"/><rect x="305" y="919.2" height="17.3"/><rect x="306" y="913" height="23.5"/><rect x="307" y="919.3" height="17.2"/><rect x="308" y="921" height="15.5"/><rect x="309" y="921" height="15.5"/><rect x="310" y="918.9" height="17.6"/><rect x="311" y="917.3" height="19.2"/><rect x="312" y="920.4" height="16.1"/><rect x="313" y="921.2" height="15.3"/><rect x="314" y="920.8" height="15.7"/><rect x="315" y="918.4" height="18.1"/><rect x="316" y="919.1" height="17.4"/><rect x="317" y="921" height="15.5"/><rect x="318" y="921.2" height="15.3"/><rect x="319" y="920.6" height="15.9"/><rect x="320" y="918.1" height="18.4"/><rect x="321" y="918.5" height="18"/><rect x="322" y="921.1" height="15.4"/><rect x="323" y="921.2" height="15.3"/><rect x="324" y="918.9" height="17.6"/><rect x="325" y="914.4" height="22.1"/><rect x="326" y="919.8" height="16.7"/><rect x="327" y="921.4" height="15.1"/><rect x="328" y="920.9" height="15.6"/><rect x="329" y="917.4" height="19.1"/><rect x="330" y="916.5" height="20"/><rect x="331" y="920.7" height="15.8"/><rect x="332" y="921.4" height="15.1"/><rect x="333" y="920.4" height="16.1"/><rect x="334" y="915.8" height="20.7"/></g>
<g class="c" fill="url(#g10)"><rect x="72" y="873.7" height="38.9"/><rect x="73" y="862.4" height="45.9"/><rect x="74" y="854.3" height="51"/><rect x="75" y="843.9" height="57.4"/><rect x="76" y="850.3" height="53.5"/><rect x="77" y="867" height="43.1"/><rect x="78" y="861.5" height="46.5"/><rect x="79" y="853.8" height="51.3"/><rect x="80" y="859.3" height="47.9"/><rect x="81" y="867.9" height="42.5"/><rect x="82" y="864.1" height="44.9"/><rect x="83" y="855.5" height="50.2"/><rect x="84" y="863.4" height="45.3"/><rect x="85" y="865.8" height="43.8"/><rect x="86" y="873.7" height="38.9"/><rect x="87" y="872.7" height="39.5"/><rect x="88" y="872.9" height="39.4"/><rect x="89" y="874.6" height="38.4"/><rect x="90" y="867.6" height="42.7"/><rect x="91" y="887.1" height="30.6"/><rect x="92" y="893.9" height="26.4"/><rect x="93" y="892.8" height="27.1"/><rect x="94" y="883.5" height="32.9"/><rect x="95" y="884.9" height="32"/><rect x="96" y="892.7" height="27.2"/><rect x="97" y="894.1" height="26.3"/><rect x="98" y="892.2" height="27.5"/><rect x="99" y="883.5" height="32.8"/><rect x="100" y="887.9" height="30.2"/><rect x="101" y="893.8" height="26.5"/><rect x="102" y="894.2" height="26.2"/><rect x="103" y="890.3" height="28.6"/><rect x="104" y="872.3" height="39.8"/><rect x="105" y="888.8" height="29.6"/><rect x="106" y="894.3" height="26.2"/><rect x="107" y="893.6" height="26.6"/><rect x="108" y="884.7" height="32.1"/><rect x="109" y="885.2" height="31.8"/><rect x="110" y="892.9" height="27"/><rect x="111" y="894.6" height="26"/><rect x="112" y="893.3" height="26.8"/><rect x="113" y="886.1" height="31.2"/><rect x="114" y="884.3" height="32.4"/><rect x="115" y="893.7" height="26.5"/><rect x="116" y="894.7" height="25.9"/><rect x="117" y="890.2" height="28.7"/><rect x="118" y="875.3" height="38"/><rect x="119" y="890.9" height="28.3"/><rect x="120" y="894.8" height="25.9"/><rect x="121" y="894.6" height="25.9"/><rect x="122" y="890" height="28.8"/><rect x="123" y="882.1" height="33.7"/><rect x="124" y="892.4" height="27.3"/><rect x="125" y="895.1" height="25.7"/><rect x="126" y="893.9" height="26.4"/><rect x="127" y="885.8" height="31.4"/><rect x="128" y="885.3" height="31.7"/><rect x="129" y="894" height="26.4"/><rect x="130" y="895.3" height="25.6"/><rect x="131" y="892.3" height="27.4"/><rect x="132" y="880.8" height="34.5"/><rect x="133" y="887" height="30.7"/><rect x="134" y="894.9" height="25.8"/><rect x="135" y="895.1" height="25.7"/><rect x="136" y="888.1" height="30"/><rect x="137" y="877.6" height="36.5"/><rect x="138" y="891.5" height="27.9"/><rect x="139" y="895.5" height="25.4"/><rect x="140" y="894.5" height="26"/><rect x="141" y="885.5" height="31.6"/><rect x="142" y="881.9" height="33.8"/><rect x="143" y="893.6" height="26.6"/><rect x="144" y="895.8" height="25.3"/><rect x="145" y="892.8" height="27.1"/><rect x="146" y="879.8" height="35.1"/><rect x="147" y="889.7" height="29"/><rect x="148" y="895.4" height="25.5"/><rect x="149" y="895.8" height="25.2"/><rect x="150" y="892.1" height="27.5"/><rect x="151" y="881.5" height="34.1"/><rect x="152" y="892.3" height="27.4"/><rect x="153" y="895.9" height="25.2"/><rect x="154" y="895.4" height="25.5"/><rect x="155" y="889.5" height="29.1"/><rect x="156" y="880.1" height="34.9"/><rect x="157" y="893.1" height="26.9"/><rect x="158" y="895.9" height="25.1"/><rect x="159" y="893.6" height="26.6"/><rect x="160" y="881.4" height="34.1"/><rect x="161" y="887.2" height="30.6"/><rect x="162" y="895" height="25.7"/><rect x="163" y="895.9" height="25.2"/><rect x="164" y="892.1" height="27.6"/><rect x="165" y="879.5" height="35.4"/><rect x="166" y="889.9" height="28.9"/><rect x="167" y="895.7" height="25.3"/><rect x="168" y="895.5" height="25.4"/><rect x="169" y="888.5" height="29.8"/><rect x="170" y="887" height="30.7"/><rect x="171" y="894.1" height="26.3"/><rect x="172" y="895.9" height="25.1"/><rect x="173" y="895.1" height="25.7"/><rect x="174" y="889.5" height="29.1"/><rect x="175" y="890" height="28.8"/><rect x="176" y="895.2" height="25.6"/><rect x="177" y="895.9" height="25.1"/><rect x="178" y="894.1" height="26.3"/><rect x="179" y="887.2" height="30.6"/><rect x="180" y="890.3" height="28.7"/><rect x="181" y="895.6" height="25.3"/><rect x="182" y="895.7" height="25.3"/><rect x="183" y="891" height="28.2"/><rect x="184" y="883.4" height="32.9"/><rect x="185" y="893.1" height="26.9"/><rect x="186" y="895.9" height="25.2"/><rect x="187" y="895.2" height="25.6"/><rect x="188" y="888.8" height="29.6"/><rect x="189" y="887.4" height="30.5"/><rect x="190" y="894.6" height="26"/><rect x="191" y="895.9" height="25.1"/><rect x="192" y="894.1" height="26.3"/><rect x="193" y="886" height="31.3"/><rect x="194" y="887" height="30.7"/><rect x="195" y="895.2" height="25.6"/><rect x="196" y="895.8" height="25.2"/><rect x="197" y="890.3" height="28.6"/><rect x="198" y="873.6" height="39"/><rect x="199" y="890.3" height="28.7"/><rect x="200" y="895.8" height="25.2"/><rect x="201" y="895.1" height="25.7"/><rect x="202" y="886" height="31.3"/><rect x="203" y="886.7" height="30.9"/><rect x="204" y="894.3" height="26.2"/><rect x="205" y="895.9" height="25.1"/><rect x="206" y="894.6" height="26"/><rect x="207" y="887.5" height="30.4"/><rect x="208" y="890.5" height="28.5"/><rect x="209" y="895.4" height="25.5"/><rect x="210" y="895.9" height="25.2"/><rect x="211" y="893.5" height="26.6"/><rect x="212" y="885.7" height="31.5"/><rect x="213" y="892.2" height="27.5"/><rect x="214" y="895.8" height="25.2"/><rect x="215" y="895.7" height="25.3"/><rect x="216" y="891.3" height="28"/><rect x="217" y="886" height="31.3"/><rect x="218" y="893.9" height="26.4"/><rect x="219" y="895.9" height="25.1"/><rect x="220" y="895" height="25.7"/><rect x="221" y="888.8" height="29.6"/><rect x="222" y="884.8" height="32.1"/><rect x="223" y="894.5" height="26"/><rect x="224" y="895.9" height="25.2"/><rect x="225" y="892.5" height="27.3"/><rect x="226" y="879.4" height="35.4"/><rect x="227" y="890.5" height="28.5"/><rect x="228" y="895.6" height="25.3"/><rect x="229" y="895.7" height="25.3"/><rect x="230" y="890.6" height="28.5"/><rect x="231" y="873.2" height="39.2"/><rect x="232" y="888.2" height="29.9"/><rect x="233" y="891.8" height="27.7"/><rect x="234" y="889.4" height="29.2"/><rect x="235" y="877.6" height="36.5"/><rect x="236" y="879.6" height="35.3"/><rect x="237" y="879" height="35.7"/><rect x="238" y="873.9" height="38.8"/><rect x="239" y="866.6" height="43.3"/><rect x="240" y="859.6" height="47.7"/><rect x="241" y="863.7" height="45.2"/><rect x="242" y="874.4" height="38.5"/><rect x="243" y="878.2" height="36.2"/><rect x="244" y="876.4" height="37.3"/><rect x="245" y="872.2" height="39.9"/><rect x="246" y="880" height="35"/><rect x="247" y="878.9" height="35.7"/><rect x="248" y="874.5" height="38.4"/><rect x="249" y="865.9" height="43.8"/><rect x="250" y="851.3" height="52.8"/><rect x="251" y="860.2" height="47.3"/><rect x="252" y="863.9" height="45"/><rect x="253" y="867.7" height="42.7"/><rect x="254" y="861.6" height="46.4"/><rect x="255" y="873.3" height="39.2"/><rect x="256" y="883.3" height="33"/><rect x="257" y="887.4" height="30.4"/><rect x="258" y="887.6" height="30.3"/><rect x="259" y="880.4" height="34.8"/><rect x="260" y="892" height="27.6"/><rect x="261" y="895.7" height="25.3"/><rect x="262" y="895.5" height="25.4"/><rect x="263" y="890.8" height="28.3"/><rect x="264" y="881.3" height="34.2"/><rect x="265" y="892.7" height="27.1"/><rect x="266" y="895.6" height="25.3"/><rect x="267" y="894.2" height="26.2"/><rect x="268" y="885.1" height="31.9"/><rect x="269" y="883.1" height="33.1"/><rect x="270" y="893.8" height="26.4"/><rect x="271" y="895.4" height="25.5"/><rect x="272" y="891.5" height="27.9"/><rect x="273" y="877" height="36.9"/><rect x="274" y="891.7" height="27.8"/><rect x="275" y="895" height="25.8"/><rect x="276" y="895" height="25.7"/><rect x="277" y="891.9" height="27.6"/><rect x="278" y="883.5" height="32.9"/><rect x="279" y="892.3" height="27.4"/><rect x="280" y="894.9" height="25.8"/><rect x="281" y="894.3" height="26.2"/><rect x="282" y="888.5" height="29.8"/><rect x="283" y="880.7" height="34.6"/><rect x="284" y="892.9" height="27"/><rect x="285" y="895.1" height="25.6"/><rect x="286" y="892.1" height="27.5"/><rect x="287" y="878.6" height="35.9"/><rect x="288" y="888.7" height="29.7"/><rect x="289" y="894.8" height="25.9"/><rect x="290" y="895.2" height="25.6"/><rect x="291" y="891.2" height="28.1"/><rect x="292" y="884.5" height="32.2"/><rect x="293" y="892.7" height="27.2"/><rect x="294" y="895.4" height="25.5"/><rect x="295" y="895.1" height="25.7"/><rect x="296" y="890.7" height="28.4"/><rect x="297" y="879.1" height="35.6"/><rect x="298" y="892.7" height="27.2"/><rect x="299" y="895.7" height="25.3"/><rect x="300" y="893.3" height="26.8"/><rect x="301" y="880.7" height="34.6"/><rect x="302" y="884.5" height="32.3"/><rect x="303" y="894.6" height="26"/><rect x="304" y="895.8" height="25.3"/><rect x="305" y="890.9" height="28.3"/><rect x="306" y="874.7" height="38.3"/><rect x="307" y="891.2" height="28.1"/><rect x="308" y="895.8" height="25.2"/><rect x="309" y="895.6" height="25.3"/><rect x="310" y="890.1" height="28.7"/><rect x="311" y="886.1" height="31.3"/><rect x="312" y="894.1" height="26.3"/><rect x="313" y="896.2" height="25"/><rect x="314" y="895.2" height="25.6"/><rect x="315" y="889" height="29.5"/><rect x="316" y="890.6" height="28.4"/><rect x="317" y="895.6" height="25.4"/><rect x="318" y="896.3" height="24.9"/><rect x="319" y="894.6" height="26"/><rect x="320" y="888.1" height="30"/><rect x="321" y="889.2" height="29.3"/><rect x="322" y="896.1" height="25.1"/><rect x="323" y="896.2" height="25"/><rect x="324" y="890.2" height="28.7"/><rect x="325" y="878.2" height="36.1"/><rect x="326" y="892.4" height="27.3"/><rect x="327" y="896.6" height="24.7"/><rect x="328" y="895.6" height="25.4"/><rect x="329" y="886.3" height="31.1"/><rect x="330" y="883.9" height="32.6"/><rect x="331" y="894.9" height="25.8"/><rect x="332" y="896.9" height="24.6"/><rect x="333" y="894.1" height="26.3"/><rect x="334" y="882" height="33.8"/></g>
<path d="M72,911.9 L72.7,909.3 L73.4,905.9 L74.1,903.4 L74.8,900.8 L75.5,897.6 L76.2,899.2 L76.9,903.3 L77.6,907.2 L78.3,905.6 L79,903.5 L79.7,902.4 L80.4,903.9 L81.1,904.4 L81.8,907.5 L82.5,906.1 L83.2,903.7 L83.9,904 L84.6,906 L85.3,906.8 L86,909.4 L86.7,910.2 L87.4,909.9 L88.1,909 L88.8,910.3 L89.5,910.5 L90.2,906.4 L90.9,911.3 L91.6,916.3 L92.3,918.5 L93,918.6 L93.7,917.7 L94.4,914.8 L95.1,912.7 L95.8,916.1 L96.5,918.1 L97.2,918.7 L97.9,918.6 L98.6,917.7 L99.3,915.2 L100,913.6 L100.7,916.8 L101.4,918.4 L102.1,918.8 L102.8,918.5 L103.5,917.1 L104.2,914.1 L104.9,912.8 L105.6,916.9 L106.3,918.6 L107,918.8 L107.7,918.1 L108.4,915.3 L109.1,910.2 L109.8,916.2 L110.5,918.2 L111.2,918.9 L111.9,918.9 L112.6,918.2 L113.3,916.2 L114,910.9 L114.7,915.7 L115.4,918.3 L116.1,919 L116.8,918.8 L117.5,917.1 L118.2,913.1 L118.9,915 L119.6,917.6 L120.3,918.9 L121,919 L121.7,918.8 L122.4,917.3 L123.1,914.5 L123.8,915.3 L124.5,918 L125.2,919 L125.9,919.1 L126.6,918.4 L127.3,916.2 L128,911.9 L128.7,916 L129.4,918.5 L130.1,919.2 L130.8,919.1 L131.5,917.9 L132.2,914.9 L132.9,911.4 L133.6,916.3 L134.3,918.7 L135,919.3 L135.7,918.9 L136.4,916.7 L137.1,912 L137.8,913.9 L138.5,917.6 L139.2,919.1 L139.9,919.3 L140.6,918.7 L141.3,916.2 L142,911.6 L142.7,914.9 L143.4,918.2 L144.1,919.3 L144.8,919.3 L145.5,918.2 L146.2,914.8 L146.9,913.9 L147.6,917.2 L148.3,919 L149,919.5 L149.7,919.3 L150.4,918.1 L151.1,915.4 L151.8,915 L152.5,917.9 L153.2,919.3 L153.9,919.5 L154.6,919.1 L155.3,917.5 L156,914.4 L156.7,914.3 L157.4,918 L158.1,919.4 L158.8,919.4 L159.5,918.5 L160.2,915.4 L160.9,912 L161.6,916.3 L162.3,918.7 L163,919.5 L163.7,919.4 L164.4,918.2 L165.1,915.1 L165.8,912.8 L166.5,916.9 L167.2,919 L167.9,919.5 L168.6,919.2 L169.3,917.3 L170,913.3 L170.7,916.5 L171.4,918.5 L172.1,919.4 L172.8,919.5 L173.5,919.1 L174.2,917.7 L174.9,915.2 L175.6,917.3 L176.3,918.9 L177,919.4 L177.7,919.4 L178.4,918.9 L179.1,917.2 L179.8,913.6 L180.5,917.1 L181.2,919 L181.9,919.5 L182.6,919.3 L183.3,918 L184,915.1 L184.7,915.2 L185.4,918 L186.1,919.3 L186.8,919.5 L187.5,919.1 L188.2,917.6 L188.9,914.6 L189.6,916.3 L190.3,918.5 L191,919.4 L191.7,919.5 L192.4,918.9 L193.1,917 L193.8,910.7 L194.5,915.7 L195.2,918.6 L195.9,919.4 L196.6,919.3 L197.3,917.9 L198,914.3 L198.7,911.8 L199.4,916.6 L200.1,919 L200.8,919.5 L201.5,919.1 L202.2,916.9 L202.9,912.4 L203.6,916 L204.3,918.4 L205,919.4 L205.7,919.5 L206.4,919 L207.1,917.4 L207.8,914.5 L208.5,917.2 L209.2,918.9 L209.9,919.4 L210.6,919.4 L211.3,918.8 L212,917.1 L212.7,914.8 L213.4,917.6 L214.1,919.1 L214.8,919.5 L215.5,919.3 L216.2,918.3 L216.9,916 L217.6,915.8 L218.3,918.2 L219,919.3 L219.7,919.5 L220.4,919.2 L221.1,917.8 L221.8,915.2 L222.5,914.8 L223.2,918.1 L223.9,919.4 L224.6,919.4 L225.3,918.6 L226,915.8 L226.7,913.2 L227.4,916.8 L228.1,918.9 L228.8,919.5 L229.5,919.4 L230.2,918.3 L230.9,915.3 L231.6,910.7 L232.3,915.4 L233,917.5 L233.7,917.7 L234.4,916.9 L235.1,914.4 L235.8,909.3 L236.5,912.6 L237.2,912.6 L237.9,911.7 L238.6,910 L239.3,907.9 L240,904.9 L240.7,903.8 L241.4,905.3 L242.1,909.1 L242.8,911.1 L243.5,912 L244.2,911.8 L244.9,909.9 L245.6,910.1 L246.3,912.6 L247,912.8 L247.7,912 L248.4,910.7 L249.1,908.6 L249.8,905.3 L250.5,900.7 L251.2,903.8 L251.9,904.6 L252.6,906.3 L253.3,907.5 L254,906.9 L254.7,904 L255.4,909.3 L256.1,912.9 L256.8,914.8 L257.5,915.9 L258.2,916.2 L258.9,915.1 L259.6,913.5 L260.3,917.1 L261,918.9 L261.7,919.4 L262.4,919.3 L263.1,918.4 L263.8,916.2 L264.5,913.3 L265.2,917.1 L265.9,919 L266.6,919.3 L267.3,919 L268,917.3 L268.7,913.7 L269.4,913.4 L270.1,917.4 L270.8,919 L271.5,919.2 L272.2,918.5 L272.9,915.7 L273.6,910.7 L274.3,917.1 L275,918.6 L275.7,919.1 L276.4,919.1 L277.1,918.5 L277.8,917 L278.5,914.2 L279.2,917.1 L279.9,918.7 L280.6,919.1 L281.3,918.9 L282,917.9 L282.7,915.5 L283.4,912.3 L284.1,916.7 L284.8,918.8 L285.5,919.1 L286.2,918.6 L286.9,916.2 L287.6,911.4 L288.3,915.5 L289,918.1 L289.7,919.1 L290.4,919.2 L291.1,918.5 L291.8,916.3 L292.5,914.7 L293.2,917.3 L293.9,918.8 L294.6,919.3 L295.3,919.2 L296,918.5 L296.7,916.6 L297.4,911.6 L298.1,916.4 L298.8,918.9 L299.5,919.3 L300.2,919 L300.9,916.8 L301.6,912.3 L302.3,913.2 L303,917.4 L303.7,919.2 L304.4,919.4 L305.1,918.7 L305.8,915.8 L306.5,910.6 L307.2,916.2 L307.9,918.6 L308.6,919.4 L309.3,919.4 L310,918.6 L310.7,916.2 L311.4,914.9 L312.1,917.7 L312.8,919.2 L313.5,919.6 L314.2,919.4 L314.9,918.4 L315.6,916.1 L316.3,916.6 L317,918.6 L317.7,919.5 L318.4,919.6 L319.1,919.4 L319.8,918.3 L320.5,916.2 L321.2,914.9 L321.9,918.3 L322.6,919.6 L323.3,919.7 L324,918.8 L324.7,916 L325.4,911.2 L326.1,916.1 L326.8,918.9 L327.5,919.8 L328.2,919.7 L328.9,918.3 L329.6,914.8 L330.3,913 L331,917.3 L331.7,919.4 L332.4,919.8 L333.1,919.5 L333.8,917.6 L334.5,913.6" fill="none" stroke="#a89ea0" stroke-width="1.2"/>
<path d="M72,907.3 L72.7,904.1 L73.4,900.1 L74.1,897.1 L74.8,894 L75.5,890.2 L76.2,892.1 L76.9,897 L77.6,901.6 L78.3,899.7 L79,897.2 L79.7,895.9 L80.4,897.7 L81.1,898.3 L81.8,902 L82.5,900.3 L83.2,897.4 L83.9,897.8 L84.6,900.2 L85.3,901.1 L86,904.2 L86.7,905.2 L87.4,904.8 L88.1,903.7 L88.8,905.3 L89.5,905.5 L90.2,900.7 L90.9,906.5 L91.6,912.5 L92.3,915.1 L93,915.2 L93.7,914.2 L94.4,910.7 L95.1,908.2 L95.8,912.3 L96.5,914.6 L97.2,915.3 L97.9,915.2 L98.6,914.1 L99.3,911.2 L100,909.3 L100.7,913.1 L101.4,915 L102.1,915.4 L102.8,915.1 L103.5,913.4 L104.2,909.8 L104.9,908.3 L105.6,913.2 L106.3,915.2 L107,915.5 L107.7,914.6 L108.4,911.3 L109.1,905.2 L109.8,912.3 L110.5,914.7 L111.2,915.5 L111.9,915.5 L112.6,914.7 L113.3,912.3 L114,906.1 L114.7,911.8 L115.4,914.9 L116.1,915.6 L116.8,915.4 L117.5,913.4 L118.2,908.6 L118.9,911 L119.6,914 L120.3,915.5 L121,915.7 L121.7,915.4 L122.4,913.7 L123.1,910.3 L123.8,911.3 L124.5,914.5 L125.2,915.7 L125.9,915.8 L126.6,915 L127.3,912.3 L128,907.2 L128.7,912.2 L129.4,915 L130.1,915.9 L130.8,915.8 L131.5,914.4 L132.2,910.8 L132.9,906.6 L133.6,912.4 L134.3,915.4 L135,916 L135.7,915.5 L136.4,912.9 L137.1,907.4 L137.8,909.6 L138.5,914 L139.2,915.8 L139.9,916 L140.6,915.3 L141.3,912.3 L142,906.9 L142.7,910.8 L143.4,914.7 L144.1,916.1 L144.8,916.1 L145.5,914.7 L146.2,910.7 L146.9,909.6 L147.6,913.6 L148.3,915.7 L149,916.2 L149.7,916 L150.4,914.6 L151.1,911.4 L151.8,911 L152.5,914.4 L153.2,916 L153.9,916.2 L154.6,915.8 L155.3,913.9 L156,910.2 L156.7,910.1 L157.4,914.4 L158.1,916.1 L158.8,916.2 L159.5,915.1 L160.2,911.4 L160.9,907.4 L161.6,912.4 L162.3,915.4 L163,916.2 L163.7,916.1 L164.4,914.7 L165.1,911 L165.8,908.2 L166.5,913.2 L167.2,915.7 L167.9,916.2 L168.6,915.8 L169.3,913.6 L170,908.9 L170.7,912.7 L171.4,915.1 L172.1,916.1 L172.8,916.2 L173.5,915.8 L174.2,914.1 L174.9,911.1 L175.6,913.6 L176.3,915.5 L177,916.2 L177.7,916.2 L178.4,915.5 L179.1,913.5 L179.8,909.2 L180.5,913.4 L181.2,915.7 L181.9,916.2 L182.6,916 L183.3,914.5 L184,911 L184.7,911.2 L185.4,914.5 L186.1,916 L186.8,916.2 L187.5,915.8 L188.2,914 L188.9,910.4 L189.6,912.4 L190.3,915.1 L191,916.1 L191.7,916.2 L192.4,915.5 L193.1,913.3 L193.8,905.8 L194.5,911.7 L195.2,915.2 L195.9,916.2 L196.6,916.1 L197.3,914.4 L198,910 L198.7,907.1 L199.4,912.8 L200.1,915.7 L200.8,916.2 L201.5,915.8 L202.2,913.2 L202.9,907.8 L203.6,912.1 L204.3,914.9 L205,916.1 L205.7,916.2 L206.4,915.7 L207.1,913.8 L207.8,910.3 L208.5,913.5 L209.2,915.5 L209.9,916.2 L210.6,916.2 L211.3,915.5 L212,913.4 L212.7,910.7 L213.4,914 L214.1,915.8 L214.8,916.2 L215.5,916.1 L216.2,914.9 L216.9,912.1 L217.6,911.8 L218.3,914.7 L219,916 L219.7,916.2 L220.4,915.9 L221.1,914.3 L221.8,911.1 L222.5,910.6 L223.2,914.6 L223.9,916.1 L224.6,916.2 L225.3,915.2 L226,911.8 L226.7,908.8 L227.4,913 L228.1,915.5 L228.8,916.2 L229.5,916.1 L230.2,914.8 L230.9,911.3 L231.6,905.8 L232.3,911.3 L233,913.9 L233.7,914.1 L234.4,913.2 L235.1,910.1 L235.8,904.1 L236.5,908 L237.2,908.1 L237.9,906.9 L238.6,904.9 L239.3,902.4 L240,898.9 L240.7,897.6 L241.4,899.3 L242.1,903.8 L242.8,906.3 L243.5,907.3 L244.2,907.1 L244.9,904.9 L245.6,905 L246.3,908 L247,908.3 L247.7,907.3 L248.4,905.8 L249.1,903.3 L249.8,899.3 L250.5,893.9 L251.2,897.6 L251.9,898.6 L252.6,900.5 L253.3,902 L254,901.3 L254.7,897.8 L255.4,904.2 L256.1,908.4 L256.8,910.7 L257.5,912 L258.2,912.4 L258.9,911 L259.6,909.1 L260.3,913.5 L261,915.6 L261.7,916.2 L262.4,916.1 L263.1,915 L263.8,912.3 L264.5,908.9 L265.2,913.4 L265.9,915.6 L266.6,916.1 L267.3,915.7 L268,913.7 L268.7,909.4 L269.4,909 L270.1,913.7 L270.8,915.7 L271.5,915.9 L272.2,915.1 L272.9,911.8 L273.6,905.8 L274.3,913.4 L275,915.2 L275.7,915.8 L276.4,915.8 L277.1,915.1 L277.8,913.3 L278.5,910 L279.2,913.4 L279.9,915.3 L280.6,915.7 L281.3,915.6 L282,914.4 L282.7,911.5 L283.4,907.7 L284.1,913 L284.8,915.4 L285.5,915.8 L286.2,915.2 L286.9,912.3 L287.6,906.6 L288.3,911.5 L289,914.6 L289.7,915.8 L290.4,915.9 L291.1,915.1 L291.8,912.5 L292.5,910.5 L293.2,913.6 L293.9,915.4 L294.6,916 L295.3,915.9 L296,915.1 L296.7,912.8 L297.4,906.8 L298.1,912.6 L298.8,915.5 L299.5,916.1 L300.2,915.7 L300.9,913.1 L301.6,907.6 L302.3,908.8 L303,913.8 L303.7,915.9 L304.4,916.2 L305.1,915.3 L305.8,911.9 L306.5,905.6 L307.2,912.4 L307.9,915.2 L308.6,916.2 L309.3,916.2 L310,915.2 L310.7,912.3 L311.4,910.7 L312.1,914.1 L312.8,915.9 L313.5,916.3 L314.2,916.2 L314.9,915 L315.6,912.3 L316.3,912.8 L317,915.1 L317.7,916.2 L318.4,916.4 L319.1,916.2 L319.8,914.8 L320.5,912.3 L321.2,910.8 L321.9,914.8 L322.6,916.4 L323.3,916.5 L324,915.5 L324.7,912.1 L325.4,906.4 L326.1,912.2 L326.8,915.6 L327.5,916.6 L328.2,916.5 L328.9,914.8 L329.6,910.6 L330.3,908.5 L331,913.6 L331.7,916.2 L332.4,916.7 L333.1,916.3 L333.8,914 L334.5,909.3" fill="none" stroke="#968b8d" stroke-width="1.2"/>
<path d="M72,902.6 L72.7,898.9 L73.4,894.3 L74.1,890.8 L74.8,887.2 L75.5,882.8 L76.2,885 L76.9,890.7 L77.6,896 L78.3,893.8 L79,890.9 L79.7,889.4 L80.4,891.5 L81.1,892.2 L81.8,896.4 L82.5,894.5 L83.2,891.2 L83.9,891.7 L84.6,894.4 L85.3,895.5 L86,899.1 L86.7,900.2 L87.4,899.7 L88.1,898.5 L88.8,900.3 L89.5,900.6 L90.2,894.9 L90.9,901.7 L91.6,908.6 L92.3,911.7 L93,911.8 L93.7,910.6 L94.4,906.6 L95.1,903.7 L95.8,908.4 L96.5,911.1 L97.2,911.9 L97.9,911.8 L98.6,910.5 L99.3,907.1 L100,904.9 L100.7,909.3 L101.4,911.6 L102.1,912 L102.8,911.7 L103.5,909.7 L104.2,905.6 L104.9,903.8 L105.6,909.4 L106.3,911.8 L107,912.1 L107.7,911.1 L108.4,907.3 L109.1,900.2 L109.8,908.5 L110.5,911.2 L111.2,912.2 L111.9,912.2 L112.6,911.2 L113.3,908.4 L114,901.2 L114.7,907.8 L115.4,911.4 L116.1,912.3 L116.8,912 L117.5,909.7 L118.2,904.2 L118.9,906.9 L119.6,910.5 L120.3,912.1 L121,912.4 L121.7,912 L122.4,910 L123.1,906.1 L123.8,907.2 L124.5,911 L125.2,912.4 L125.9,912.5 L126.6,911.5 L127.3,908.4 L128,902.5 L128.7,908.3 L129.4,911.6 L130.1,912.6 L130.8,912.5 L131.5,910.8 L132.2,906.7 L132.9,901.8 L133.6,908.6 L134.3,912 L135,912.7 L135.7,912.2 L136.4,909.1 L137.1,902.7 L137.8,905.3 L138.5,910.4 L139.2,912.5 L139.9,912.8 L140.6,911.9 L141.3,908.4 L142,902.2 L142.7,906.7 L143.4,911.3 L144.1,912.8 L144.8,912.8 L145.5,911.2 L146.2,906.5 L146.9,905.3 L147.6,909.9 L148.3,912.3 L149,913 L149.7,912.8 L150.4,911.1 L151.1,907.4 L151.8,906.9 L152.5,910.9 L153.2,912.7 L153.9,913 L154.6,912.5 L155.3,910.3 L156,905.9 L156.7,905.8 L157.4,910.9 L158.1,912.8 L158.8,912.9 L159.5,911.6 L160.2,907.4 L160.9,902.7 L161.6,908.6 L162.3,912 L163,913 L163.7,912.8 L164.4,911.2 L165.1,906.9 L165.8,903.7 L166.5,909.5 L167.2,912.4 L167.9,913 L168.6,912.5 L169.3,909.9 L170,904.4 L170.7,908.9 L171.4,911.7 L172.1,912.8 L172.8,913 L173.5,912.5 L174.2,910.6 L174.9,907.1 L175.6,910 L176.3,912.2 L177,912.9 L177.7,912.9 L178.4,912.1 L179.1,909.9 L179.8,904.8 L180.5,909.7 L181.2,912.3 L181.9,913 L182.6,912.8 L183.3,911 L184,907 L184.7,907.1 L185.4,910.9 L186.1,912.7 L186.8,913 L187.5,912.5 L188.2,910.4 L188.9,906.2 L189.6,908.6 L190.3,911.7 L191,912.9 L191.7,913 L192.4,912.2 L193.1,909.5 L193.8,900.9 L194.5,907.8 L195.2,911.8 L195.9,913 L196.6,912.8 L197.3,910.8 L198,905.8 L198.7,902.4 L199.4,909 L200.1,912.3 L200.8,913 L201.5,912.5 L202.2,909.5 L202.9,903.2 L203.6,908.2 L204.3,911.5 L205,912.8 L205.7,913 L206.4,912.4 L207.1,910.2 L207.8,906.1 L208.5,909.8 L209.2,912.2 L209.9,912.9 L210.6,912.9 L211.3,912.1 L212,909.7 L212.7,906.6 L213.4,910.4 L214.1,912.5 L214.8,913 L215.5,912.8 L216.2,911.4 L216.9,908.2 L217.6,907.8 L218.3,911.2 L219,912.7 L219.7,913 L220.4,912.6 L221.1,910.7 L221.8,907.1 L222.5,906.5 L223.2,911.1 L223.9,912.8 L224.6,912.9 L225.3,911.8 L226,907.9 L226.7,904.4 L227.4,909.3 L228.1,912.1 L228.8,913 L229.5,912.9 L230.2,911.3 L230.9,907.3 L231.6,900.9 L232.3,907.3 L233,910.3 L233.7,910.5 L234.4,909.5 L235.1,905.9 L235.8,898.9 L236.5,903.5 L237.2,903.6 L237.9,902.2 L238.6,899.9 L239.3,897 L240,892.8 L240.7,891.3 L241.4,893.4 L242.1,898.6 L242.8,901.4 L243.5,902.7 L244.2,902.4 L244.9,899.8 L245.6,900 L246.3,903.5 L247,903.8 L247.7,902.7 L248.4,900.9 L249.1,898 L249.8,893.4 L250.5,887.1 L251.2,891.4 L251.9,892.5 L252.6,894.8 L253.3,896.5 L254,895.6 L254.7,891.7 L255.4,899 L256.1,903.9 L256.8,906.6 L257.5,908 L258.2,908.5 L258.9,907 L259.6,904.7 L260.3,909.8 L261,912.2 L261.7,912.9 L262.4,912.8 L263.1,911.6 L263.8,908.4 L264.5,904.5 L265.2,909.7 L265.9,912.3 L266.6,912.8 L267.3,912.4 L268,910 L268.7,905 L269.4,904.6 L270.1,910.1 L270.8,912.4 L271.5,912.6 L272.2,911.6 L272.9,907.8 L273.6,900.9 L274.3,909.8 L275,911.8 L275.7,912.5 L276.4,912.5 L277.1,911.7 L277.8,909.5 L278.5,905.7 L279.2,909.7 L279.9,911.9 L280.6,912.4 L281.3,912.2 L282,910.8 L282.7,907.5 L283.4,903.1 L284.1,909.2 L284.8,912.1 L285.5,912.5 L286.2,911.8 L286.9,908.4 L287.6,901.8 L288.3,907.5 L289,911.1 L289.7,912.5 L290.4,912.6 L291.1,911.7 L291.8,908.7 L292.5,906.3 L293.2,910 L293.9,912.1 L294.6,912.7 L295.3,912.6 L296,911.6 L296.7,909 L297.4,902.1 L298.1,908.8 L298.8,912.1 L299.5,912.8 L300.2,912.3 L300.9,909.3 L301.6,903 L302.3,904.3 L303,910.1 L303.7,912.6 L304.4,912.9 L305.1,911.9 L305.8,907.9 L306.5,900.7 L307.2,908.5 L307.9,911.8 L308.6,913 L309.3,913 L310,911.8 L310.7,908.4 L311.4,906.6 L312.1,910.5 L312.8,912.6 L313.5,913.1 L314.2,912.9 L314.9,911.6 L315.6,908.4 L316.3,909 L317,911.7 L317.7,913 L318.4,913.2 L319.1,912.9 L319.8,911.4 L320.5,908.4 L321.2,906.7 L321.9,911.4 L322.6,913.2 L323.3,913.3 L324,912.1 L324.7,908.2 L325.4,901.6 L326.1,908.3 L326.8,912.2 L327.5,913.4 L328.2,913.2 L328.9,911.4 L329.6,906.5 L330.3,904.1 L331,909.9 L331.7,912.9 L332.4,913.5 L333.1,913.1 L333.8,910.5 L334.5,904.9" fill="none" stroke="#8a7e80" stroke-width="1.2"/>
<path d="M72,897.9 L72.7,893.7 L73.4,888.4 L74.1,884.5 L74.8,880.4 L75.5,875.4 L76.2,878 L76.9,884.4 L77.6,890.4 L78.3,887.9 L79,884.6 L79.7,882.9 L80.4,885.3 L81.1,886.1 L81.8,890.9 L82.5,888.7 L83.2,884.9 L83.9,885.5 L84.6,888.6 L85.3,889.8 L86,893.9 L86.7,895.2 L87.4,894.6 L88.1,893.3 L88.8,895.3 L89.5,895.6 L90.2,889.2 L90.9,896.9 L91.6,904.8 L92.3,908.3 L93,908.4 L93.7,907 L94.4,902.5 L95.1,899.1 L95.8,904.5 L96.5,907.6 L97.2,908.5 L97.9,908.4 L98.6,906.9 L99.3,903.1 L100,900.6 L100.7,905.6 L101.4,908.1 L102.1,908.6 L102.8,908.3 L103.5,906 L104.2,901.3 L104.9,899.3 L105.6,905.7 L106.3,908.4 L107,908.7 L107.7,907.6 L108.4,903.2 L109.1,895.2 L109.8,904.6 L110.5,907.7 L111.2,908.8 L111.9,908.8 L112.6,907.7 L113.3,904.5 L114,896.3 L114.7,903.9 L115.4,907.9 L116.1,909 L116.8,908.6 L117.5,905.9 L118.2,899.7 L118.9,902.8 L119.6,906.9 L120.3,908.8 L121,909.1 L121.7,908.6 L122.4,906.3 L123.1,901.9 L123.8,903.2 L124.5,907.4 L125.2,909 L125.9,909.2 L126.6,908.1 L127.3,904.6 L128,897.8 L128.7,904.4 L129.4,908.1 L130.1,909.3 L130.8,909.1 L131.5,907.3 L132.2,902.6 L132.9,897 L133.6,904.7 L134.3,908.6 L135,909.4 L135.7,908.8 L136.4,905.4 L137.1,898.1 L137.8,901 L138.5,906.8 L139.2,909.2 L139.9,909.5 L140.6,908.5 L141.3,904.6 L142,897.4 L142.7,902.6 L143.4,907.8 L144.1,909.5 L144.8,909.5 L145.5,907.7 L146.2,902.4 L146.9,901 L147.6,906.2 L148.3,909 L149,909.7 L149.7,909.5 L150.4,907.6 L151.1,903.4 L151.8,902.8 L152.5,907.3 L153.2,909.4 L153.9,909.7 L154.6,909.2 L155.3,906.7 L156,901.7 L156.7,901.6 L157.4,907.4 L158.1,909.6 L158.8,909.7 L159.5,908.2 L160.2,903.4 L160.9,898.1 L161.6,904.7 L162.3,908.6 L163,909.7 L163.7,909.6 L164.4,907.7 L165.1,902.8 L165.8,899.2 L166.5,905.8 L167.2,909.1 L167.9,909.7 L168.6,909.2 L169.3,906.3 L170,900 L170.7,905.1 L171.4,908.2 L172.1,909.6 L172.8,909.7 L173.5,909.2 L174.2,907 L174.9,903 L175.6,906.3 L176.3,908.8 L177,909.7 L177.7,909.7 L178.4,908.8 L179.1,906.2 L179.8,900.5 L180.5,906 L181.2,909 L181.9,909.7 L182.6,909.5 L183.3,907.5 L184,902.9 L184.7,903.1 L185.4,907.4 L186.1,909.4 L186.8,909.7 L187.5,909.2 L188.2,906.8 L188.9,902.1 L189.6,904.7 L190.3,908.3 L191,909.6 L191.7,909.7 L192.4,908.8 L193.1,905.8 L193.8,895.9 L194.5,903.8 L195.2,908.4 L195.9,909.7 L196.6,909.5 L197.3,907.3 L198,901.6 L198.7,897.7 L199.4,905.2 L200.1,909 L200.8,909.7 L201.5,909.2 L202.2,905.8 L202.9,898.6 L203.6,904.3 L204.3,908 L205,909.6 L205.7,909.7 L206.4,909.1 L207.1,906.5 L207.8,901.9 L208.5,906.1 L209.2,908.8 L209.9,909.7 L210.6,909.7 L211.3,908.7 L212,906 L212.7,902.4 L213.4,906.8 L214.1,909.2 L214.8,909.7 L215.5,909.5 L216.2,908 L216.9,904.3 L217.6,903.9 L218.3,907.7 L219,909.5 L219.7,909.7 L220.4,909.3 L221.1,907.2 L221.8,903 L222.5,902.4 L223.2,907.6 L223.9,909.6 L224.6,909.7 L225.3,908.4 L226,904 L226.7,899.9 L227.4,905.5 L228.1,908.8 L228.8,909.7 L229.5,909.6 L230.2,907.8 L230.9,903.2 L231.6,896 L232.3,903.3 L233,906.6 L233.7,906.9 L234.4,905.8 L235.1,901.7 L235.8,893.7 L236.5,898.9 L237.2,899 L237.9,897.5 L238.6,894.8 L239.3,891.5 L240,886.8 L240.7,885.1 L241.4,887.4 L242.1,893.4 L242.8,896.6 L243.5,898 L244.2,897.7 L244.9,894.7 L245.6,894.9 L246.3,898.9 L247,899.3 L247.7,898 L248.4,896 L249.1,892.6 L249.8,887.4 L250.5,880.3 L251.2,885.2 L251.9,886.4 L252.6,889 L253.3,891 L254,890 L254.7,885.5 L255.4,893.8 L256.1,899.4 L256.8,902.4 L257.5,904.1 L258.2,904.7 L258.9,902.9 L259.6,900.3 L260.3,906.1 L261,908.9 L261.7,909.7 L262.4,909.5 L263.1,908.1 L263.8,904.6 L264.5,900.1 L265.2,906 L265.9,908.9 L266.6,909.5 L267.3,909 L268,906.3 L268.7,900.7 L269.4,900.1 L270.1,906.4 L270.8,909.1 L271.5,909.3 L272.2,908.2 L272.9,903.8 L273.6,895.9 L274.3,906.1 L275,908.4 L275.7,909.2 L276.4,909.1 L277.1,908.3 L277.8,905.8 L278.5,901.5 L279.2,906 L279.9,908.5 L280.6,909.1 L281.3,908.9 L282,907.3 L282.7,903.5 L283.4,898.5 L284.1,905.5 L284.8,908.7 L285.5,909.2 L286.2,908.4 L286.9,904.5 L287.6,897 L288.3,903.5 L289,907.6 L289.7,909.2 L290.4,909.3 L291.1,908.3 L291.8,904.8 L292.5,902.2 L293.2,906.3 L293.9,908.7 L294.6,909.4 L295.3,909.3 L296,908.2 L296.7,905.2 L297.4,897.4 L298.1,904.9 L298.8,908.8 L299.5,909.5 L300.2,909 L300.9,905.6 L301.6,898.4 L302.3,899.9 L303,906.5 L303.7,909.3 L304.4,909.7 L305.1,908.5 L305.8,904 L306.5,895.7 L307.2,904.7 L307.9,908.4 L308.6,909.7 L309.3,909.7 L310,908.4 L310.7,904.5 L311.4,902.5 L312.1,906.9 L312.8,909.3 L313.5,909.9 L314.2,909.7 L314.9,908.1 L315.6,904.5 L316.3,905.2 L317,908.3 L317.7,909.8 L318.4,910 L319.1,909.6 L319.8,907.9 L320.5,904.5 L321.2,902.6 L321.9,907.9 L322.6,909.9 L323.3,910.1 L324,908.7 L324.7,904.3 L325.4,896.8 L326.1,904.4 L326.8,908.9 L327.5,910.2 L328.2,910 L328.9,907.9 L329.6,902.4 L330.3,899.6 L331,906.3 L331.7,909.6 L332.4,910.3 L333.1,909.8 L333.8,906.9 L334.5,900.5" fill="none" stroke="#85797b" stroke-width="1.2"/>
<path d="M72,893.2 L72.7,888.6 L73.4,882.6 L74.1,878.2 L74.8,873.6 L75.5,867.9 L76.2,870.9 L76.9,878 L77.6,884.8 L78.3,882 L79,878.3 L79.7,876.4 L80.4,879.1 L81.1,880 L81.8,885.4 L82.5,883 L83.2,878.6 L83.9,879.3 L84.6,882.8 L85.3,884.2 L86,888.7 L86.7,890.2 L87.4,889.6 L88.1,888 L88.8,890.3 L89.5,890.7 L90.2,883.5 L90.9,892.1 L91.6,901 L92.3,904.8 L93,905 L93.7,903.4 L94.4,898.3 L95.1,894.6 L95.8,900.6 L96.5,904.1 L97.2,905.1 L97.9,905 L98.6,903.3 L99.3,899 L100,896.2 L100.7,901.8 L101.4,904.7 L102.1,905.3 L102.8,904.9 L103.5,902.3 L104.2,897 L104.9,894.8 L105.6,902 L106.3,905 L107,905.4 L107.7,904.1 L108.4,899.2 L109.1,890.2 L109.8,900.8 L110.5,904.3 L111.2,905.4 L111.9,905.5 L112.6,904.2 L113.3,900.7 L114,891.5 L114.7,899.9 L115.4,904.5 L116.1,905.6 L116.8,905.3 L117.5,902.2 L118.2,895.3 L118.9,898.7 L119.6,903.3 L120.3,905.4 L121,905.8 L121.7,905.2 L122.4,902.7 L123.1,897.7 L123.8,899.2 L124.5,903.9 L125.2,905.7 L125.9,905.8 L126.6,904.7 L127.3,900.7 L128,893.1 L128.7,900.5 L129.4,904.7 L130.1,906 L130.8,905.8 L131.5,903.8 L132.2,898.5 L132.9,892.2 L133.6,900.9 L134.3,905.2 L135,906.1 L135.7,905.5 L136.4,901.6 L137.1,893.4 L137.8,896.7 L138.5,903.2 L139.2,905.9 L139.9,906.2 L140.6,905.1 L141.3,900.7 L142,892.7 L142.7,898.5 L143.4,904.3 L144.1,906.3 L144.8,906.2 L145.5,904.2 L146.2,898.3 L146.9,896.7 L147.6,902.5 L148.3,905.7 L149,906.5 L149.7,906.2 L150.4,904.1 L151.1,899.3 L151.8,898.7 L152.5,903.8 L153.2,906.1 L153.9,906.5 L154.6,905.9 L155.3,903.1 L156,897.5 L156.7,897.4 L157.4,903.8 L158.1,906.3 L158.8,906.4 L159.5,904.8 L160.2,899.3 L160.9,893.4 L161.6,900.9 L162.3,905.2 L163,906.5 L163.7,906.3 L164.4,904.2 L165.1,898.8 L165.8,894.7 L166.5,902 L167.2,905.8 L167.9,906.5 L168.6,905.9 L169.3,902.6 L170,895.6 L170.7,901.3 L171.4,904.8 L172.1,906.3 L172.8,906.5 L173.5,905.9 L174.2,903.4 L174.9,899 L175.6,902.7 L176.3,905.5 L177,906.4 L177.7,906.4 L178.4,905.4 L179.1,902.5 L179.8,896.1 L180.5,902.3 L181.2,905.7 L181.9,906.5 L182.6,906.2 L183.3,904 L184,898.8 L184.7,899 L185.4,903.9 L186.1,906.1 L186.8,906.5 L187.5,905.9 L188.2,903.2 L188.9,897.9 L189.6,900.9 L190.3,904.9 L191,906.4 L191.7,906.5 L192.4,905.4 L193.1,902.1 L193.8,891 L194.5,899.9 L195.2,905 L195.9,906.5 L196.6,906.3 L197.3,903.8 L198,897.4 L198.7,893 L199.4,901.4 L200.1,905.6 L200.8,906.5 L201.5,905.9 L202.2,902.1 L202.9,894 L203.6,900.4 L204.3,904.5 L205,906.3 L205.7,906.5 L206.4,905.7 L207.1,902.9 L207.8,897.8 L208.5,902.5 L209.2,905.4 L209.9,906.4 L210.6,906.4 L211.3,905.4 L212,902.3 L212.7,898.3 L213.4,903.2 L214.1,905.8 L214.8,906.5 L215.5,906.3 L216.2,904.5 L216.9,900.5 L217.6,899.9 L218.3,904.2 L219,906.2 L219.7,906.5 L220.4,906 L221.1,903.6 L221.8,899 L222.5,898.2 L223.2,904.1 L223.9,906.3 L224.6,906.5 L225.3,904.9 L226,900 L226.7,895.5 L227.4,901.8 L228.1,905.4 L228.8,906.5 L229.5,906.3 L230.2,904.4 L230.9,899.2 L231.6,891.1 L232.3,899.2 L233,903 L233.7,903.3 L234.4,902 L235.1,897.5 L235.8,888.6 L236.5,894.4 L237.2,894.5 L237.9,892.7 L238.6,889.8 L239.3,886.1 L240,880.8 L240.7,878.9 L241.4,881.4 L242.1,888.1 L242.8,891.8 L243.5,893.3 L244.2,893.1 L244.9,889.7 L245.6,889.9 L246.3,894.4 L247,894.8 L247.7,893.3 L248.4,891 L249.1,887.3 L249.8,881.4 L250.5,873.5 L251.2,878.9 L251.9,880.3 L252.6,883.3 L253.3,885.5 L254,884.4 L254.7,879.3 L255.4,888.7 L256.1,894.9 L256.8,898.3 L257.5,900.2 L258.2,900.8 L258.9,898.8 L259.6,895.9 L260.3,902.4 L261,905.5 L261.7,906.4 L262.4,906.3 L263.1,904.7 L263.8,900.7 L264.5,895.6 L265.2,902.3 L265.9,905.6 L266.6,906.2 L267.3,905.7 L268,902.7 L268.7,896.3 L269.4,895.7 L270.1,902.8 L270.8,905.7 L271.5,906.1 L272.2,904.8 L272.9,899.9 L273.6,891 L274.3,902.4 L275,905 L275.7,905.9 L276.4,905.8 L277.1,904.9 L277.8,902.1 L278.5,897.2 L279.2,902.3 L279.9,905.1 L280.6,905.8 L281.3,905.6 L282,903.7 L282.7,899.5 L283.4,893.9 L284.1,901.7 L284.8,905.3 L285.5,905.9 L286.2,905 L286.9,900.7 L287.6,892.2 L288.3,899.5 L289,904.1 L289.7,905.9 L290.4,906 L291.1,904.8 L291.8,901 L292.5,898 L293.2,902.7 L293.9,905.3 L294.6,906.1 L295.3,906 L296,904.8 L296.7,901.4 L297.4,892.6 L298.1,901.1 L298.8,905.4 L299.5,906.3 L300.2,905.7 L300.9,901.8 L301.6,893.8 L302.3,895.5 L303,902.9 L303.7,906 L304.4,906.4 L305.1,905.1 L305.8,900 L306.5,890.8 L307.2,900.8 L307.9,905 L308.6,906.5 L309.3,906.5 L310,905 L310.7,900.7 L311.4,898.4 L312.1,903.3 L312.8,906 L313.5,906.7 L314.2,906.5 L314.9,904.7 L315.6,900.6 L316.3,901.4 L317,904.9 L317.7,906.5 L318.4,906.8 L319.1,906.4 L319.8,904.5 L320.5,900.7 L321.2,898.5 L321.9,904.4 L322.6,906.7 L323.3,906.9 L324,905.4 L324.7,900.4 L325.4,892 L326.1,900.6 L326.8,905.5 L327.5,907 L328.2,906.8 L328.9,904.4 L329.6,898.2 L330.3,895.1 L331,902.6 L331.7,906.4 L332.4,907.2 L333.1,906.6 L333.8,903.3 L334.5,896.2" fill="none" stroke="#8c8082" stroke-width="1.2"/>
<path d="M72,888.6 L72.7,883.4 L73.4,876.8 L74.1,871.9 L74.8,866.8 L75.5,860.5 L76.2,863.8 L76.9,871.7 L77.6,879.2 L78.3,876.1 L79,872.1 L79.7,869.9 L80.4,872.9 L81.1,873.8 L81.8,879.9 L82.5,877.2 L83.2,872.4 L83.9,873.1 L84.6,877 L85.3,878.5 L86,883.6 L86.7,885.2 L87.4,884.5 L88.1,882.8 L88.8,885.3 L89.5,885.7 L90.2,877.7 L90.9,887.3 L91.6,897.1 L92.3,901.4 L93,901.6 L93.7,899.9 L94.4,894.2 L95.1,890.1 L95.8,896.7 L96.5,900.6 L97.2,901.7 L97.9,901.6 L98.6,899.7 L99.3,895 L100,891.9 L100.7,898.1 L101.4,901.2 L102.1,901.9 L102.8,901.4 L103.5,898.7 L104.2,892.7 L104.9,890.3 L105.6,898.2 L106.3,901.6 L107,902 L107.7,900.6 L108.4,895.2 L109.1,885.2 L109.8,896.9 L110.5,900.8 L111.2,902.1 L111.9,902.1 L112.6,900.7 L113.3,896.8 L114,886.6 L114.7,896 L115.4,901 L116.1,902.3 L116.8,901.9 L117.5,898.5 L118.2,890.8 L118.9,894.6 L119.6,899.7 L120.3,902 L121,902.4 L121.7,901.8 L122.4,899 L123.1,893.5 L123.8,895.1 L124.5,900.4 L125.2,902.4 L125.9,902.5 L126.6,901.2 L127.3,896.8 L128,888.4 L128.7,896.6 L129.4,901.3 L130.1,902.7 L130.8,902.5 L131.5,900.2 L132.2,894.4 L132.9,887.4 L133.6,897 L134.3,901.8 L135,902.8 L135.7,902.1 L136.4,897.8 L137.1,888.7 L137.8,892.4 L138.5,899.6 L139.2,902.6 L139.9,903 L140.6,901.7 L141.3,896.8 L142,887.9 L142.7,894.4 L143.4,900.8 L144.1,903 L144.8,903 L145.5,900.7 L146.2,894.2 L146.9,892.4 L147.6,898.9 L148.3,902.3 L149,903.2 L149.7,903 L150.4,900.6 L151.1,895.3 L151.8,894.6 L152.5,900.2 L153.2,902.8 L153.9,903.2 L154.6,902.6 L155.3,899.4 L156,893.3 L156.7,893.1 L157.4,900.3 L158.1,903 L158.8,903.2 L159.5,901.4 L160.2,895.3 L160.9,888.7 L161.6,897 L162.3,901.8 L163,903.2 L163.7,903 L164.4,900.7 L165.1,894.7 L165.8,890.1 L166.5,898.3 L167.2,902.4 L167.9,903.2 L168.6,902.6 L169.3,898.9 L170,891.2 L170.7,897.4 L171.4,901.4 L172.1,903.1 L172.8,903.2 L173.5,902.5 L174.2,899.8 L174.9,894.9 L175.6,899 L176.3,902.1 L177,903.2 L177.7,903.2 L178.4,902.1 L179.1,898.8 L179.8,891.7 L180.5,898.6 L181.2,902.3 L181.9,903.2 L182.6,902.9 L183.3,900.5 L184,894.7 L184.7,895 L185.4,900.4 L186.1,902.9 L186.8,903.2 L187.5,902.6 L188.2,899.6 L188.9,893.7 L189.6,897.1 L190.3,901.4 L191,903.1 L191.7,903.2 L192.4,902.1 L193.1,898.4 L193.8,886.1 L194.5,895.9 L195.2,901.6 L195.9,903.2 L196.6,903 L197.3,900.2 L198,893.1 L198.7,888.3 L199.4,897.6 L200.1,902.3 L200.8,903.2 L201.5,902.5 L202.2,898.3 L202.9,889.4 L203.6,896.5 L204.3,901.1 L205,903 L205.7,903.2 L206.4,902.4 L207.1,899.3 L207.8,893.6 L208.5,898.8 L209.2,902.1 L209.9,903.2 L210.6,903.2 L211.3,902 L212,898.6 L212.7,894.2 L213.4,899.6 L214.1,902.5 L214.8,903.2 L215.5,903 L216.2,901.1 L216.9,896.6 L217.6,896 L218.3,900.7 L219,902.9 L219.7,903.2 L220.4,902.7 L221.1,900 L221.8,894.9 L222.5,894.1 L223.2,900.6 L223.9,903.1 L224.6,903.2 L225.3,901.5 L226,896.1 L226.7,891.1 L227.4,898 L228.1,902 L228.8,903.2 L229.5,903.1 L230.2,900.9 L230.9,895.2 L231.6,886.2 L232.3,895.2 L233,899.4 L233.7,899.7 L234.4,898.3 L235.1,893.3 L235.8,883.4 L236.5,889.8 L237.2,889.9 L237.9,888 L238.6,884.7 L239.3,880.6 L240,874.8 L240.7,872.6 L241.4,875.5 L242.1,882.9 L242.8,886.9 L243.5,888.7 L244.2,888.4 L244.9,884.6 L245.6,884.9 L246.3,889.8 L247,890.3 L247.7,888.6 L248.4,886.1 L249.1,882 L249.8,875.5 L250.5,866.7 L251.2,872.7 L251.9,874.3 L252.6,877.5 L253.3,880 L254,878.7 L254.7,873.1 L255.4,883.5 L256.1,890.4 L256.8,894.2 L257.5,896.2 L258.2,896.9 L258.9,894.7 L259.6,891.6 L260.3,898.7 L261,902.2 L261.7,903.2 L262.4,903 L263.1,901.3 L263.8,896.8 L264.5,891.2 L265.2,898.6 L265.9,902.3 L266.6,903 L267.3,902.4 L268,899 L268.7,892 L269.4,891.3 L270.1,899.1 L270.8,902.4 L271.5,902.8 L272.2,901.3 L272.9,895.9 L273.6,886.1 L274.3,898.7 L275,901.6 L275.7,902.6 L276.4,902.5 L277.1,901.4 L277.8,898.4 L278.5,893 L279.2,898.6 L279.9,901.7 L280.6,902.4 L281.3,902.2 L282,900.2 L282.7,895.5 L283.4,889.3 L284.1,897.9 L284.8,901.9 L285.5,902.6 L286.2,901.6 L286.9,896.8 L287.6,887.4 L288.3,895.5 L289,900.6 L289.7,902.6 L290.4,902.7 L291.1,901.4 L291.8,897.1 L292.5,893.9 L293.2,899 L293.9,902 L294.6,902.8 L295.3,902.8 L296,901.3 L296.7,897.6 L297.4,887.9 L298.1,897.3 L298.8,902 L299.5,903 L300.2,902.3 L300.9,898.1 L301.6,889.2 L302.3,891 L303,899.2 L303.7,902.7 L304.4,903.1 L305.1,901.7 L305.8,896.1 L306.5,885.9 L307.2,896.9 L307.9,901.6 L308.6,903.2 L309.3,903.2 L310,901.6 L310.7,896.8 L311.4,894.2 L312.1,899.7 L312.8,902.7 L313.5,903.4 L314.2,903.2 L314.9,901.3 L315.6,896.7 L316.3,897.6 L317,901.5 L317.7,903.3 L318.4,903.6 L319.1,903.1 L319.8,901 L320.5,896.8 L321.2,894.4 L321.9,901 L322.6,903.5 L323.3,903.7 L324,902 L324.7,896.5 L325.4,887.2 L326.1,896.7 L326.8,902.2 L327.5,903.8 L328.2,903.6 L328.9,900.9 L329.6,894.1 L330.3,890.7 L331,899 L331.7,903.1 L332.4,904 L333.1,903.4 L333.8,899.7 L334.5,891.8" fill="none" stroke="#7f7375" stroke-width="1.2"/>
<path d="M72,883.3 L72.7,877.5 L73.4,870.2 L74.1,864.8 L74.8,859.2 L75.5,852.2 L76.2,855.8 L76.9,864.6 L77.6,872.9 L78.3,869.5 L79,865 L79.7,862.6 L80.4,865.9 L81.1,867 L81.8,873.7 L82.5,870.7 L83.2,865.4 L83.9,866.2 L84.6,870.5 L85.3,872.2 L86,877.7 L86.7,879.6 L87.4,878.8 L88.1,876.9 L88.8,879.6 L89.5,880.2 L90.2,871.3 L90.9,881.9 L91.6,892.8 L92.3,897.6 L93,897.8 L93.7,895.9 L94.4,889.6 L95.1,885 L95.8,892.4 L96.5,896.6 L97.2,897.9 L97.9,897.8 L98.6,895.7 L99.3,890.4 L100,887 L100.7,893.9 L101.4,897.4 L102.1,898.1 L102.8,897.6 L103.5,894.5 L104.2,887.9 L104.9,885.2 L105.6,894 L106.3,897.8 L107,898.2 L107.7,896.7 L108.4,890.6 L109.1,879.6 L109.8,892.5 L110.5,896.8 L111.2,898.3 L111.9,898.3 L112.6,896.8 L113.3,892.4 L114,881.1 L114.7,891.5 L115.4,897.1 L116.1,898.5 L116.8,898.1 L117.5,894.4 L118.2,885.8 L118.9,890 L119.6,895.6 L120.3,898.3 L121,898.7 L121.7,898 L122.4,894.9 L123.1,888.8 L123.8,890.6 L124.5,896.4 L125.2,898.6 L125.9,898.8 L126.6,897.3 L127.3,892.5 L128,883.2 L128.7,892.2 L129.4,897.4 L130.1,898.9 L130.8,898.8 L131.5,896.2 L132.2,889.7 L132.9,882 L133.6,892.7 L134.3,898 L135,899.1 L135.7,898.3 L136.4,893.6 L137.1,883.5 L137.8,887.6 L138.5,895.5 L139.2,898.9 L139.9,899.3 L140.6,897.9 L141.3,892.5 L142,882.6 L142.7,889.8 L143.4,896.9 L144.1,899.3 L144.8,899.3 L145.5,896.8 L146.2,889.5 L146.9,887.6 L147.6,894.7 L148.3,898.6 L149,899.6 L149.7,899.3 L150.4,896.7 L151.1,890.8 L151.8,890 L152.5,896.3 L153.2,899.1 L153.9,899.6 L154.6,898.9 L155.3,895.4 L156,888.6 L156.7,888.4 L157.4,896.3 L158.1,899.4 L158.8,899.5 L159.5,897.5 L160.2,890.8 L160.9,883.5 L161.6,892.7 L162.3,898 L163,899.6 L163.7,899.4 L164.4,896.8 L165.1,890.1 L165.8,885.1 L166.5,894.1 L167.2,898.7 L167.9,899.6 L168.6,898.9 L169.3,894.8 L170,886.2 L170.7,893.2 L171.4,897.5 L172.1,899.4 L172.8,899.6 L173.5,898.8 L174.2,895.8 L174.9,890.3 L175.6,894.9 L176.3,898.4 L177,899.5 L177.7,899.5 L178.4,898.3 L179.1,894.7 L179.8,886.8 L180.5,894.4 L181.2,898.6 L181.9,899.6 L182.6,899.3 L183.3,896.5 L184,890.1 L184.7,890.4 L185.4,896.4 L186.1,899.2 L186.8,899.6 L187.5,898.9 L188.2,895.5 L188.9,889 L189.6,892.7 L190.3,897.6 L191,899.5 L191.7,899.6 L192.4,898.3 L193.1,894.2 L193.8,880.6 L194.5,891.5 L195.2,897.7 L195.9,899.6 L196.6,899.3 L197.3,896.2 L198,888.4 L198.7,883 L199.4,893.4 L200.1,898.6 L200.8,899.6 L201.5,898.8 L202.2,894.1 L202.9,884.3 L203.6,892.1 L204.3,897.2 L205,899.4 L205.7,899.6 L206.4,898.7 L207.1,895.2 L207.8,888.9 L208.5,894.6 L209.2,898.3 L209.9,899.5 L210.6,899.5 L211.3,898.2 L212,894.5 L212.7,889.5 L213.4,895.6 L214.1,898.8 L214.8,899.6 L215.5,899.3 L216.2,897.2 L216.9,892.2 L217.6,891.5 L218.3,896.8 L219,899.2 L219.7,899.6 L220.4,899 L221.1,896 L221.8,890.3 L222.5,889.4 L223.2,896.6 L223.9,899.4 L224.6,899.5 L225.3,897.7 L226,891.6 L226.7,886.1 L227.4,893.8 L228.1,898.3 L228.8,899.6 L229.5,899.4 L230.2,897 L230.9,890.7 L231.6,880.7 L232.3,890.7 L233,895.3 L233.7,895.7 L234.4,894.1 L235.1,888.5 L235.8,877.6 L236.5,884.7 L237.2,884.8 L237.9,882.7 L238.6,879 L239.3,874.5 L240,868 L240.7,865.6 L241.4,868.8 L242.1,877 L242.8,881.5 L243.5,883.4 L244.2,883.1 L244.9,878.9 L245.6,879.2 L246.3,884.7 L247,885.2 L247.7,883.4 L248.4,880.6 L249.1,876 L249.8,868.8 L250.5,859 L251.2,865.7 L251.9,867.4 L252.6,871 L253.3,873.7 L254,872.4 L254.7,866.1 L255.4,877.7 L256.1,885.3 L256.8,889.5 L257.5,891.8 L258.2,892.6 L258.9,890.2 L259.6,886.6 L260.3,894.6 L261,898.4 L261.7,899.5 L262.4,899.3 L263.1,897.4 L263.8,892.5 L264.5,886.3 L265.2,894.4 L265.9,898.5 L266.6,899.3 L267.3,898.6 L268,894.9 L268.7,887.1 L269.4,886.4 L270.1,895 L270.8,898.7 L271.5,899.1 L272.2,897.5 L272.9,891.5 L273.6,880.6 L274.3,894.5 L275,897.8 L275.7,898.8 L276.4,898.8 L277.1,897.6 L277.8,894.2 L278.5,888.2 L279.2,894.5 L279.9,897.9 L280.6,898.7 L281.3,898.4 L282,896.2 L282.7,891 L283.4,884.1 L284.1,893.7 L284.8,898.2 L285.5,898.9 L286.2,897.8 L286.9,892.4 L287.6,882 L288.3,891 L289,896.7 L289.7,898.8 L290.4,899 L291.1,897.6 L291.8,892.8 L292.5,889.2 L293.2,894.9 L293.9,898.2 L294.6,899.2 L295.3,899.1 L296,897.5 L296.7,893.4 L297.4,882.5 L298.1,893 L298.8,898.3 L299.5,899.3 L300.2,898.6 L300.9,893.9 L301.6,884 L302.3,886 L303,895.2 L303.7,899 L304.4,899.5 L305.1,897.9 L305.8,891.6 L306.5,880.3 L307.2,892.6 L307.9,897.8 L308.6,899.6 L309.3,899.6 L310,897.7 L310.7,892.4 L311.4,889.6 L312.1,895.7 L312.8,899 L313.5,899.8 L314.2,899.5 L314.9,897.4 L315.6,892.4 L316.3,893.3 L317,897.6 L317.7,899.6 L318.4,900 L319.1,899.5 L319.8,897.1 L320.5,892.4 L321.2,889.7 L321.9,897.1 L322.6,899.9 L323.3,900.1 L324,898.2 L324.7,892.1 L325.4,881.7 L326.1,892.3 L326.8,898.4 L327.5,900.2 L328.2,900 L328.9,897 L329.6,889.4 L330.3,885.6 L331,894.8 L331.7,899.5 L332.4,900.4 L333.1,899.8 L333.8,895.6 L334.5,886.9" fill="none" stroke="#887c7e" stroke-width="1.2"/>
<path d="M72,878 L72.7,871.7 L73.4,863.7 L74.1,857.7 L74.8,851.5 L75.5,843.9 L76.2,847.8 L76.9,857.5 L77.6,866.6 L78.3,862.8 L79,857.9 L79.7,855.2 L80.4,858.9 L81.1,860.1 L81.8,867.4 L82.5,864.1 L83.2,858.3 L83.9,859.2 L84.6,864 L85.3,865.8 L86,871.9 L86.7,874 L87.4,873.1 L88.1,871 L88.8,874 L89.5,874.6 L90.2,864.8 L90.9,876.6 L91.6,888.5 L92.3,893.7 L93,893.9 L93.7,891.8 L94.4,884.9 L95.1,879.9 L95.8,888 L96.5,892.7 L97.2,894.1 L97.9,894 L98.6,891.7 L99.3,885.8 L100,882.1 L100.7,889.7 L101.4,893.5 L102.1,894.3 L102.8,893.7 L103.5,890.3 L104.2,883.1 L104.9,880.1 L105.6,889.8 L106.3,894 L107,894.5 L107.7,892.7 L108.4,886.1 L109.1,874 L109.8,888.2 L110.5,892.9 L111.2,894.5 L111.9,894.5 L112.6,892.9 L113.3,888.1 L114,875.7 L114.7,887.1 L115.4,893.2 L116.1,894.8 L116.8,894.3 L117.5,890.2 L118.2,880.8 L118.9,885.4 L119.6,891.6 L120.3,894.5 L121,894.9 L121.7,894.2 L122.4,890.8 L123.1,884.1 L123.8,886 L124.5,892.4 L125.2,894.9 L125.9,895.1 L126.6,893.5 L127.3,888.1 L128,877.9 L128.7,887.8 L129.4,893.5 L130.1,895.2 L130.8,895 L131.5,892.3 L132.2,885.1 L132.9,876.7 L133.6,888.3 L134.3,894.2 L135,895.4 L135.7,894.6 L136.4,889.3 L137.1,878.2 L137.8,882.7 L138.5,891.5 L139.2,895.2 L139.9,895.6 L140.6,894.1 L141.3,888.1 L142,877.3 L142.7,885.2 L143.4,893 L144.1,895.6 L144.8,895.6 L145.5,892.8 L146.2,884.9 L146.9,882.8 L147.6,890.6 L148.3,894.8 L149,895.9 L149.7,895.6 L150.4,892.8 L151.1,886.3 L151.8,885.4 L152.5,892.3 L153.2,895.5 L153.9,895.9 L154.6,895.1 L155.3,891.3 L156,883.8 L156.7,883.6 L157.4,892.4 L158.1,895.7 L158.8,895.9 L159.5,893.6 L160.2,886.3 L160.9,878.3 L161.6,888.4 L162.3,894.2 L163,895.9 L163.7,895.7 L164.4,892.8 L165.1,885.5 L165.8,880 L166.5,889.9 L167.2,894.9 L167.9,895.9 L168.6,895.2 L169.3,890.7 L170,881.2 L170.7,888.9 L171.4,893.7 L172.1,895.7 L172.8,895.9 L173.5,895.1 L174.2,891.8 L174.9,885.8 L175.6,890.8 L176.3,894.6 L177,895.9 L177.7,895.9 L178.4,894.5 L179.1,890.6 L179.8,881.9 L180.5,890.3 L181.2,894.8 L181.9,895.9 L182.6,895.6 L183.3,892.5 L184,885.6 L184.7,885.8 L185.4,892.4 L186.1,895.5 L186.8,895.9 L187.5,895.2 L188.2,891.5 L188.9,884.3 L189.6,888.4 L190.3,893.7 L191,895.8 L191.7,895.9 L192.4,894.5 L193.1,890 L193.8,875.1 L194.5,887 L195.2,893.9 L195.9,895.9 L196.6,895.7 L197.3,892.3 L198,883.6 L198.7,877.7 L199.4,889.1 L200.1,894.8 L200.8,895.9 L201.5,895.1 L202.2,890 L202.9,879.1 L203.6,887.7 L204.3,893.3 L205,895.7 L205.7,895.9 L206.4,894.9 L207.1,891.1 L207.8,884.1 L208.5,890.5 L209.2,894.5 L209.9,895.9 L210.6,895.9 L211.3,894.4 L212,890.3 L212.7,884.9 L213.4,891.5 L214.1,895.1 L214.8,895.9 L215.5,895.7 L216.2,893.3 L216.9,887.8 L217.6,887.1 L218.3,892.9 L219,895.5 L219.7,895.9 L220.4,895.3 L221.1,892 L221.8,885.8 L222.5,884.8 L223.2,892.7 L223.9,895.7 L224.6,895.9 L225.3,893.9 L226,887.2 L226.7,881.1 L227.4,889.6 L228.1,894.5 L228.8,895.9 L229.5,895.7 L230.2,893.1 L230.9,886.1 L231.6,875.2 L232.3,886.1 L233,891.3 L233.7,891.6 L234.4,889.9 L235.1,883.8 L235.8,871.7 L236.5,879.6 L237.2,879.7 L237.9,877.3 L238.6,873.3 L239.3,868.4 L240,861.2 L240.7,858.6 L241.4,862.1 L242.1,871.1 L242.8,876.1 L243.5,878.2 L244.2,877.8 L244.9,873.2 L245.6,873.5 L246.3,879.6 L247,880.1 L247.7,878.1 L248.4,875.1 L249.1,870 L249.8,862.1 L250.5,851.3 L251.2,858.7 L251.9,860.6 L252.6,864.5 L253.3,867.5 L254,866.1 L254.7,859.2 L255.4,871.8 L256.1,880.2 L256.8,884.9 L257.5,887.4 L258.2,888.2 L258.9,885.6 L259.6,881.7 L260.3,890.4 L261,894.6 L261.7,895.8 L262.4,895.6 L263.1,893.5 L263.8,888.1 L264.5,881.3 L265.2,890.3 L265.9,894.7 L266.6,895.6 L267.3,894.9 L268,890.8 L268.7,882.2 L269.4,881.4 L270.1,890.9 L270.8,894.9 L271.5,895.4 L272.2,893.6 L272.9,887 L273.6,875.1 L274.3,890.4 L275,893.9 L275.7,895.1 L276.4,895.1 L277.1,893.7 L277.8,890 L278.5,883.5 L279.2,890.3 L279.9,894 L280.6,895 L281.3,894.7 L282,892.2 L282.7,886.5 L283.4,878.9 L284.1,889.5 L284.8,894.4 L285.5,895.1 L286.2,893.9 L286.9,888.1 L287.6,876.6 L288.3,886.5 L289,892.7 L289.7,895.1 L290.4,895.3 L291.1,893.7 L291.8,888.5 L292.5,884.5 L293.2,890.8 L293.9,894.4 L294.6,895.5 L295.3,895.4 L296,893.6 L296.7,889.1 L297.4,877.2 L298.1,888.7 L298.8,894.5 L299.5,895.7 L300.2,894.8 L300.9,889.7 L301.6,878.8 L302.3,881 L303,891.1 L303.7,895.3 L304.4,895.8 L305.1,894.1 L305.8,887.2 L306.5,874.7 L307.2,888.2 L307.9,894 L308.6,895.9 L309.3,895.9 L310,893.9 L310.7,888.1 L311.4,885 L312.1,891.6 L312.8,895.3 L313.5,896.2 L314.2,895.9 L314.9,893.5 L315.6,888 L316.3,889 L317,893.8 L317.7,896 L318.4,896.3 L319.1,895.8 L319.8,893.2 L320.5,888.1 L321.2,885.1 L321.9,893.2 L322.6,896.3 L323.3,896.5 L324,894.4 L324.7,887.7 L325.4,876.3 L326.1,887.9 L326.8,894.6 L327.5,896.6 L328.2,896.4 L328.9,893.1 L329.6,884.8 L330.3,880.6 L331,890.7 L331.7,895.8 L332.4,896.9 L333.1,896.1 L333.8,891.6 L334.5,882" fill="none" stroke="#7d7173" stroke-width="1.2"/>
<path d="M86,936.5 C90.5,936.5 92,934.5 95,934.5 C98,934.5 99.5,936.5 104,936.5Z" fill="#5794F2"/><path d="M138,936.5 C140,936.5 140.7,932.5 142,932.5 C143.3,932.5 144,936.5 146,936.5Z" fill="#56A64B"/><path d="M188,936.5 C191,936.5 192,933.5 194,933.5 C196,933.5 197,936.5 200,936.5Z" fill="#56A64B"/><path d="M201,936.5 C205.5,936.5 207,934.5 210,934.5 C213,934.5 214.5,936.5 219,936.5Z" fill="#5794F2"/><path d="M232,936.5 C234,936.5 234.7,932.5 236,932.5 C237.3,932.5 238,936.5 240,936.5Z" fill="#E0B400"/><path d="M262,936.5 C264.5,936.5 265.3,932.5 267,932.5 C268.7,932.5 269.5,936.5 272,936.5Z" fill="#56A64B"/><path d="M294,936.5 C295,936.5 295.3,933.5 296,933.5 C296.7,933.5 297,936.5 298,936.5Z" fill="#E0B400"/><path d="M315.5,936.5 C316.8,936.5 317.2,933.5 318,933.5 C318.8,933.5 319.2,936.5 320.5,936.5Z" fill="#E0B400"/>
<rect x="29.0" y="970.0" width="14" height="4" rx="2" fill="#56A64B"/>
<text x="51.3" y="975.7" font-size="12" textLength="77.7" lengthAdjust="spacing">compactor-0</text>
<rect x="139.9" y="970.0" width="14" height="4" rx="2" fill="#E0B400"/>
<text x="162.3" y="975.7" font-size="12" textLength="76.9" lengthAdjust="spacing">compactor-1</text>
<rect x="249.5" y="970.0" width="14" height="4" rx="2" fill="#5794F2"/>
<text x="271.3" y="975.7" font-size="12" textLength="76.9" lengthAdjust="spacing" clip-path="url(#cl02)">compactor-2</text>
<rect x="29.0" y="993.3" width="14" height="4" rx="2" fill="#FA6400"/>
<text x="51.3" y="999.0" font-size="12" textLength="147.8" lengthAdjust="spacing">compactor-secondary-0</text>
<rect x="29.0" y="1016.9" width="14" height="4" rx="2" fill="#E02F44"/>
<text x="51.3" y="1022.6" font-size="12" textLength="235.9" lengthAdjust="spacing">overrides-exporter-6c544b4ddf-jvwh8</text>
<rect x="360.5" y="782.5" width="335" height="257" rx="2" fill="#fff" stroke="#e1e3e5"/>
<text x="369.6" y="804.1" font-size="15" font-weight="500" textLength="142.5" lengthAdjust="spacing" stroke="#24292e" stroke-width="0.3">Transmit bandwidth</text>
<path d="M435,849.5 H679 M435,893.5 H679 M435,936.5 H679 M464.4,831.5 V941.5 M525.4,831.5 V941.5 M586.4,831.5 V941.5 M647.4,831.5 V941.5" stroke="#e4e5e6" stroke-width="1" fill="none"/>
<text x="429.0" y="853.9" font-size="12" text-anchor="end" textLength="36.2" lengthAdjust="spacing">1 GB/s</text>
<text x="429.0" y="897.9" font-size="12" text-anchor="end" textLength="56.0" lengthAdjust="spacing">500 MB/s</text>
<text x="429.0" y="940.9" font-size="12" text-anchor="end" textLength="29.5" lengthAdjust="spacing">0 B/s</text>
<text x="464.4" y="956.0" font-size="12" text-anchor="middle">15:30</text>
<text x="525.4" y="956.0" font-size="12" text-anchor="middle">15:45</text>
<text x="586.4" y="956.0" font-size="12" text-anchor="middle">16:00</text>
<text x="647.4" y="956.0" font-size="12" text-anchor="middle">16:15</text>
<g class="c" fill="url(#g11)"><rect x="435" y="911.8" height="24.7"/><rect x="436" y="905.9" height="30.6"/><rect x="437" y="898.3" height="38.2"/><rect x="438" y="891.6" height="44.9"/><rect x="439" y="886.5" height="50"/><rect x="440" y="883.8" height="52.7"/><rect x="441" y="883.5" height="53"/><rect x="442" y="883.8" height="52.7"/><rect x="443" y="884" height="52.5"/><rect x="444" y="887.8" height="48.7"/><rect x="445" y="893" height="43.5"/><rect x="446" y="897.2" height="39.3"/><rect x="447" y="899.5" height="37"/><rect x="448" y="902" height="34.5"/><rect x="449" y="908" height="28.5"/><rect x="450" y="913.9" height="22.6"/><rect x="451" y="916.7" height="19.8"/><rect x="452" y="918.3" height="18.2"/><rect x="453" y="919.9" height="16.6"/><rect x="454" y="923.9" height="12.6"/><rect x="455" y="927.3" height="9.2"/><rect x="456" y="926" height="10.5"/><rect x="457" y="923.4" height="13.1"/><rect x="458" y="924.1" height="12.4"/><rect x="459" y="925.1" height="11.4"/><rect x="460" y="925" height="11.5"/><rect x="461" y="922.6" height="13.9"/><rect x="462" y="919.5" height="17"/><rect x="463" y="918.9" height="17.6"/><rect x="464" y="918.5" height="18"/><rect x="465" y="918" height="18.5"/><rect x="466" y="918" height="18.5"/><rect x="467" y="918.1" height="18.4"/><rect x="468" y="920.7" height="15.8"/><rect x="469" y="923.3" height="13.2"/><rect x="470" y="923" height="13.5"/><rect x="471" y="921.6" height="14.9"/><rect x="472" y="922.7" height="13.8"/><rect x="473" y="924.2" height="12.3"/><rect x="474" y="925.2" height="11.3"/><rect x="475" y="923.7" height="12.8"/><rect x="476" y="922.3" height="14.2"/><rect x="477" y="924.1" height="12.4"/><rect x="478" y="926.1" height="10.4"/><rect x="479" y="924.7" height="11.8"/><rect x="480" y="922.2" height="14.3"/><rect x="481" y="923.5" height="13"/><rect x="482" y="925.5" height="11"/><rect x="483" y="925.2" height="11.3"/><rect x="484" y="922.9" height="13.6"/><rect x="485" y="923.1" height="13.4"/><rect x="486" y="924.9" height="11.6"/><rect x="487" y="926.4" height="10.1"/><rect x="488" y="924.8" height="11.7"/><rect x="489" y="923.4" height="13.1"/><rect x="490" y="924.4" height="12.1"/><rect x="491" y="925.2" height="11.3"/><rect x="492" y="923.9" height="12.6"/><rect x="493" y="922.7" height="13.8"/><rect x="494" y="923.3" height="13.2"/><rect x="495" y="925" height="11.5"/><rect x="496" y="925" height="11.5"/><rect x="497" y="922.7" height="13.8"/><rect x="498" y="922.3" height="14.2"/><rect x="499" y="924.4" height="12.1"/><rect x="500" y="924.7" height="11.8"/><rect x="501" y="923.5" height="13"/><rect x="502" y="923.4" height="13.1"/><rect x="503" y="924.4" height="12.1"/><rect x="504" y="924" height="12.5"/><rect x="505" y="922.6" height="13.9"/><rect x="506" y="922.3" height="14.2"/><rect x="507" y="923.2" height="13.3"/><rect x="508" y="923.1" height="13.4"/><rect x="509" y="921.3" height="15.2"/><rect x="510" y="919.6" height="16.9"/><rect x="511" y="920.1" height="16.4"/><rect x="512" y="921.5" height="15"/><rect x="513" y="922.3" height="14.2"/><rect x="514" y="920.9" height="15.6"/><rect x="515" y="919" height="17.5"/><rect x="516" y="919.2" height="17.3"/><rect x="517" y="920.3" height="16.2"/><rect x="518" y="918.2" height="18.3"/><rect x="519" y="915" height="21.5"/><rect x="520" y="913.6" height="22.9"/><rect x="521" y="916.8" height="19.7"/><rect x="522" y="919.2" height="17.3"/><rect x="523" y="918.1" height="18.4"/><rect x="524" y="917" height="19.5"/><rect x="525" y="917.5" height="19"/><rect x="526" y="918.9" height="17.6"/><rect x="527" y="918.9" height="17.6"/><rect x="528" y="917.4" height="19.1"/><rect x="529" y="916.2" height="20.3"/><rect x="530" y="916.9" height="19.6"/><rect x="531" y="917.7" height="18.8"/><rect x="532" y="917.2" height="19.3"/><rect x="533" y="915.1" height="21.4"/><rect x="534" y="913.8" height="22.7"/><rect x="535" y="915.6" height="20.9"/><rect x="536" y="917.9" height="18.6"/><rect x="537" y="918.2" height="18.3"/><rect x="538" y="917.7" height="18.8"/><rect x="539" y="918.4" height="18.1"/><rect x="540" y="920.1" height="16.4"/><rect x="541" y="921.8" height="14.7"/><rect x="542" y="921.2" height="15.3"/><rect x="543" y="920.5" height="16"/><rect x="544" y="922.6" height="13.9"/><rect x="545" y="924.4" height="12.1"/><rect x="546" y="924.5" height="12"/><rect x="547" y="923.1" height="13.4"/><rect x="548" y="921.7" height="14.8"/><rect x="549" y="922.8" height="13.7"/><rect x="550" y="924" height="12.5"/><rect x="551" y="923.4" height="13.1"/><rect x="552" y="921.8" height="14.7"/><rect x="553" y="921.1" height="15.4"/><rect x="554" y="923.2" height="13.3"/><rect x="555" y="925.2" height="11.3"/><rect x="556" y="923.8" height="12.7"/><rect x="557" y="922.4" height="14.1"/><rect x="558" y="922.7" height="13.8"/><rect x="559" y="923.7" height="12.8"/><rect x="560" y="923.4" height="13.1"/><rect x="561" y="921.8" height="14.7"/><rect x="562" y="922.1" height="14.4"/><rect x="563" y="923.6" height="12.9"/><rect x="564" y="923.1" height="13.4"/><rect x="565" y="921.7" height="14.8"/><rect x="566" y="920.8" height="15.7"/><rect x="567" y="922.3" height="14.2"/><rect x="568" y="923.9" height="12.6"/><rect x="569" y="923.2" height="13.3"/><rect x="570" y="920.5" height="16"/><rect x="571" y="919" height="17.5"/><rect x="572" y="919" height="17.5"/><rect x="573" y="918.5" height="18"/><rect x="574" y="915.4" height="21.1"/><rect x="575" y="913.5" height="23"/><rect x="576" y="914.8" height="21.7"/><rect x="577" y="916.6" height="19.9"/><rect x="578" y="917.5" height="19"/><rect x="579" y="917.1" height="19.4"/><rect x="580" y="917.9" height="18.6"/><rect x="581" y="919.9" height="16.6"/><rect x="582" y="919.5" height="17"/><rect x="583" y="917.3" height="19.2"/><rect x="584" y="917.7" height="18.8"/><rect x="585" y="919" height="17.5"/><rect x="586" y="918.8" height="17.7"/><rect x="587" y="914.5" height="22"/><rect x="588" y="910.2" height="26.3"/><rect x="589" y="910.1" height="26.4"/><rect x="590" y="910.2" height="26.3"/><rect x="591" y="907.4" height="29.1"/><rect x="592" y="906.4" height="30.1"/><rect x="593" y="908.7" height="27.8"/><rect x="594" y="913.3" height="23.2"/><rect x="595" y="918" height="18.5"/><rect x="596" y="917.5" height="19"/><rect x="597" y="915.5" height="21"/><rect x="598" y="917" height="19.5"/><rect x="599" y="918.9" height="17.6"/><rect x="600" y="918.6" height="17.9"/><rect x="601" y="918" height="18.5"/><rect x="602" y="919.1" height="17.4"/><rect x="603" y="921.1" height="15.4"/><rect x="604" y="921.1" height="15.4"/><rect x="605" y="919.4" height="17.1"/><rect x="606" y="917.9" height="18.6"/><rect x="607" y="919.1" height="17.4"/><rect x="608" y="920" height="16.5"/><rect x="609" y="918" height="18.5"/><rect x="610" y="915.9" height="20.6"/><rect x="611" y="916.4" height="20.1"/><rect x="612" y="917.1" height="19.4"/><rect x="613" y="916.7" height="19.8"/><rect x="614" y="914.5" height="22"/><rect x="615" y="913.4" height="23.1"/><rect x="616" y="914.8" height="21.7"/><rect x="617" y="915.4" height="21.1"/><rect x="618" y="913.3" height="23.2"/><rect x="619" y="911.4" height="25.1"/><rect x="620" y="913.4" height="23.1"/><rect x="621" y="916.4" height="20.1"/><rect x="622" y="917" height="19.5"/><rect x="623" y="917.2" height="19.3"/><rect x="624" y="918.9" height="17.6"/><rect x="625" y="921.1" height="15.4"/><rect x="626" y="922" height="14.5"/><rect x="627" y="920.4" height="16.1"/><rect x="628" y="918.9" height="17.6"/><rect x="629" y="920" height="16.5"/><rect x="630" y="921.6" height="14.9"/><rect x="631" y="920.7" height="15.8"/><rect x="632" y="918.6" height="17.9"/><rect x="633" y="916.8" height="19.7"/><rect x="634" y="919.3" height="17.2"/><rect x="635" y="921.4" height="15.1"/><rect x="636" y="919.2" height="17.3"/><rect x="637" y="916.9" height="19.6"/><rect x="638" y="915.6" height="20.9"/><rect x="639" y="916.1" height="20.4"/><rect x="640" y="915.9" height="20.6"/><rect x="641" y="914.1" height="22.4"/><rect x="642" y="913.7" height="22.8"/><rect x="643" y="916" height="20.5"/><rect x="644" y="918.4" height="18.1"/><rect x="645" y="918.5" height="18"/><rect x="646" y="918.3" height="18.2"/><rect x="647" y="920" height="16.5"/><rect x="648" y="922.6" height="13.9"/><rect x="649" y="923.9" height="12.6"/><rect x="650" y="922.6" height="13.9"/><rect x="651" y="920.9" height="15.6"/><rect x="652" y="921.5" height="15"/><rect x="653" y="922.2" height="14.3"/><rect x="654" y="920.7" height="15.8"/><rect x="655" y="917.9" height="18.6"/><rect x="656" y="915.7" height="20.8"/><rect x="657" y="916.5" height="20"/><rect x="658" y="917.2" height="19.3"/><rect x="659" y="916.2" height="20.3"/><rect x="660" y="914.7" height="21.8"/><rect x="661" y="914.8" height="21.7"/><rect x="662" y="917.6" height="18.9"/><rect x="663" y="919.6" height="16.9"/><rect x="664" y="918.7" height="17.8"/><rect x="665" y="919" height="17.5"/><rect x="666" y="921.6" height="14.9"/><rect x="667" y="923.6" height="12.9"/><rect x="668" y="922.3" height="14.2"/><rect x="669" y="921" height="15.5"/><rect x="670" y="922.8" height="13.7"/><rect x="671" y="924.6" height="11.9"/><rect x="672" y="923.2" height="13.3"/><rect x="673" y="921.7" height="14.8"/><rect x="674" y="923.4" height="13.1"/><rect x="675" y="925.1" height="11.4"/><rect x="676" y="925.2" height="11.3"/><rect x="677" y="924.3" height="12.2"/><rect x="678" y="923.6" height="12.9"/></g>
<g class="c" fill="url(#g12)"><rect x="435" y="896.7" height="15.1"/><rect x="436" y="887.2" height="18.7"/><rect x="437" y="874.9" height="23.4"/><rect x="438" y="864" height="27.5"/><rect x="439" y="855.9" height="30.6"/><rect x="440" y="851.6" height="32.3"/><rect x="441" y="851.1" height="32.5"/><rect x="442" y="851.5" height="32.3"/><rect x="443" y="851.9" height="32.1"/><rect x="444" y="857.9" height="29.9"/><rect x="445" y="866.4" height="26.6"/><rect x="446" y="873.2" height="24.1"/><rect x="447" y="876.8" height="22.7"/><rect x="448" y="880.9" height="21.1"/><rect x="449" y="890.5" height="17.5"/><rect x="450" y="900.1" height="13.8"/><rect x="451" y="904.5" height="12.2"/><rect x="452" y="907.2" height="11.1"/><rect x="453" y="909.8" height="10.2"/><rect x="454" y="916.2" height="7.7"/><rect x="455" y="921.7" height="5.6"/><rect x="456" y="919.5" height="6.4"/><rect x="457" y="915.4" height="8"/><rect x="458" y="916.6" height="7.6"/><rect x="459" y="918" height="7"/><rect x="460" y="917.9" height="7.1"/><rect x="461" y="914" height="8.5"/><rect x="462" y="909" height="10.4"/><rect x="463" y="908.1" height="10.8"/><rect x="464" y="907.4" height="11.1"/><rect x="465" y="906.6" height="11.4"/><rect x="466" y="906.6" height="11.4"/><rect x="467" y="906.8" height="11.3"/><rect x="468" y="911" height="9.7"/><rect x="469" y="915.2" height="8.1"/><rect x="470" y="914.8" height="8.2"/><rect x="471" y="912.4" height="9.1"/><rect x="472" y="914.2" height="8.5"/><rect x="473" y="916.6" height="7.6"/><rect x="474" y="918.2" height="6.9"/><rect x="475" y="915.9" height="7.8"/><rect x="476" y="913.5" height="8.7"/><rect x="477" y="916.6" height="7.6"/><rect x="478" y="919.8" height="6.3"/><rect x="479" y="917.5" height="7.2"/><rect x="480" y="913.4" height="8.8"/><rect x="481" y="915.6" height="7.9"/><rect x="482" y="918.7" height="6.8"/><rect x="483" y="918.2" height="7"/><rect x="484" y="914.5" height="8.4"/><rect x="485" y="914.9" height="8.2"/><rect x="486" y="917.8" height="7.1"/><rect x="487" y="920.3" height="6.2"/><rect x="488" y="917.7" height="7.1"/><rect x="489" y="915.3" height="8.1"/><rect x="490" y="917" height="7.4"/><rect x="491" y="918.2" height="7"/><rect x="492" y="916.2" height="7.7"/><rect x="493" y="914.2" height="8.5"/><rect x="494" y="915.2" height="8.1"/><rect x="495" y="917.9" height="7.1"/><rect x="496" y="917.9" height="7.1"/><rect x="497" y="914.2" height="8.5"/><rect x="498" y="913.6" height="8.7"/><rect x="499" y="917" height="7.4"/><rect x="500" y="917.5" height="7.2"/><rect x="501" y="915.5" height="8"/><rect x="502" y="915.3" height="8"/><rect x="503" y="917.1" height="7.4"/><rect x="504" y="916.4" height="7.6"/><rect x="505" y="914.1" height="8.5"/><rect x="506" y="913.5" height="8.7"/><rect x="507" y="915.1" height="8.1"/><rect x="508" y="914.9" height="8.2"/><rect x="509" y="912" height="9.3"/><rect x="510" y="909.2" height="10.4"/><rect x="511" y="910.1" height="10"/><rect x="512" y="912.4" height="9.2"/><rect x="513" y="913.7" height="8.7"/><rect x="514" y="911.3" height="9.6"/><rect x="515" y="908.2" height="10.7"/><rect x="516" y="908.5" height="10.6"/><rect x="517" y="910.3" height="9.9"/><rect x="518" y="906.9" height="11.2"/><rect x="519" y="901.8" height="13.2"/><rect x="520" y="899.6" height="14"/><rect x="521" y="904.7" height="12.1"/><rect x="522" y="908.6" height="10.6"/><rect x="523" y="906.8" height="11.3"/><rect x="524" y="905" height="12"/><rect x="525" y="905.9" height="11.6"/><rect x="526" y="908.1" height="10.8"/><rect x="527" y="908.2" height="10.8"/><rect x="528" y="905.7" height="11.7"/><rect x="529" y="903.7" height="12.4"/><rect x="530" y="905" height="12"/><rect x="531" y="906.2" height="11.5"/><rect x="532" y="905.4" height="11.8"/><rect x="533" y="902" height="13.1"/><rect x="534" y="899.8" height="13.9"/><rect x="535" y="902.8" height="12.8"/><rect x="536" y="906.6" height="11.4"/><rect x="537" y="907" height="11.2"/><rect x="538" y="906.2" height="11.5"/><rect x="539" y="907.3" height="11.1"/><rect x="540" y="910.1" height="10"/><rect x="541" y="912.8" height="9"/><rect x="542" y="911.8" height="9.4"/><rect x="543" y="910.8" height="9.8"/><rect x="544" y="914.1" height="8.5"/><rect x="545" y="917" height="7.4"/><rect x="546" y="917.1" height="7.4"/><rect x="547" y="914.9" height="8.2"/><rect x="548" y="912.7" height="9"/><rect x="549" y="914.5" height="8.4"/><rect x="550" y="916.4" height="7.7"/><rect x="551" y="915.4" height="8"/><rect x="552" y="912.8" height="9"/><rect x="553" y="911.6" height="9.4"/><rect x="554" y="915.1" height="8.1"/><rect x="555" y="918.2" height="7"/><rect x="556" y="916" height="7.8"/><rect x="557" y="913.7" height="8.7"/><rect x="558" y="914.2" height="8.5"/><rect x="559" y="915.8" height="7.9"/><rect x="560" y="915.4" height="8"/><rect x="561" y="912.9" height="9"/><rect x="562" y="913.3" height="8.8"/><rect x="563" y="915.6" height="7.9"/><rect x="564" y="914.9" height="8.2"/><rect x="565" y="912.6" height="9.1"/><rect x="566" y="911.2" height="9.6"/><rect x="567" y="913.7" height="8.7"/><rect x="568" y="916.2" height="7.7"/><rect x="569" y="915" height="8.2"/><rect x="570" y="910.8" height="9.8"/><rect x="571" y="908.3" height="10.7"/><rect x="572" y="908.3" height="10.7"/><rect x="573" y="907.4" height="11.1"/><rect x="574" y="902.4" height="13"/><rect x="575" y="899.4" height="14.1"/><rect x="576" y="901.5" height="13.3"/><rect x="577" y="904.4" height="12.2"/><rect x="578" y="905.8" height="11.7"/><rect x="579" y="905.2" height="11.9"/><rect x="580" y="906.5" height="11.4"/><rect x="581" y="909.8" height="10.1"/><rect x="582" y="909.1" height="10.4"/><rect x="583" y="905.6" height="11.7"/><rect x="584" y="906.3" height="11.5"/><rect x="585" y="908.3" height="10.7"/><rect x="586" y="907.9" height="10.9"/><rect x="587" y="901" height="13.5"/><rect x="588" y="894.1" height="16.1"/><rect x="589" y="894" height="16.2"/><rect x="590" y="894.2" height="16.1"/><rect x="591" y="889.6" height="17.8"/><rect x="592" y="887.9" height="18.5"/><rect x="593" y="891.6" height="17.1"/><rect x="594" y="899.1" height="14.2"/><rect x="595" y="906.6" height="11.3"/><rect x="596" y="905.8" height="11.7"/><rect x="597" y="902.7" height="12.9"/><rect x="598" y="905" height="12"/><rect x="599" y="908.2" height="10.8"/><rect x="600" y="907.6" height="11"/><rect x="601" y="906.7" height="11.3"/><rect x="602" y="908.4" height="10.7"/><rect x="603" y="911.7" height="9.4"/><rect x="604" y="911.7" height="9.4"/><rect x="605" y="908.9" height="10.5"/><rect x="606" y="906.6" height="11.4"/><rect x="607" y="908.4" height="10.7"/><rect x="608" y="909.8" height="10.1"/><rect x="609" y="906.6" height="11.4"/><rect x="610" y="903.3" height="12.6"/><rect x="611" y="904" height="12.3"/><rect x="612" y="905.2" height="11.9"/><rect x="613" y="904.6" height="12.1"/><rect x="614" y="901" height="13.5"/><rect x="615" y="899.2" height="14.2"/><rect x="616" y="901.5" height="13.3"/><rect x="617" y="902.5" height="12.9"/><rect x="618" y="899" height="14.2"/><rect x="619" y="896.1" height="15.4"/><rect x="620" y="899.2" height="14.2"/><rect x="621" y="904" height="12.3"/><rect x="622" y="905" height="12"/><rect x="623" y="905.3" height="11.9"/><rect x="624" y="908.1" height="10.8"/><rect x="625" y="911.6" height="9.5"/><rect x="626" y="913.1" height="8.9"/><rect x="627" y="910.6" height="9.8"/><rect x="628" y="908.1" height="10.8"/><rect x="629" y="909.9" height="10.1"/><rect x="630" y="912.4" height="9.2"/><rect x="631" y="911" height="9.7"/><rect x="632" y="907.7" height="11"/><rect x="633" y="904.7" height="12.1"/><rect x="634" y="908.7" height="10.6"/><rect x="635" y="912.2" height="9.2"/><rect x="636" y="908.7" height="10.6"/><rect x="637" y="904.9" height="12"/><rect x="638" y="902.8" height="12.8"/><rect x="639" y="903.5" height="12.5"/><rect x="640" y="903.4" height="12.6"/><rect x="641" y="900.3" height="13.8"/><rect x="642" y="899.7" height="14"/><rect x="643" y="903.5" height="12.6"/><rect x="644" y="907.3" height="11.1"/><rect x="645" y="907.4" height="11"/><rect x="646" y="907.1" height="11.2"/><rect x="647" y="909.8" height="10.1"/><rect x="648" y="914" height="8.5"/><rect x="649" y="916.2" height="7.7"/><rect x="650" y="914" height="8.5"/><rect x="651" y="911.3" height="9.6"/><rect x="652" y="912.4" height="9.2"/><rect x="653" y="913.4" height="8.8"/><rect x="654" y="911.1" height="9.7"/><rect x="655" y="906.5" height="11.4"/><rect x="656" y="903" height="12.7"/><rect x="657" y="904.2" height="12.3"/><rect x="658" y="905.4" height="11.8"/><rect x="659" y="903.7" height="12.5"/><rect x="660" y="901.3" height="13.4"/><rect x="661" y="901.5" height="13.3"/><rect x="662" y="906" height="11.6"/><rect x="663" y="909.3" height="10.3"/><rect x="664" y="907.7" height="10.9"/><rect x="665" y="908.3" height="10.7"/><rect x="666" y="912.5" height="9.1"/><rect x="667" y="915.7" height="7.9"/><rect x="668" y="913.6" height="8.7"/><rect x="669" y="911.5" height="9.5"/><rect x="670" y="914.4" height="8.4"/><rect x="671" y="917.3" height="7.3"/><rect x="672" y="915" height="8.2"/><rect x="673" y="912.6" height="9.1"/><rect x="674" y="915.4" height="8"/><rect x="675" y="918.2" height="7"/><rect x="676" y="918.3" height="6.9"/><rect x="677" y="916.9" height="7.5"/><rect x="678" y="915.8" height="7.9"/></g>
<path d="M435,912.6 L436,906.2 L437,899 L438,890.2 L439,884.3 L440,880.2 L441,877.3 L442,878.6 L443,878.8 L444,880.2 L445,885.9 L446,891.7 L447,894.7 L448,897.1 L449,902 L450,908.5 L451,913.2 L452,916.2 L453,916.9 L454,920.5 L455,924.9 L456,926.4 L457,923.5 L458,922.5 L459,923.4 L460,924.4 L461,922.5 L462,919.9 L463,917.4 L464,917 L465,916.1 L466,916.2 L467,916.2 L468,917.7 L469,920.6 L470,922.5 L471,920.9 L472,920.5 L473,922.1 L474,923.8 L475,923.3 L476,921.7 L477,921.9 L478,924 L479,924.9 L480,922.2 L481,921.2 L482,923.3 L483,925.3 L484,922.8 L485,920.9 L486,922.8 L487,924.7 L488,924.6 L489,922.8 L490,922.7 L491,923.8 L492,923.4 L493,922 L494,921.1 L495,922.9 L496,924.8 L497,922.6 L498,920 L499,922.1 L500,924.3 L501,922.9 L502,921.5 L503,922.7 L504,923.6 L505,922.1 L506,920.5 L507,921.4 L508,922.5 L509,920.8 L510,918.9 L511,917.7 L512,919.3 L513,920.9 L514,920.2 L515,918.6 L516,916.9 L517,918.1 L518,918.1 L519,914.6 L520,911.2 L521,913.1 L522,916.5 L523,916.9 L524,915.7 L525,915 L526,916.4 L527,917.9 L528,916.4 L529,914.7 L530,914.6 L531,915.5 L532,916.3 L533,914.2 L534,911.8 L535,912.3 L536,914.9 L537,916.7 L538,916.2 L539,915.7 L540,917.6 L541,919.5 L542,920.1 L543,919.3 L544,920.1 L545,922.4 L546,924 L547,922.6 L548,921.1 L549,920.9 L550,922.2 L551,923 L552,921.2 L553,919.5 L554,920.8 L555,923.1 L556,923.3 L557,921.8 L558,920.8 L559,921.9 L560,923 L561,921.3 L562,919.9 L563,921.5 L564,922.6 L565,921 L566,919.5 L567,920.1 L568,921.8 L569,922.9 L570,920.9 L571,917.3 L572,917.3 L573,917.3 L574,915 L575,911.6 L576,911.7 L577,913.7 L578,915.7 L579,915.4 L580,915 L581,917.2 L582,919 L583,916.7 L584,914.7 L585,917.2 L586,917.4 L587,914.7 L588,910 L589,907.5 L590,907.7 L591,906.5 L592,902.8 L593,904.1 L594,908.5 L595,913.6 L596,916.7 L597,914.6 L598,914 L599,916.2 L600,917.2 L601,916.5 L602,916.3 L603,918.5 L604,920.4 L605,918.9 L606,916.6 L607,916.8 L608,918 L609,917.3 L610,915.1 L611,914 L612,914.8 L613,915.6 L614,913.6 L615,911.2 L616,911.9 L617,913.5 L618,912.2 L619,909.8 L620,909.5 L621,912.8 L622,915 L623,915.2 L624,915.4 L625,918.9 L626,920.3 L627,919.7 L628,918 L629,917.5 L630,919.3 L631,920.3 L632,918 L633,915.8 L634,916.2 L635,919 L636,918.8 L637,916.3 L638,913.7 L639,913.8 L640,914.4 L641,912.9 L642,910.9 L643,912.7 L644,915.3 L645,916.9 L646,916.6 L647,916.9 L648,919.8 L649,922.7 L650,922.5 L651,919.9 L652,919.7 L653,920.4 L654,920.8 L655,917.7 L656,914.6 L657,914.1 L658,914.9 L659,915.5 L660,912.9 L661,912.2 L662,914.2 L663,917.3 L664,917.5 L665,916.4 L666,918.7 L667,921.6 L668,921.9 L669,920 L670,920.5 L671,922.5 L672,922.8 L673,921 L674,921.2 L675,923.1 L676,924.6 L677,923.6 L678,922.7 L679,923.4" fill="none" stroke="#8a7e80" stroke-width="1.2"/>
<path d="M435,909.1 L436,901.7 L437,893.5 L438,883.4 L439,876.6 L440,872 L441,868.5 L442,870 L443,870.4 L444,871.9 L445,878.5 L446,885.1 L447,888.5 L448,891.3 L449,896.9 L450,904.4 L451,909.8 L452,913.3 L453,914 L454,918.2 L455,923.2 L456,924.9 L457,921.6 L458,920.4 L459,921.5 L460,922.7 L461,920.5 L462,917.5 L463,914.6 L464,914.1 L465,913.2 L466,913.2 L467,913.2 L468,915 L469,918.3 L470,920.5 L471,918.7 L472,918.1 L473,920 L474,921.9 L475,921.3 L476,919.5 L477,919.7 L478,922.2 L479,923.2 L480,920.1 L481,919 L482,921.4 L483,923.7 L484,920.8 L485,918.6 L486,920.8 L487,923 L488,922.8 L489,920.8 L490,920.6 L491,921.9 L492,921.4 L493,919.9 L494,918.8 L495,920.9 L496,923.1 L497,920.5 L498,917.6 L499,920 L500,922.5 L501,920.9 L502,919.4 L503,920.7 L504,921.7 L505,919.9 L506,918.2 L507,919.2 L508,920.4 L509,918.5 L510,916.3 L511,915 L512,916.8 L513,918.6 L514,917.8 L515,915.9 L516,914 L517,915.4 L518,915.4 L519,911.4 L520,907.5 L521,909.7 L522,913.6 L523,914 L524,912.7 L525,911.8 L526,913.5 L527,915.2 L528,913.5 L529,911.5 L530,911.4 L531,912.4 L532,913.3 L533,910.9 L534,908.2 L535,908.7 L536,911.7 L537,913.8 L538,913.2 L539,912.7 L540,914.8 L541,916.9 L542,917.7 L543,916.8 L544,917.7 L545,920.4 L546,922.2 L547,920.5 L548,918.8 L549,918.6 L550,920.1 L551,921 L552,919 L553,917 L554,918.4 L555,921.1 L556,921.3 L557,919.6 L558,918.5 L559,919.7 L560,921 L561,919.1 L562,917.5 L563,919.3 L564,920.5 L565,918.7 L566,917 L567,917.7 L568,919.7 L569,920.9 L570,918.6 L571,914.5 L572,914.5 L573,914.5 L574,911.9 L575,908 L576,908 L577,910.3 L578,912.6 L579,912.3 L580,911.9 L581,914.4 L582,916.4 L583,913.7 L584,911.5 L585,914.4 L586,914.6 L587,911.5 L588,906.1 L589,903.3 L590,903.4 L591,902 L592,897.9 L593,899.3 L594,904.4 L595,910.3 L596,913.8 L597,911.3 L598,910.7 L599,913.2 L600,914.4 L601,913.6 L602,913.3 L603,915.9 L604,918 L605,916.3 L606,913.7 L607,913.9 L608,915.3 L609,914.4 L610,911.9 L611,910.7 L612,911.6 L613,912.5 L614,910.2 L615,907.4 L616,908.3 L617,910.1 L618,908.6 L619,905.9 L620,905.5 L621,909.3 L622,911.8 L623,912.1 L624,912.3 L625,916.3 L626,917.9 L627,917.3 L628,915.3 L629,914.7 L630,916.7 L631,917.9 L632,915.3 L633,912.7 L634,913.2 L635,916.4 L636,916.2 L637,913.3 L638,910.4 L639,910.5 L640,911.1 L641,909.5 L642,907.1 L643,909.2 L644,912.2 L645,914 L646,913.7 L647,914 L648,917.3 L649,920.6 L650,920.4 L651,917.5 L652,917.3 L653,918.1 L654,918.5 L655,914.9 L656,911.4 L657,910.8 L658,911.8 L659,912.4 L660,909.4 L661,908.7 L662,911 L663,914.4 L664,914.7 L665,913.5 L666,916.1 L667,919.4 L668,919.7 L669,917.6 L670,918.1 L671,920.4 L672,920.8 L673,918.7 L674,918.9 L675,921.1 L676,922.8 L677,921.7 L678,920.7 L679,921.5" fill="none" stroke="#85797b" stroke-width="1.2"/>
<path d="M435,905.3 L436,896.8 L437,887.5 L438,875.9 L439,868.1 L440,862.8 L441,859 L442,860.7 L443,861 L444,862.8 L445,870.3 L446,877.9 L447,881.7 L448,884.9 L449,891.3 L450,899.8 L451,906.1 L452,910 L453,910.8 L454,915.6 L455,921.3 L456,923.2 L457,919.5 L458,918.1 L459,919.4 L460,920.7 L461,918.2 L462,914.8 L463,911.6 L464,910.9 L465,909.9 L466,909.9 L467,909.9 L468,911.9 L469,915.7 L470,918.2 L471,916.1 L472,915.6 L473,917.7 L474,919.9 L475,919.2 L476,917.1 L477,917.3 L478,920.2 L479,921.3 L480,917.8 L481,916.5 L482,919.3 L483,921.9 L484,918.6 L485,916 L486,918.6 L487,921.1 L488,920.9 L489,918.6 L490,918.4 L491,919.9 L492,919.3 L493,917.5 L494,916.3 L495,918.7 L496,921.2 L497,918.3 L498,914.9 L499,917.6 L500,920.5 L501,918.7 L502,916.9 L503,918.4 L504,919.6 L505,917.6 L506,915.6 L507,916.7 L508,918.1 L509,916 L510,913.5 L511,912 L512,914 L513,916 L514,915.1 L515,913 L516,910.8 L517,912.4 L518,912.4 L519,907.9 L520,903.4 L521,905.9 L522,910.4 L523,910.9 L524,909.3 L525,908.3 L526,910.3 L527,912.2 L528,910.2 L529,908 L530,907.9 L531,909 L532,910 L533,907.3 L534,904.2 L535,904.8 L536,908.2 L537,910.6 L538,909.9 L539,909.3 L540,911.7 L541,914.2 L542,915 L543,914 L544,915.1 L545,918.1 L546,920.1 L547,918.3 L548,916.3 L549,916.1 L550,917.7 L551,918.9 L552,916.5 L553,914.2 L554,915.9 L555,918.9 L556,919.2 L557,917.2 L558,915.9 L559,917.4 L560,918.8 L561,916.6 L562,914.8 L563,916.9 L564,918.3 L565,916.2 L566,914.2 L567,915.1 L568,917.3 L569,918.7 L570,916.1 L571,911.4 L572,911.4 L573,911.4 L574,908.4 L575,903.9 L576,904 L577,906.7 L578,909.3 L579,908.9 L580,908.4 L581,911.2 L582,913.6 L583,910.5 L584,907.9 L585,911.2 L586,911.5 L587,908 L588,901.9 L589,898.6 L590,898.7 L591,897.2 L592,892.4 L593,894.1 L594,899.9 L595,906.6 L596,910.6 L597,907.8 L598,907.1 L599,909.9 L600,911.2 L601,910.4 L602,910 L603,913 L604,915.4 L605,913.5 L606,910.4 L607,910.7 L608,912.3 L609,911.3 L610,908.4 L611,907 L612,908.1 L613,909.2 L614,906.5 L615,903.3 L616,904.3 L617,906.4 L618,904.7 L619,901.6 L620,901.1 L621,905.4 L622,908.3 L623,908.6 L624,908.9 L625,913.5 L626,915.2 L627,914.6 L628,912.3 L629,911.7 L630,913.9 L631,915.3 L632,912.3 L633,909.4 L634,910 L635,913.5 L636,913.4 L637,910 L638,906.7 L639,906.8 L640,907.5 L641,905.6 L642,902.9 L643,905.4 L644,908.8 L645,910.8 L646,910.5 L647,910.9 L648,914.6 L649,918.4 L650,918.2 L651,914.8 L652,914.6 L653,915.5 L654,915.9 L655,911.9 L656,907.8 L657,907.2 L658,908.3 L659,909 L660,905.6 L661,904.8 L662,907.4 L663,911.3 L664,911.6 L665,910.2 L666,913.2 L667,917 L668,917.4 L669,914.9 L670,915.6 L671,918.1 L672,918.6 L673,916.2 L674,916.5 L675,918.9 L676,920.9 L677,919.7 L678,918.4 L679,919.4" fill="none" stroke="#8c8082" stroke-width="1.2"/>
<path d="M435,901.4 L436,891.9 L437,881.4 L438,868.4 L439,859.7 L440,853.7 L441,849.4 L442,851.3 L443,851.7 L444,853.7 L445,862.2 L446,870.6 L447,875 L448,878.6 L449,885.7 L450,895.3 L451,902.3 L452,906.7 L453,907.6 L454,913 L455,919.4 L456,921.6 L457,917.5 L458,915.9 L459,917.3 L460,918.8 L461,916 L462,912.1 L463,908.5 L464,907.8 L465,906.6 L466,906.6 L467,906.6 L468,908.9 L469,913.1 L470,916 L471,913.6 L472,913 L473,915.4 L474,917.8 L475,917.1 L476,914.7 L477,915 L478,918.2 L479,919.4 L480,915.5 L481,914 L482,917.2 L483,920.1 L484,916.4 L485,913.5 L486,916.4 L487,919.2 L488,919 L489,916.4 L490,916.1 L491,917.8 L492,917.2 L493,915.2 L494,913.8 L495,916.5 L496,919.3 L497,916 L498,912.3 L499,915.3 L500,918.5 L501,916.5 L502,914.5 L503,916.2 L504,917.6 L505,915.3 L506,913 L507,914.3 L508,915.9 L509,913.5 L510,910.6 L511,908.9 L512,911.2 L513,913.5 L514,912.5 L515,910.1 L516,907.6 L517,909.4 L518,909.5 L519,904.4 L520,899.3 L521,902.1 L522,907.2 L523,907.7 L524,905.9 L525,904.8 L526,907 L527,909.2 L528,907 L529,904.5 L530,904.4 L531,905.6 L532,906.8 L533,903.7 L534,900.2 L535,900.9 L536,904.7 L537,907.3 L538,906.6 L539,905.9 L540,908.7 L541,911.4 L542,912.4 L543,911.2 L544,912.4 L545,915.8 L546,918.1 L547,916 L548,913.8 L549,913.5 L550,915.4 L551,916.7 L552,914.1 L553,911.4 L554,913.3 L555,916.8 L556,917.1 L557,914.8 L558,913.4 L559,915 L560,916.6 L561,914.2 L562,912.1 L563,914.5 L564,916 L565,913.7 L566,911.4 L567,912.4 L568,914.9 L569,916.5 L570,913.6 L571,908.3 L572,908.3 L573,908.3 L574,904.9 L575,899.9 L576,900 L577,903 L578,905.9 L579,905.5 L580,904.9 L581,908.1 L582,910.8 L583,907.3 L584,904.4 L585,908.1 L586,908.4 L587,904.5 L588,897.6 L589,893.9 L590,894.1 L591,892.3 L592,887 L593,888.8 L594,895.4 L595,902.9 L596,907.4 L597,904.2 L598,903.4 L599,906.6 L600,908.1 L601,907.2 L602,906.8 L603,910.1 L604,912.8 L605,910.7 L606,907.2 L607,907.5 L608,909.3 L609,908.2 L610,905 L611,903.4 L612,904.6 L613,905.8 L614,902.8 L615,899.2 L616,900.3 L617,902.7 L618,900.8 L619,897.3 L620,896.7 L621,901.6 L622,904.8 L623,905.2 L624,905.5 L625,910.6 L626,912.6 L627,911.9 L628,909.3 L629,908.6 L630,911.1 L631,912.7 L632,909.3 L633,906 L634,906.7 L635,910.7 L636,910.5 L637,906.8 L638,903 L639,903.1 L640,903.9 L641,901.8 L642,898.8 L643,901.6 L644,905.4 L645,907.6 L646,907.3 L647,907.7 L648,911.9 L649,916.1 L650,915.9 L651,912.1 L652,911.9 L653,912.9 L654,913.4 L655,908.8 L656,904.3 L657,903.6 L658,904.8 L659,905.6 L660,901.8 L661,900.8 L662,903.8 L663,908.2 L664,908.5 L665,907 L666,910.4 L667,914.5 L668,915 L669,912.3 L670,913 L671,915.8 L672,916.4 L673,913.7 L674,914 L675,916.8 L676,919 L677,917.6 L678,916.2 L679,917.2" fill="none" stroke="#7d7173" stroke-width="1.2"/>
<path d="M438,936.5 C440.2,936.5 441,927.5 442.5,927.5 C444,927.5 444.8,936.5 447,936.5Z" fill="#E0B400"/><path d="M455,936.5 C457,936.5 457.7,927.5 459,927.5 C460.3,927.5 461,936.5 463,936.5Z" fill="#56A64B"/><path d="M475,936.5 C476.5,936.5 477,932.5 478,932.5 C479,932.5 479.5,936.5 481,936.5Z" fill="#56A64B"/><path d="M484.5,936.5 C485.8,936.5 486.2,932.5 487,932.5 C487.8,932.5 488.2,936.5 489.5,936.5Z" fill="#56A64B"/><path d="M492.5,936.5 C493.8,936.5 494.2,933.5 495,933.5 C495.8,933.5 496.2,936.5 497.5,936.5Z" fill="#56A64B"/><path d="M512,936.5 C516.5,936.5 518,933.5 521,933.5 C524,933.5 525.5,936.5 530,936.5Z" fill="#5794F2"/><path d="M531,936.5 C535,936.5 536.3,929.5 539,929.5 C541.7,929.5 543,936.5 547,936.5Z" fill="#56A64B"/><path d="M589,936.5 C592,936.5 593,928.5 595,928.5 C597,928.5 598,936.5 601,936.5Z" fill="#56A64B"/><path d="M620,936.5 C622.5,936.5 623.3,927.5 625,927.5 C626.7,927.5 627.5,936.5 630,936.5Z" fill="#5794F2"/><path d="M616,936.5 C618,936.5 618.7,928.5 620,928.5 C621.3,928.5 622,936.5 624,936.5Z" fill="#E0B400"/><path d="M653,936.5 C655,936.5 655.7,930.5 657,930.5 C658.3,930.5 659,936.5 661,936.5Z" fill="#56A64B"/><path d="M661,936.5 C662.5,936.5 663,931.5 664,931.5 C665,931.5 665.5,936.5 667,936.5Z" fill="#E0B400"/><path d="M673.5,936.5 C675,936.5 675.5,931.5 676.5,931.5 C677.5,931.5 678,936.5 679.5,936.5Z" fill="#5794F2"/>
<rect x="373.0" y="970.0" width="14" height="4" rx="2" fill="#56A64B"/>
<text x="395.3" y="975.7" font-size="12" textLength="77.7" lengthAdjust="spacing">compactor-0</text>
<rect x="483.9" y="970.0" width="14" height="4" rx="2" fill="#E0B400"/>
<text x="506.3" y="975.7" font-size="12" textLength="76.9" lengthAdjust="spacing">compactor-1</text>
<rect x="593.5" y="970.0" width="14" height="4" rx="2" fill="#5794F2"/>
<text x="615.3" y="975.7" font-size="12" textLength="76.9" lengthAdjust="spacing" clip-path="url(#cl12)">compactor-2</text>
<rect x="373.0" y="993.3" width="14" height="4" rx="2" fill="#FA6400"/>
<text x="395.3" y="999.0" font-size="12" textLength="147.8" lengthAdjust="spacing">compactor-secondary-0</text>
<rect x="373.0" y="1016.9" width="14" height="4" rx="2" fill="#E02F44"/>
<text x="395.3" y="1022.6" font-size="12" textLength="235.9" lengthAdjust="spacing">overrides-exporter-6c544b4ddf-jvwh8</text>
<rect x="704.5" y="782.5" width="335" height="257" rx="2" fill="#fff" stroke="#e1e3e5"/>
<text x="713.6" y="804.1" font-size="15" font-weight="500" textLength="190.0" lengthAdjust="spacing" stroke="#24292e" stroke-width="0.3">Inflight requests (per pod)</text>
<path d="M745.5,838.5 H1023.5 M745.5,875.5 H1023.5 M745.5,912.5 H1023.5 M745.5,948.5 H1023.5 M745.5,985.5 H1023.5 M779.0,831.5 V990.5 M848.5,831.5 V990.5 M918.0,831.5 V990.5 M987.5,831.5 V990.5" stroke="#e4e5e6" stroke-width="1" fill="none"/>
<text x="739.5" y="842.9" font-size="12" text-anchor="end">200</text>
<text x="739.5" y="879.9" font-size="12" text-anchor="end">150</text>
<text x="739.5" y="916.9" font-size="12" text-anchor="end">100</text>
<text x="739.5" y="952.9" font-size="12" text-anchor="end">50</text>
<text x="739.5" y="989.9" font-size="12" text-anchor="end">0</text>
<text x="779.0" y="1005.0" font-size="12" text-anchor="middle">15:30</text>
<text x="848.5" y="1005.0" font-size="12" text-anchor="middle">15:45</text>
<text x="918.0" y="1005.0" font-size="12" text-anchor="middle">16:00</text>
<text x="987.5" y="1005.0" font-size="12" text-anchor="middle">16:15</text>
<path d="M745.5,850.5 H1023.5 V985.5 H745.5Z" fill="#E0B400" fill-opacity="0.017"/>
<path d="M745.5,850.5 H1023.5" stroke="#E0B400" stroke-width="1"/>
<path d="M745.5,985.5 H1023.5" stroke="#56A64B" stroke-width="1"/>
<rect x="717.0" y="1020.1" width="14" height="4" rx="2" fill="#56A64B"/>
<text x="739.5" y="1025.0" font-size="12" textLength="21.0" lengthAdjust="spacing">avg</text>
<rect x="771.2" y="1020.1" width="14" height="4" rx="2" fill="#E0B400"/>
<text x="793.0" y="1025.0" font-size="12" textLength="43.2" lengthAdjust="spacing">highest</text>
<rect x="1048.5" y="782.5" width="335" height="257" rx="2" fill="#fff" stroke="#e1e3e5"/>
<text x="1057.6" y="804.1" font-size="15" font-weight="500" textLength="249.0" lengthAdjust="spacing" stroke="#24292e" stroke-width="0.3">Ingress TCP connections (per pod)</text>
<circle cx="1331" cy="799" r="5.9" fill="none" stroke="#5b6168" stroke-width="1.3"/>
<rect x="1330.4" y="798.2" width="1.3" height="4" fill="#5b6168"/><circle cx="1331" cy="796.1" r="0.8" fill="#5b6168"/>
<path d="M1082.5,836.5 H1367.5 M1082.5,886.5 H1367.5 M1082.5,936.5 H1367.5 M1082.5,986.5 H1367.5 M1116.8,831.5 V991.5 M1188.1,831.5 V991.5 M1259.3,831.5 V991.5 M1330.6,831.5 V991.5" stroke="#e4e5e6" stroke-width="1" fill="none"/>
<text x="1076.5" y="840.9" font-size="12" text-anchor="end">60</text>
<text x="1076.5" y="890.9" font-size="12" text-anchor="end">40</text>
<text x="1076.5" y="940.9" font-size="12" text-anchor="end">20</text>
<text x="1076.5" y="990.9" font-size="12" text-anchor="end">0</text>
<text x="1116.8" y="1006.0" font-size="12" text-anchor="middle">15:30</text>
<text x="1188.1" y="1006.0" font-size="12" text-anchor="middle">15:45</text>
<text x="1259.3" y="1006.0" font-size="12" text-anchor="middle">16:00</text>
<text x="1330.6" y="1006.0" font-size="12" text-anchor="middle">16:15</text>
<path d="M1082.5,860.8 L1084,863.2 L1085.4,864.9 L1086.9,866.9 L1088.3,867.2 L1089.8,868.8 L1091.2,869.7 L1092.7,870.3 L1094.1,871.6 L1095.6,871.2 L1097,872.3 L1098.5,872.3 L1099.9,872.9 L1101.4,873.6 L1102.8,874.8 L1104.3,874.8 L1105.7,874.3 L1107.2,875.1 L1108.6,875.2 L1110.1,877 L1111.5,880.8 L1113,880.3 L1114.4,885.4 L1115.9,869.3 L1117.3,888.8 L1118.8,885.6 L1120.2,886.1 L1121.7,887 L1123.1,888.5 L1124.6,887.7 L1126,876.4 L1127.5,887.3 L1128.9,890.1 L1130.4,888 L1131.8,890.4 L1133.3,887 L1134.7,866.3 L1136.2,890.9 L1137.6,895 L1139.1,890.8 L1140.5,871.3 L1142,891.6 L1143.4,891.4 L1144.9,891.8 L1146.3,881 L1147.8,889.5 L1149.2,876.4 L1150.7,891.3 L1152.1,892.5 L1153.6,890.9 L1155,875.9 L1156.5,890.6 L1157.9,891.9 L1159.4,891.1 L1160.8,892.4 L1162.3,889.8 L1163.7,874.4 L1165.2,890.5 L1166.6,891.5 L1168.1,891.9 L1169.5,875.9 L1171,890.6 L1172.4,895.1 L1173.9,893.3 L1175.3,891.4 L1176.8,889.3 L1178.2,876.4 L1179.7,892.8 L1181.1,894.7 L1182.6,889.4 L1184,876.4 L1185.5,893 L1186.9,896 L1188.4,892.7 L1189.8,892.3 L1191.3,892.9 L1192.7,861.2 L1194.2,892.2 L1195.6,891.9 L1197.1,883.5 L1198.5,894.5 L1200,892.3 L1201.4,883.5 L1202.9,891.7 L1204.3,894.3 L1205.8,891.6 L1207.2,879.5 L1208.7,892.3 L1210.1,893 L1211.6,873.9 L1213,892 L1214.5,892.1 L1215.9,891.8 L1217.4,889.8 L1218.8,891.5 L1220.3,891.9 L1221.7,894.2 L1223.2,891.4 L1224.6,891.4 L1226.1,858.2 L1227.5,893 L1229,889.1 L1230.4,876.4 L1231.9,893.6 L1233.3,891.8 L1234.8,890.1 L1236.2,865.8 L1237.7,891.6 L1239.1,891.6 L1240.6,878.4 L1242,893.2 L1243.5,892.8 L1244.9,891.2 L1246.4,856.1 L1247.8,893.9 L1249.3,861.2 L1250.7,894 L1252.2,891 L1253.6,894.8 L1255.1,869.3 L1256.5,891.3 L1258,891.1 L1259.4,896.1 L1260.9,892.3 L1262.3,892.6 L1263.8,892.1 L1265.2,895.8 L1266.7,889.9 L1268.1,881.5 L1269.6,890.4 L1271,892.5 L1272.5,890.1 L1273.9,878.4 L1275.4,890.4 L1276.8,891.3 L1278.3,890.6 L1279.7,891.6 L1281.2,892.4 L1282.6,894.4 L1284.1,874.4 L1285.5,895.4 L1287,889.6 L1288.4,893.8 L1289.9,891.4 L1291.3,893 L1292.8,890.1 L1294.2,893.5 L1295.7,889.3 L1297.1,895.9 L1298.6,889.2 L1300,895.7 L1301.5,889.7 L1302.9,871.3 L1304.4,890.6 L1305.8,891.3 L1307.3,889.3 L1308.7,893.1 L1310.2,890.8 L1311.6,846.5 L1313.1,893.6 L1314.5,891.4 L1316,891.3 L1317.4,856.1 L1318.9,892.7 L1320.3,892.9 L1321.8,893.1 L1323.2,894.1 L1324.7,889.3 L1326.1,891.2 L1327.6,889.9 L1329,895.9 L1330.5,864.2 L1331.9,893.8 L1333.4,890.5 L1334.8,893 L1336.3,861.2 L1337.7,892.3 L1339.2,892.2 L1340.6,871.3 L1342.1,893.3 L1343.5,894 L1345,873.9 L1346.4,893.6 L1347.9,891.5 L1349.3,864.2 L1350.8,892.8 L1352.2,896.1 L1353.7,889.2 L1355.1,879.5 L1356.6,891.3 L1358,895.6 L1359.5,891.3 L1360.9,892.8 L1362.4,893.4 L1363.8,871.3 L1365.3,889.1 L1366.7,891.4 L1366.7,986.5 L1082.5,986.5Z" fill="#E0B400" fill-opacity="0.017"/>
<path d="M1082.5,860.8 L1084,863.2 L1085.4,864.9 L1086.9,866.9 L1088.3,867.2 L1089.8,868.8 L1091.2,869.7 L1092.7,870.3 L1094.1,871.6 L1095.6,871.2 L1097,872.3 L1098.5,872.3 L1099.9,872.9 L1101.4,873.6 L1102.8,874.8 L1104.3,874.8 L1105.7,874.3 L1107.2,875.1 L1108.6,875.2 L1110.1,877 L1111.5,880.8 L1113,880.3 L1114.4,885.4 L1115.9,869.3 L1117.3,888.8 L1118.8,885.6 L1120.2,886.1 L1121.7,887 L1123.1,888.5 L1124.6,887.7 L1126,876.4 L1127.5,887.3 L1128.9,890.1 L1130.4,888 L1131.8,890.4 L1133.3,887 L1134.7,866.3 L1136.2,890.9 L1137.6,895 L1139.1,890.8 L1140.5,871.3 L1142,891.6 L1143.4,891.4 L1144.9,891.8 L1146.3,881 L1147.8,889.5 L1149.2,876.4 L1150.7,891.3 L1152.1,892.5 L1153.6,890.9 L1155,875.9 L1156.5,890.6 L1157.9,891.9 L1159.4,891.1 L1160.8,892.4 L1162.3,889.8 L1163.7,874.4 L1165.2,890.5 L1166.6,891.5 L1168.1,891.9 L1169.5,875.9 L1171,890.6 L1172.4,895.1 L1173.9,893.3 L1175.3,891.4 L1176.8,889.3 L1178.2,876.4 L1179.7,892.8 L1181.1,894.7 L1182.6,889.4 L1184,876.4 L1185.5,893 L1186.9,896 L1188.4,892.7 L1189.8,892.3 L1191.3,892.9 L1192.7,861.2 L1194.2,892.2 L1195.6,891.9 L1197.1,883.5 L1198.5,894.5 L1200,892.3 L1201.4,883.5 L1202.9,891.7 L1204.3,894.3 L1205.8,891.6 L1207.2,879.5 L1208.7,892.3 L1210.1,893 L1211.6,873.9 L1213,892 L1214.5,892.1 L1215.9,891.8 L1217.4,889.8 L1218.8,891.5 L1220.3,891.9 L1221.7,894.2 L1223.2,891.4 L1224.6,891.4 L1226.1,858.2 L1227.5,893 L1229,889.1 L1230.4,876.4 L1231.9,893.6 L1233.3,891.8 L1234.8,890.1 L1236.2,865.8 L1237.7,891.6 L1239.1,891.6 L1240.6,878.4 L1242,893.2 L1243.5,892.8 L1244.9,891.2 L1246.4,856.1 L1247.8,893.9 L1249.3,861.2 L1250.7,894 L1252.2,891 L1253.6,894.8 L1255.1,869.3 L1256.5,891.3 L1258,891.1 L1259.4,896.1 L1260.9,892.3 L1262.3,892.6 L1263.8,892.1 L1265.2,895.8 L1266.7,889.9 L1268.1,881.5 L1269.6,890.4 L1271,892.5 L1272.5,890.1 L1273.9,878.4 L1275.4,890.4 L1276.8,891.3 L1278.3,890.6 L1279.7,891.6 L1281.2,892.4 L1282.6,894.4 L1284.1,874.4 L1285.5,895.4 L1287,889.6 L1288.4,893.8 L1289.9,891.4 L1291.3,893 L1292.8,890.1 L1294.2,893.5 L1295.7,889.3 L1297.1,895.9 L1298.6,889.2 L1300,895.7 L1301.5,889.7 L1302.9,871.3 L1304.4,890.6 L1305.8,891.3 L1307.3,889.3 L1308.7,893.1 L1310.2,890.8 L1311.6,846.5 L1313.1,893.6 L1314.5,891.4 L1316,891.3 L1317.4,856.1 L1318.9,892.7 L1320.3,892.9 L1321.8,893.1 L1323.2,894.1 L1324.7,889.3 L1326.1,891.2 L1327.6,889.9 L1329,895.9 L1330.5,864.2 L1331.9,893.8 L1333.4,890.5 L1334.8,893 L1336.3,861.2 L1337.7,892.3 L1339.2,892.2 L1340.6,871.3 L1342.1,893.3 L1343.5,894 L1345,873.9 L1346.4,893.6 L1347.9,891.5 L1349.3,864.2 L1350.8,892.8 L1352.2,896.1 L1353.7,889.2 L1355.1,879.5 L1356.6,891.3 L1358,895.6 L1359.5,891.3 L1360.9,892.8 L1362.4,893.4 L1363.8,871.3 L1365.3,889.1 L1366.7,891.4" fill="none" stroke="#E0B400" stroke-width="1" stroke-linejoin="round"/>
<path d="M1082.5,916 L1084,916.4 L1085.5,916.9 L1087,917.7 L1088.5,918 L1090,918.1 L1091.5,919 L1093,919.6 L1094.5,919.8 L1096,920 L1097.5,920.4 L1099,921.2 L1100.5,921.8 L1102,922.2 L1103.5,922.8 L1105,923.4 L1106.5,923.5 L1108,923.8 L1109.5,924.6 L1111,924.9 L1112.5,925 L1114,925.6 L1115.5,926.2 L1117,926.7 L1118.5,927.1 L1120,927.4 L1121.5,927.7 L1123,928.1 L1124.5,928.6 L1126,929.1 L1127.5,929.6 L1129,929.7 L1130.5,929.9 L1132,930.3 L1133.5,930.8 L1135,931.3 L1136.5,931.3 L1138,931.5 L1139.5,932.3 L1141,932.4 L1142.5,932.1 L1144,932.7 L1145.5,933.2 L1147,933.8 L1148.5,933.9 L1150,933.7 L1151.5,934 L1153,934.2 L1154.5,934.3 L1156,934.8 L1157.5,935.5 L1159,935.7 L1160.5,935.7 L1162,935.4 L1163.5,935.7 L1165,936.2 L1166.5,936.2 L1168,936.3 L1169.5,936.4 L1171,936.7 L1172.5,937 L1174,937.3 L1175.5,937.4 L1177,937.3 L1178.5,937.2 L1180,937.1 L1181.5,937.2 L1183,937.3 L1184.5,937 L1186,937 L1187.5,937.1 L1189,937 L1190.5,937 L1192,937.5 L1193.5,937.4 L1195,937.2 L1196.5,937.4 L1198,937.4 L1199.5,937.2 L1201,937.1 L1202.5,937.2 L1204,937.3 L1205.5,937.3 L1207,937.1 L1208.5,937.1 L1210,937.3 L1211.5,937.5 L1213,937.4 L1214.5,937 L1216,936.9 L1217.5,937 L1219,936.9 L1220.5,936.9 L1222,937.2 L1223.5,937.1 L1225,936.9 L1226.5,937.2 L1228,937.3 L1229.5,937.1 L1231,937.1 L1232.5,937.4 L1234,937.2 L1235.5,937.3 L1237,937.5 L1238.5,937.7 L1240,937.7 L1241.5,937.8 L1243,937.8 L1244.5,937.5 L1246,937.6 L1247.5,937.9 L1249,937.9 L1250.5,937.8 L1252,937.4 L1253.5,937.6 L1255,938 L1256.5,938 L1258,937.9 L1259.5,937.4 L1261,937.5 L1262.5,937.8 L1264,937.8 L1265.5,937.8 L1267,937.8 L1268.5,937.8 L1270,937.9 L1271.5,937.6 L1273,937.6 L1274.5,937.9 L1276,938 L1277.5,937.9 L1279,937.6 L1280.5,937.6 L1282,938.1 L1283.5,938.1 L1285,938 L1286.5,937.7 L1288,937.5 L1289.5,937.7 L1291,937.9 L1292.5,938.1 L1294,938.5 L1295.5,938.7 L1297,938.6 L1298.5,938.7 L1300,938.8 L1301.5,938.7 L1303,938.5 L1304.5,938.1 L1306,937.9 L1307.5,937.8 L1309,937.7 L1310.5,937.7 L1312,937.8 L1313.5,937.9 L1315,937.8 L1316.5,937.8 L1318,937.8 L1319.5,938 L1321,938 L1322.5,937.8 L1324,937.9 L1325.5,937.9 L1327,937.9 L1328.5,937.8 L1330,937.7 L1331.5,937.5 L1333,937.4 L1334.5,937.3 L1336,937.2 L1337.5,937.4 L1339,937.4 L1340.5,937.5 L1342,937.7 L1343.5,937.9 L1345,938.1 L1346.5,938.1 L1348,938 L1349.5,937.9 L1351,937.8 L1352.5,938 L1354,937.8 L1355.5,937.7 L1357,937.4 L1358.5,937.3 L1360,937.2 L1361.5,937.3 L1363,937.5 L1364.5,937.7 L1366,937.7 L1367.5,937.5 L1367.5,986.5 L1082.5,986.5Z" fill="#56A64B" fill-opacity="0.017"/>
<path d="M1082.5,916 L1084,916.4 L1085.5,916.9 L1087,917.7 L1088.5,918 L1090,918.1 L1091.5,919 L1093,919.6 L1094.5,919.8 L1096,920 L1097.5,920.4 L1099,921.2 L1100.5,921.8 L1102,922.2 L1103.5,922.8 L1105,923.4 L1106.5,923.5 L1108,923.8 L1109.5,924.6 L1111,924.9 L1112.5,925 L1114,925.6 L1115.5,926.2 L1117,926.7 L1118.5,927.1 L1120,927.4 L1121.5,927.7 L1123,928.1 L1124.5,928.6 L1126,929.1 L1127.5,929.6 L1129,929.7 L1130.5,929.9 L1132,930.3 L1133.5,930.8 L1135,931.3 L1136.5,931.3 L1138,931.5 L1139.5,932.3 L1141,932.4 L1142.5,932.1 L1144,932.7 L1145.5,933.2 L1147,933.8 L1148.5,933.9 L1150,933.7 L1151.5,934 L1153,934.2 L1154.5,934.3 L1156,934.8 L1157.5,935.5 L1159,935.7 L1160.5,935.7 L1162,935.4 L1163.5,935.7 L1165,936.2 L1166.5,936.2 L1168,936.3 L1169.5,936.4 L1171,936.7 L1172.5,937 L1174,937.3 L1175.5,937.4 L1177,937.3 L1178.5,937.2 L1180,937.1 L1181.5,937.2 L1183,937.3 L1184.5,937 L1186,937 L1187.5,937.1 L1189,937 L1190.5,937 L1192,937.5 L1193.5,937.4 L1195,937.2 L1196.5,937.4 L1198,937.4 L1199.5,937.2 L1201,937.1 L1202.5,937.2 L1204,937.3 L1205.5,937.3 L1207,937.1 L1208.5,937.1 L1210,937.3 L1211.5,937.5 L1213,937.4 L1214.5,937 L1216,936.9 L1217.5,937 L1219,936.9 L1220.5,936.9 L1222,937.2 L1223.5,937.1 L1225,936.9 L1226.5,937.2 L1228,937.3 L1229.5,937.1 L1231,937.1 L1232.5,937.4 L1234,937.2 L1235.5,937.3 L1237,937.5 L1238.5,937.7 L1240,937.7 L1241.5,937.8 L1243,937.8 L1244.5,937.5 L1246,937.6 L1247.5,937.9 L1249,937.9 L1250.5,937.8 L1252,937.4 L1253.5,937.6 L1255,938 L1256.5,938 L1258,937.9 L1259.5,937.4 L1261,937.5 L1262.5,937.8 L1264,937.8 L1265.5,937.8 L1267,937.8 L1268.5,937.8 L1270,937.9 L1271.5,937.6 L1273,937.6 L1274.5,937.9 L1276,938 L1277.5,937.9 L1279,937.6 L1280.5,937.6 L1282,938.1 L1283.5,938.1 L1285,938 L1286.5,937.7 L1288,937.5 L1289.5,937.7 L1291,937.9 L1292.5,938.1 L1294,938.5 L1295.5,938.7 L1297,938.6 L1298.5,938.7 L1300,938.8 L1301.5,938.7 L1303,938.5 L1304.5,938.1 L1306,937.9 L1307.5,937.8 L1309,937.7 L1310.5,937.7 L1312,937.8 L1313.5,937.9 L1315,937.8 L1316.5,937.8 L1318,937.8 L1319.5,938 L1321,938 L1322.5,937.8 L1324,937.9 L1325.5,937.9 L1327,937.9 L1328.5,937.8 L1330,937.7 L1331.5,937.5 L1333,937.4 L1334.5,937.3 L1336,937.2 L1337.5,937.4 L1339,937.4 L1340.5,937.5 L1342,937.7 L1343.5,937.9 L1345,938.1 L1346.5,938.1 L1348,938 L1349.5,937.9 L1351,937.8 L1352.5,938 L1354,937.8 L1355.5,937.7 L1357,937.4 L1358.5,937.3 L1360,937.2 L1361.5,937.3 L1363,937.5 L1364.5,937.7 L1366,937.7 L1367.5,937.5" fill="none" stroke="#56A64B" stroke-width="1" stroke-linejoin="round"/>
<path d="M1082.5,986.5 H1367.5" stroke="#5794F2" stroke-width="1"/>
<rect x="1061.0" y="1020.1" width="14" height="4" rx="2" fill="#56A64B"/>
<text x="1083.5" y="1025.0" font-size="12" textLength="21.0" lengthAdjust="spacing">avg</text>
<rect x="1115.2" y="1020.1" width="14" height="4" rx="2" fill="#E0B400"/>
<text x="1137.0" y="1025.0" font-size="12" textLength="43.2" lengthAdjust="spacing">highest</text>
<rect x="1191.5" y="1020.1" width="14" height="4" rx="2" fill="#5794F2"/>
<text x="1213.0" y="1025.0" font-size="12" textLength="24.7" lengthAdjust="spacing">limit</text></svg></body></html>
